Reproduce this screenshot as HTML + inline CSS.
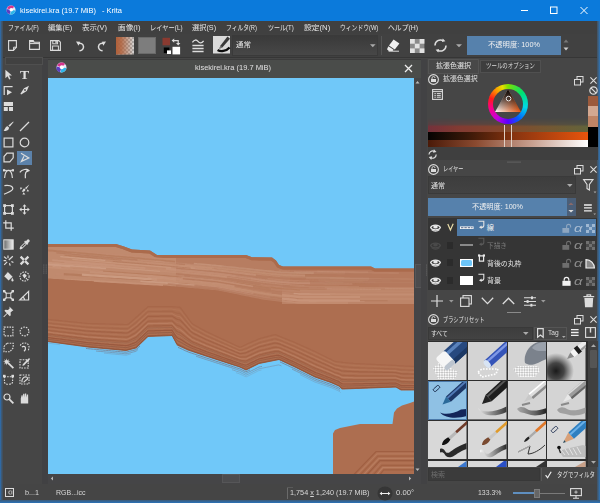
<!DOCTYPE html>
<html><head><meta charset="utf-8"><title>kisekirei.kra - Krita</title>
<style>

html,body{margin:0;padding:0;}
body{width:600px;height:503px;overflow:hidden;background:#464646;position:relative;font-family:"Liberation Sans","Noto Sans CJK JP",sans-serif;color:#ddd;font-size:8px;}
.a{position:absolute;}
.t{position:absolute;white-space:nowrap;line-height:14px;height:14px;display:inline-block;transform-origin:0 50%;}
svg{position:absolute;overflow:visible;}
</style></head><body>
<div class="a" style="left:0.0px;top:0.0px;width:600.0px;height:503.0px;background:linear-gradient(90deg,#2a70b8 0,#3c5a78 1.500px,#464646 3.500px);"></div>
<div class="a" style="left:3.0px;top:21.0px;width:594.0px;height:480.0px;background:#464646;"></div>
<div class="a" style="left:597.0px;top:21.0px;width:3.0px;height:482.0px;background:linear-gradient(90deg,#44505c,#2f74b5);"></div>
<div class="a" style="left:0.0px;top:500.0px;width:600.0px;height:3.0px;background:linear-gradient(180deg,#3d5a78,#2a72b8);"></div>
<div class="a" style="left:0.0px;top:0.0px;width:600.0px;height:21.0px;background:#0b7adb;"></div>
<svg class="a" style="left:6.2px;top:5.0px;" width="10" height="10" viewBox="0 0 11 11"><circle cx="5.5" cy="5.5" r="5" fill="#e9e4f3"/><path d="M1 3.5A5 5 0 0 1 9 2L5.5 5.5z" fill="#d6348c"/><path d="M.6 4.5A5 5 0 0 0 4 10.3L5.5 5.5z" fill="#5a3fc0"/><path d="M4.5 10.4A5 5 0 0 0 10.4 6L5.5 5.5z" fill="#2eb6e8"/><circle cx="5.8" cy="5.2" r="2" fill="#fff"/></svg>
<svg class="a" style="left:518.0px;top:0.0px;" width="82" height="21" viewBox="0 0 82 21"><path d="M3 10.5h7" stroke="#fff" stroke-width="1"/><rect x="32.5" y="7" width="6.5" height="6.5" fill="none" stroke="#fff" stroke-width="1"/><path d="M62.5 7l7 7m0-7l-7 7" stroke="#fff" stroke-width="1"/></svg>
<div class="a" style="left:3.0px;top:21.0px;width:594.0px;height:13.0px;background:#404040;"></div>
<div class="a" style="left:3.0px;top:34.0px;width:594.0px;height:22.5px;background:#414141;"></div>
<div class="a" style="left:3.0px;top:56.5px;width:594.0px;height:1.2px;background:#363636;"></div>
<div class="a" style="left:48.0px;top:58.5px;width:373.0px;height:19.5px;background:#4a4c4a;"></div>
<div class="a" style="left:48.0px;top:58.5px;width:373.0px;height:1.0px;background:#3c3c3c;"></div>
<svg class="a" style="left:404.0px;top:64.0px;" width="9" height="9" viewBox="0 0 9 9"><path d="M1 1l7 7m0-7l-7 7" stroke="#eee" stroke-width="1.3"/></svg>
<svg class="a" style="left:56.0px;top:62.0px;" width="11" height="11" viewBox="0 0 11 11"><circle cx="5.5" cy="5.5" r="5" fill="#e9e4f3"/><path d="M1 3.5A5 5 0 0 1 9 2L5.5 5.5z" fill="#d6348c"/><path d="M.6 4.5A5 5 0 0 0 4 10.3L5.5 5.5z" fill="#5a3fc0"/><path d="M4.5 10.4A5 5 0 0 0 10.4 6L5.5 5.5z" fill="#2eb6e8"/><circle cx="5.8" cy="5.2" r="2" fill="#fff"/></svg>
<svg class="a" style="left:48.0px;top:77.5px;overflow:hidden;" width="366" height="396" viewBox="48 77.5 366 396"><defs><clipPath id="cu"><polygon points="48.0,243.4 116.0,243.4 124.0,246.0 132.0,249.0 150.0,250.0 157.0,254.5 246.0,254.5 252.0,256.8 272.0,257.0 276.0,260.0 279.0,264.5 283.0,266.0 371.0,266.0 375.0,268.0 414.0,268.0 414.0,390.0 401.0,390.0 396.0,387.0 342.0,389.0 339.0,386.0 331.0,382.5 315.0,377.0 295.0,367.0 279.0,359.5 259.0,363.5 252.0,367.0 246.0,370.0 240.0,367.0 206.0,356.0 188.0,350.0 177.0,345.0 172.0,335.6 148.0,336.5 136.0,348.0 126.0,350.5 88.0,347.0 48.0,341.6"/></clipPath></defs><rect x="48" y="77" width="366" height="398" fill="#70c8f9"/><polygon points="48.0,243.4 116.0,243.4 124.0,246.0 132.0,249.0 150.0,250.0 157.0,254.5 246.0,254.5 252.0,256.8 272.0,257.0 276.0,260.0 279.0,264.5 283.0,266.0 371.0,266.0 375.0,268.0 414.0,268.0 414.0,390.0 401.0,390.0 396.0,387.0 342.0,389.0 339.0,386.0 331.0,382.5 315.0,377.0 295.0,367.0 279.0,359.5 259.0,363.5 252.0,367.0 246.0,370.0 240.0,367.0 206.0,356.0 188.0,350.0 177.0,345.0 172.0,335.6 148.0,336.5 136.0,348.0 126.0,350.5 88.0,347.0 48.0,341.6" fill="#ad6e50"/><g clip-path="url(#cu)" fill="none"><polygon points="48.0,246.4 50.0,246.4 52.0,246.4 54.0,246.4 56.0,246.4 58.0,246.4 60.0,246.4 62.0,246.4 64.0,246.4 66.0,246.4 68.0,246.4 70.0,246.4 72.0,246.4 74.0,246.4 76.0,246.4 78.0,246.4 80.0,246.4 82.0,246.4 84.0,246.4 86.0,246.4 88.0,246.4 90.0,246.4 92.0,246.4 94.0,246.4 96.0,246.4 98.0,246.4 100.0,246.4 102.0,246.4 104.0,246.4 106.0,246.4 108.0,246.4 110.0,246.4 112.0,246.4 114.0,246.4 116.0,246.4 118.0,247.1 120.0,247.7 122.0,248.3 124.0,249.0 126.0,249.8 128.0,250.5 130.0,251.2 132.0,252.0 134.0,252.1 136.0,252.2 138.0,252.3 140.0,252.4 142.0,252.6 144.0,252.7 146.0,252.8 148.0,252.9 150.0,253.0 152.0,254.3 154.0,255.6 156.0,256.9 158.0,257.5 160.0,257.5 162.0,257.5 164.0,257.5 166.0,257.5 168.0,257.5 170.0,257.5 172.0,257.5 174.0,257.5 176.0,257.5 176.0,286.0 174.0,285.8 172.0,285.7 170.0,285.5 168.0,285.3 166.0,285.1 164.0,284.9 162.0,284.8 160.0,284.7 158.0,284.6 156.0,284.5 154.0,284.3 152.0,284.2 150.0,284.1 148.0,284.0 146.0,283.9 144.0,283.7 142.0,283.6 140.0,283.5 138.0,283.4 136.0,283.3 134.0,283.1 132.0,283.0 130.0,282.9 128.0,282.8 126.0,282.7 124.0,282.5 122.0,282.4 120.0,282.3 118.0,282.2 116.0,282.1 114.0,281.9 112.0,281.8 110.0,281.7 108.0,281.6 106.0,281.5 104.0,281.4 102.0,281.2 100.0,281.1 98.0,281.0 96.0,280.9 94.0,280.8 92.0,280.6 90.0,280.5 88.0,280.4 86.0,280.3 84.0,280.2 82.0,280.0 80.0,279.9 78.0,279.8 76.0,279.7 74.0,279.6 72.0,279.4 70.0,279.3 68.0,279.2 66.0,279.1 64.0,279.0 62.0,278.8 60.0,278.7 58.0,278.6 56.0,278.5 54.0,278.4 52.0,278.2 50.0,278.1 48.0,278.0" fill="#c18b70" opacity="0.95"/><polygon points="176.0,257.5 178.0,257.5 180.0,257.5 182.0,257.5 184.0,257.5 186.0,257.5 188.0,257.5 190.0,257.5 192.0,257.5 194.0,257.5 196.0,257.5 198.0,257.5 200.0,257.5 202.0,257.5 204.0,257.5 206.0,257.5 208.0,257.5 210.0,257.5 212.0,257.5 214.0,257.5 216.0,257.5 218.0,257.5 220.0,257.5 222.0,257.5 224.0,257.5 226.0,257.5 228.0,257.5 230.0,257.5 232.0,257.5 234.0,257.5 236.0,257.5 238.0,257.5 240.0,257.5 242.0,257.5 244.0,257.5 246.0,257.5 248.0,258.3 250.0,259.0 252.0,259.8 254.0,259.8 256.0,259.8 258.0,259.9 260.0,259.9 262.0,259.9 264.0,259.9 266.0,259.9 268.0,260.0 270.0,260.0 272.0,260.0 274.0,261.5 276.0,263.0 278.0,266.0 280.0,267.9 282.0,268.6 284.0,269.0 286.0,269.0 288.0,269.0 290.0,269.0 290.0,302.4 288.0,302.1 286.0,301.9 284.0,301.7 282.0,301.4 280.0,301.2 278.0,301.0 276.0,300.8 274.0,300.5 272.0,300.3 270.0,300.1 268.0,299.8 266.0,299.6 264.0,299.3 262.0,298.9 260.0,298.5 258.0,298.1 256.0,297.7 254.0,297.3 252.0,296.9 250.0,296.5 248.0,296.1 246.0,295.7 244.0,295.3 242.0,294.9 240.0,294.4 238.0,294.0 236.0,293.6 234.0,293.2 232.0,292.8 230.0,292.4 228.0,292.0 226.0,291.6 224.0,291.2 222.0,290.8 220.0,290.4 218.0,290.0 216.0,289.8 214.0,289.6 212.0,289.4 210.0,289.2 208.0,289.1 206.0,288.9 204.0,288.7 202.0,288.5 200.0,288.3 198.0,288.1 196.0,287.9 194.0,287.7 192.0,287.5 190.0,287.4 188.0,287.2 186.0,287.0 184.0,286.8 182.0,286.6 180.0,286.4 178.0,286.2 176.0,286.0" fill="#be876c" opacity="0.60"/><polygon points="290.0,269.0 292.0,269.0 294.0,269.0 296.0,269.0 298.0,269.0 300.0,269.0 302.0,269.0 304.0,269.0 306.0,269.0 308.0,269.0 310.0,269.0 312.0,269.0 314.0,269.0 316.0,269.0 318.0,269.0 320.0,269.0 322.0,269.0 324.0,269.0 326.0,269.0 328.0,269.0 330.0,269.0 332.0,269.0 334.0,269.0 336.0,269.0 338.0,269.0 340.0,269.0 342.0,269.0 344.0,269.0 346.0,269.0 348.0,269.0 350.0,269.0 352.0,269.0 354.0,269.0 356.0,269.0 358.0,269.0 360.0,269.0 362.0,269.0 364.0,269.0 366.0,269.0 368.0,269.0 370.0,269.0 372.0,269.5 374.0,270.5 376.0,271.0 378.0,271.0 380.0,271.0 382.0,271.0 384.0,271.0 386.0,271.0 388.0,271.0 390.0,271.0 392.0,271.0 394.0,271.0 396.0,271.0 398.0,271.0 400.0,271.0 402.0,271.0 404.0,271.0 406.0,271.0 408.0,271.0 410.0,271.0 412.0,271.0 414.0,271.0 414.0,303.5 412.0,303.5 410.0,303.5 408.0,303.5 406.0,303.5 404.0,303.5 402.0,303.5 400.0,303.5 398.0,303.5 396.0,303.5 394.0,303.5 392.0,303.5 390.0,303.5 388.0,303.5 386.0,303.5 384.0,303.5 382.0,303.5 380.0,303.5 378.0,303.5 376.0,303.5 374.0,303.5 372.0,303.5 370.0,303.5 368.0,303.5 366.0,303.5 364.0,303.5 362.0,303.5 360.0,303.5 358.0,303.5 356.0,303.5 354.0,303.5 352.0,303.5 350.0,303.5 348.0,303.5 346.0,303.5 344.0,303.5 342.0,303.5 340.0,303.5 338.0,303.5 336.0,303.5 334.0,303.5 332.0,303.5 330.0,303.5 328.0,303.5 326.0,303.5 324.0,303.5 322.0,303.5 320.0,303.5 318.0,303.5 316.0,303.5 314.0,303.5 312.0,303.5 310.0,303.5 308.0,303.5 306.0,303.5 304.0,303.5 302.0,303.5 300.0,303.5 298.0,303.3 296.0,303.0 294.0,302.8 292.0,302.6 290.0,302.4" fill="#be876c" opacity="0.45"/><rect x="282" y="287" width="132" height="16.500" fill="#c08a6f" opacity=".7"/><polyline points="48.0,243.4 116.0,243.4 124.0,246.0 132.0,249.0 150.0,250.0 157.0,254.5 246.0,254.5 252.0,256.8 272.0,257.0 276.0,260.0 279.0,264.5 283.0,266.0 371.0,266.0 375.0,268.0 414.0,268.0" stroke="#ab6b4c" stroke-width="6"/><polyline points="197.9,273.5 200.9,273.8 203.9,274.1 206.9,274.4 209.9,274.6 212.9,274.9 215.9,275.2 218.9,275.5 221.9,276.0 224.9,276.4 227.9,276.8 230.9,277.3 233.9,277.7 236.9,278.1 239.9,278.6 242.9,279.0 245.9,279.5 248.9,279.9 251.9,280.3 254.9,280.8 257.9,281.2 260.9,281.6 263.9,282.1 266.9,282.4 269.9,282.7 272.9,283.1 275.9,283.4 278.9,283.7 281.9,284.0 284.9,284.2 287.9,284.4 290.9,284.6 293.9,284.8 296.9,285.0 299.9,285.2 302.9,285.2 305.9,285.2 308.9,285.2 311.9,285.3 314.9,285.3 317.9,285.3 320.9,285.3 323.9,285.4 326.9,285.4 329.9,285.4 332.9,285.4 335.9,285.5 338.9,285.5" stroke="#bd866a" stroke-width="1.3" opacity="0.46"/><polyline points="172.7,280.5 175.7,280.8 178.7,281.1 181.7,281.4 184.7,281.6 187.7,281.9 190.7,282.2 193.7,282.5 196.7,282.8 199.7,283.0 202.7,283.3 205.7,283.6 208.7,283.9 211.7,284.2 214.7,284.5 217.7,284.7 220.7,285.3 223.7,285.8 226.7,286.4 229.7,286.9 232.7,287.4 235.7,288.0 238.7,288.5 241.7,289.1 244.7,289.6 247.7,290.2 250.7,290.7 253.7,291.3 256.7,291.8 259.7,292.4 262.7,292.9 265.7,293.4 268.7,293.7 271.7,294.1 274.7,294.4 277.7,294.7 280.7,295.1" stroke="#ca987e" stroke-width="1.8" opacity="0.37"/><polyline points="191.6,264.6 194.6,264.9 197.6,265.2 200.6,265.5 203.6,265.8 206.6,266.0 209.6,266.3 212.6,266.6 215.6,266.9 218.6,267.2 221.6,267.5 224.6,267.9 227.6,268.2 230.6,268.5 233.6,268.9 236.6,269.2 239.6,269.6 242.6,269.9 245.6,270.2 248.6,270.6 251.6,270.9 254.6,271.3 257.6,271.6 260.6,271.9 263.6,272.3 266.6,272.6 269.6,272.9 272.6,273.2 275.6,273.5 278.6,273.8 281.6,274.1 284.6,274.3 287.6,274.4 290.6,274.5 293.6,274.6 296.6,274.7 299.6,274.8 302.6,274.8 305.6,274.8 308.6,274.9 311.6,274.9 314.6,275.0 317.6,275.0 320.6,275.0 323.6,275.1 326.6,275.1 329.6,275.1" stroke="#b57b5e" stroke-width="2.2" opacity="0.52"/><polyline points="214.7,280.5 217.7,280.7 220.7,281.2 223.7,281.7 226.7,282.2 229.7,282.7 232.7,283.2 235.7,283.7 238.7,284.2 241.7,284.7 244.7,285.2 247.7,285.7 250.7,286.2 253.7,286.7 256.7,287.2 259.7,287.7 262.7,288.2 265.7,288.7 268.7,289.0 271.7,289.3" stroke="#c18a6f" stroke-width="1.0" opacity="0.31"/><polyline points="293.9,271.1 296.9,271.1 299.9,271.2 302.9,271.3 305.9,271.3 308.9,271.3 311.9,271.4 314.9,271.4 317.9,271.5 320.9,271.5 323.9,271.5 326.9,271.6 329.9,271.6 332.9,271.7 335.9,271.7 338.9,271.8 341.9,271.8 344.9,271.8 347.9,271.9 350.9,271.9 353.9,272.0 356.9,272.0 359.9,272.1 362.9,272.1 365.9,272.1 368.9,272.2 371.9,272.2 374.9,272.3 377.9,272.3 380.9,272.3 383.9,272.4 386.9,272.4 389.9,272.5 392.9,272.5 395.9,272.6 398.9,272.6" stroke="#ca987e" stroke-width="1.8" opacity="0.25"/><polyline points="282.7,283.7 285.7,283.9 288.7,284.1 291.7,284.3 294.7,284.4 297.7,284.6 300.7,284.8 303.7,284.8 306.7,284.8 309.7,284.8 312.7,284.9 315.7,284.9 318.7,284.9 321.7,284.9 324.7,285.0 327.7,285.0 330.7,285.0 333.7,285.0 336.7,285.1 339.7,285.1 342.7,285.1 345.7,285.1 348.7,285.2 351.7,285.2 354.7,285.2 357.7,285.2 360.7,285.3 363.7,285.3 366.7,285.3 369.7,285.3 372.7,285.4 375.7,285.4 378.7,285.4" stroke="#b37859" stroke-width="2.2" opacity="0.25"/><polyline points="55.5,248.4 58.5,248.7 61.5,249.0 64.5,249.3 67.5,249.5 70.5,249.8 73.5,250.1 76.5,250.4 79.5,250.6 82.5,250.9 85.5,251.2 88.5,251.5 91.5,251.7 94.5,252.0 97.5,252.3 100.5,252.6 103.5,252.8 106.5,253.1 109.5,253.4 112.5,253.7 115.5,253.9 118.5,254.2 121.5,254.5 124.5,254.8 127.5,255.0 130.5,255.3 133.5,255.6 136.5,255.9 139.5,256.1 142.5,256.4 145.5,256.7 148.5,257.0 151.5,257.3 154.5,257.5 157.5,257.8 160.5,258.1 163.5,258.4 166.5,258.6" stroke="#c18a6f" stroke-width="1.8" opacity="0.82"/><polyline points="98.9,261.4 101.9,261.6 104.9,261.8 107.9,262.1 110.9,262.3 113.9,262.6 116.9,262.8 119.9,263.1 122.9,263.3 125.9,263.6 128.9,263.8 131.9,264.1 134.9,264.3 137.9,264.5 140.9,264.8 143.9,265.0 146.9,265.3 149.9,265.5 152.9,265.8 155.9,266.0 158.9,266.3 161.9,266.5 164.9,266.8 167.9,267.0 170.9,267.3" stroke="#c18a6f" stroke-width="2.2" opacity="0.72"/><polyline points="117.3,257.0 120.3,257.3 123.3,257.5 126.3,257.8 129.3,258.1 132.3,258.3 135.3,258.6 138.3,258.9 141.3,259.1 144.3,259.4 147.3,259.7 150.3,259.9 153.3,260.2 156.3,260.5 159.3,260.7 162.3,261.0 165.3,261.3" stroke="#c79379" stroke-width="1.3" opacity="0.71"/><polyline points="303.1,277.1 306.1,277.1 309.1,277.1 312.1,277.2 315.1,277.2 318.1,277.2 321.1,277.3 324.1,277.3 327.1,277.4 330.1,277.4 333.1,277.4 336.1,277.5 339.1,277.5 342.1,277.5 345.1,277.6 348.1,277.6 351.1,277.6 354.1,277.7 357.1,277.7 360.1,277.7 363.1,277.8 366.1,277.8 369.1,277.8 372.1,277.9 375.1,277.9 378.1,277.9 381.1,278.0 384.1,278.0 387.1,278.0 390.1,278.1 393.1,278.1" stroke="#b57b5e" stroke-width="2.2" opacity="0.25"/><polyline points="218.8,265.4 221.8,265.7 224.8,266.0 227.8,266.3 230.8,266.6 233.8,267.0 236.8,267.3 239.8,267.6 242.8,267.9 245.8,268.2 248.8,268.6 251.8,268.9 254.8,269.2 257.8,269.5 260.8,269.8 263.8,270.2 266.8,270.5 269.8,270.7 272.8,271.0 275.8,271.3 278.8,271.6 281.8,271.9 284.8,272.1 287.8,272.1 290.8,272.2 293.8,272.3 296.8,272.4 299.8,272.5 302.8,272.5 305.8,272.5 308.8,272.6 311.8,272.6 314.8,272.7 317.8,272.7 320.8,272.7 323.8,272.8 326.8,272.8 329.8,272.9 332.8,272.9 335.8,272.9 338.8,273.0 341.8,273.0 344.8,273.1" stroke="#c18a6f" stroke-width="1.8" opacity="0.39"/><polyline points="319.2,281.3 322.2,281.4 325.2,281.4 328.2,281.4 331.2,281.5 334.2,281.5 337.2,281.5 340.2,281.5 343.2,281.6 346.2,281.6 349.2,281.6 352.2,281.7 355.2,281.7 358.2,281.7 361.2,281.7 364.2,281.8 367.2,281.8 370.2,281.8 373.2,281.9 376.2,281.9 379.2,281.9 382.2,282.0 385.2,282.0 388.2,282.0 391.2,282.0 394.2,282.1 397.2,282.1 400.2,282.1 403.2,282.2 406.2,282.2 409.2,282.2 412.2,282.2 415.2,282.3" stroke="#c18a6f" stroke-width="1.3" opacity="0.25"/><polyline points="60.3,256.1 63.3,256.4 66.3,256.6 69.3,256.9 72.3,257.1 75.3,257.4 78.3,257.6 81.3,257.9 84.3,258.1 87.3,258.4 90.3,258.6 93.3,258.9 96.3,259.2 99.3,259.4 102.3,259.7 105.3,259.9" stroke="#cc9c83" stroke-width="1.3" opacity="0.94"/><polyline points="87.2,264.2 90.2,264.5 93.2,264.7 96.2,264.9 99.2,265.2 102.2,265.4 105.2,265.6 108.2,265.9 111.2,266.1 114.2,266.3 117.2,266.6 120.2,266.8 123.2,267.0 126.2,267.3 129.2,267.5 132.2,267.7 135.2,268.0 138.2,268.2 141.2,268.4 144.2,268.7 147.2,268.9 150.2,269.1 153.2,269.4 156.2,269.6 159.2,269.8 162.2,270.1 165.2,270.3 168.2,270.6 171.2,270.9 174.2,271.1 177.2,271.4 180.2,271.7 183.2,272.0 186.2,272.3 189.2,272.6 192.2,272.8 195.2,273.1 198.2,273.4 201.2,273.7 204.2,274.0 207.2,274.2" stroke="#b57b5e" stroke-width="1.0" opacity="0.74"/><polyline points="327.0,283.5 330.0,283.5 333.0,283.5 336.0,283.6 339.0,283.6 342.0,283.6 345.0,283.6 348.0,283.7 351.0,283.7 354.0,283.7 357.0,283.7 360.0,283.8 363.0,283.8 366.0,283.8" stroke="#b37859" stroke-width="1.0" opacity="0.25"/><polyline points="148.3,262.6 151.3,262.8 154.3,263.1 157.3,263.3 160.3,263.6 163.3,263.8 166.3,264.1 169.3,264.4 172.3,264.7 175.3,264.9 178.3,265.2 181.3,265.5 184.3,265.8 187.3,266.1 190.3,266.3 193.3,266.6 196.3,266.9 199.3,267.2 202.3,267.5 205.3,267.8 208.3,268.0 211.3,268.3 214.3,268.6 217.3,268.9 220.3,269.2 223.3,269.6 226.3,269.9 229.3,270.3 232.3,270.7 235.3,271.0 238.3,271.4 241.3,271.8 244.3,272.1 247.3,272.5 250.3,272.8 253.3,273.2 256.3,273.6 259.3,273.9 262.3,274.3 265.3,274.6 268.3,274.9 271.3,275.2 274.3,275.5 277.3,275.8 280.3,276.1" stroke="#c18a6f" stroke-width="1.0" opacity="0.52"/><polyline points="94.0,280.4 97.0,280.6 100.0,280.8 103.0,281.0 106.0,281.2 109.0,281.3 112.0,281.5 115.0,281.7 118.0,281.9 121.0,282.1 124.0,282.2 127.0,282.4 130.0,282.6 133.0,282.8 136.0,283.0 139.0,283.1 142.0,283.3 145.0,283.5 148.0,283.7 151.0,283.9 154.0,284.1 157.0,284.2 160.0,284.4 163.0,284.6" stroke="#c69176" stroke-width="1.8" opacity="0.93"/><polyline points="52.3,259.7 55.3,259.9 58.3,260.2 61.3,260.4 64.3,260.6 67.3,260.9 70.3,261.1 73.3,261.4 76.3,261.6 79.3,261.8 82.3,262.1 85.3,262.3 88.3,262.5 91.3,262.8 94.3,263.0 97.3,263.3 100.3,263.5 103.3,263.7 106.3,264.0 109.3,264.2 112.3,264.5 115.3,264.7" stroke="#c79379" stroke-width="1.8" opacity="0.89"/><polyline points="166.0,268.4 169.0,268.6 172.0,268.9 175.0,269.2 178.0,269.5 181.0,269.8 184.0,270.0 187.0,270.3 190.0,270.6 193.0,270.9 196.0,271.2 199.0,271.5 202.0,271.7 205.0,272.0 208.0,272.3 211.0,272.6 214.0,272.9 217.0,273.1 220.0,273.5 223.0,273.9 226.0,274.3 229.0,274.7 232.0,275.2 235.0,275.6 238.0,276.0 241.0,276.4 244.0,276.8 247.0,277.2 250.0,277.6 253.0,278.0 256.0,278.5 259.0,278.9 262.0,279.3 265.0,279.7 268.0,280.0 271.0,280.3 274.0,280.6 277.0,280.9 280.0,281.2 283.0,281.5 286.0,281.7 289.0,281.9 292.0,282.0 295.0,282.2 298.0,282.4 301.0,282.5 304.0,282.5 307.0,282.5 310.0,282.6" stroke="#cc9c83" stroke-width="2.2" opacity="0.47"/><polyline points="76.2,255.6 79.2,255.8 82.2,256.1 85.2,256.4 88.2,256.6 91.2,256.9 94.2,257.1 97.2,257.4 100.2,257.7 103.2,257.9 106.2,258.2 109.2,258.4 112.2,258.7 115.2,259.0 118.2,259.2 121.2,259.5 124.2,259.7 127.2,260.0 130.2,260.2 133.2,260.5 136.2,260.8 139.2,261.0 142.2,261.3 145.2,261.5 148.2,261.8 151.2,262.1 154.2,262.3 157.2,262.6 160.2,262.8 163.2,263.1 166.2,263.4 169.2,263.6 172.2,263.9 175.2,264.2 178.2,264.5 181.2,264.8 184.2,265.0 187.2,265.3 190.2,265.6 193.2,265.9 196.2,266.2 199.2,266.4 202.2,266.7 205.2,267.0 208.2,267.3 211.2,267.6 214.2,267.9" stroke="#bd866a" stroke-width="1.3" opacity="0.95"/><polyline points="218.7,267.6 221.7,268.0 224.7,268.3 227.7,268.7 230.7,269.0 233.7,269.4 236.7,269.7 239.7,270.1 242.7,270.4 245.7,270.7 248.7,271.1 251.7,271.4 254.7,271.8 257.7,272.1 260.7,272.5 263.7,272.8 266.7,273.1 269.7,273.4 272.7,273.7 275.7,274.0 278.7,274.3 281.7,274.6 284.7,274.8 287.7,274.9 290.7,275.0 293.7,275.1 296.7,275.2 299.7,275.3 302.7,275.4 305.7,275.4 308.7,275.4 311.7,275.5 314.7,275.5 317.7,275.5" stroke="#b57b5e" stroke-width="2.2" opacity="0.54"/><polyline points="156.4,273.8 159.4,274.0 162.4,274.3 165.4,274.5 168.4,274.8 171.4,275.0 174.4,275.3 177.4,275.6 180.4,275.9 183.4,276.2 186.4,276.5 189.4,276.7 192.4,277.0 195.4,277.3 198.4,277.6 201.4,277.9 204.4,278.1 207.4,278.4" stroke="#b37859" stroke-width="1.3" opacity="0.31"/><polyline points="147.5,276.9 150.5,277.1 153.5,277.3 156.5,277.5 159.5,277.7 162.5,277.9 165.5,278.1 168.5,278.4 171.5,278.7 174.5,279.0 177.5,279.2 180.5,279.5 183.5,279.8 186.5,280.1 189.5,280.4 192.5,280.7 195.5,280.9 198.5,281.2 201.5,281.5 204.5,281.8 207.5,282.1 210.5,282.4 213.5,282.6 216.5,282.9 219.5,283.3 222.5,283.8 225.5,284.4 228.5,284.9 231.5,285.4 234.5,285.9" stroke="#ca987e" stroke-width="1.8" opacity="0.62"/><polyline points="308.8,287.5 311.8,287.5 314.8,287.5 317.8,287.6 320.8,287.6 323.8,287.6 326.8,287.6 329.8,287.6 332.8,287.7 335.8,287.7 338.8,287.7 341.8,287.7 344.8,287.7 347.8,287.8 350.8,287.8 353.8,287.8 356.8,287.8 359.8,287.8 362.8,287.9 365.8,287.9 368.8,287.9 371.8,287.9 374.8,288.0 377.8,288.0 380.8,288.0 383.8,288.0 386.8,288.0 389.8,288.1 392.8,288.1 395.8,288.1 398.8,288.1 401.8,288.1 404.8,288.2 407.8,288.2 410.8,288.2 413.8,288.2 416.8,288.2" stroke="#ca987e" stroke-width="1.0" opacity="0.64"/><polyline points="305.2,279.5 308.2,279.5 311.2,279.5 314.2,279.6 317.2,279.6 320.2,279.6 323.2,279.6 326.2,279.7 329.2,279.7 332.2,279.7 335.2,279.8 338.2,279.8 341.2,279.8 344.2,279.9 347.2,279.9 350.2,279.9 353.2,280.0 356.2,280.0 359.2,280.0 362.2,280.1 365.2,280.1 368.2,280.1" stroke="#c79379" stroke-width="1.0" opacity="0.25"/><polyline points="163.7,265.4 166.7,265.7 169.7,266.0 172.7,266.3 175.7,266.5 178.7,266.8 181.7,267.1 184.7,267.4 187.7,267.7 190.7,267.9 193.7,268.2 196.7,268.5 199.7,268.8 202.7,269.1 205.7,269.4 208.7,269.6" stroke="#c69176" stroke-width="1.3" opacity="0.36"/><polyline points="71.5,252.5 74.5,252.8 77.5,253.0 80.5,253.3 83.5,253.6 86.5,253.8 89.5,254.1 92.5,254.4 95.5,254.6 98.5,254.9 101.5,255.2 104.5,255.4 107.5,255.7 110.5,256.0 113.5,256.2 116.5,256.5 119.5,256.8 122.5,257.0 125.5,257.3 128.5,257.6 131.5,257.8 134.5,258.1 137.5,258.4 140.5,258.6 143.5,258.9 146.5,259.2 149.5,259.4 152.5,259.7 155.5,260.0 158.5,260.2 161.5,260.5" stroke="#cc9c83" stroke-width="1.0" opacity="0.80"/><polyline points="172.4,283.7 175.4,283.9 178.4,284.2 181.4,284.5 184.4,284.8 187.4,285.1 190.4,285.4 193.4,285.6 196.4,285.9 199.4,286.2 202.4,286.5 205.4,286.8 208.4,287.1 211.4,287.3 214.4,287.6 217.4,287.9 220.4,288.4 223.4,289.0 226.4,289.6 229.4,290.2 232.4,290.8 235.4,291.3 238.4,291.9 241.4,292.5 244.4,293.1 247.4,293.7 250.4,294.3" stroke="#c79379" stroke-width="1.0" opacity="0.41"/><polyline points="52.5,266.1 55.5,266.3 58.5,266.6 61.5,266.8 64.5,267.0 67.5,267.2 70.5,267.4 73.5,267.6 76.5,267.9 79.5,268.1 82.5,268.3 85.5,268.5 88.5,268.7 91.5,269.0 94.5,269.2 97.5,269.4 100.5,269.6" stroke="#cc9c83" stroke-width="1.0" opacity="0.79"/><polyline points="193.8,263.1 196.8,263.4 199.8,263.6 202.8,263.9 205.8,264.2 208.8,264.5 211.8,264.8 214.8,265.0 217.8,265.3 220.8,265.6 223.8,266.0 226.8,266.3 229.8,266.6 232.8,266.9 235.8,267.2 238.8,267.6 241.8,267.9 244.8,268.2 247.8,268.5 250.8,268.8 253.8,269.2 256.8,269.5 259.8,269.8 262.8,270.1 265.8,270.4 268.8,270.7 271.8,271.0 274.8,271.3 277.8,271.6 280.8,271.9 283.8,272.1 286.8,272.2 289.8,272.3 292.8,272.3 295.8,272.4 298.8,272.5 301.8,272.6 304.8,272.6 307.8,272.6 310.8,272.7 313.8,272.7" stroke="#cc9c83" stroke-width="1.8" opacity="0.62"/><polyline points="235.5,275.1 238.5,275.5 241.5,275.9 244.5,276.3 247.5,276.7 250.5,277.1 253.5,277.5 256.5,277.9 259.5,278.3 262.5,278.7 265.5,279.1 268.5,279.4 271.5,279.7 274.5,280.0 277.5,280.3 280.5,280.6 283.5,280.9 286.5,281.1 289.5,281.2 292.5,281.4 295.5,281.6 298.5,281.7 301.5,281.8 304.5,281.8 307.5,281.9 310.5,281.9 313.5,281.9 316.5,282.0 319.5,282.0 322.5,282.0 325.5,282.0 328.5,282.1 331.5,282.1 334.5,282.1 337.5,282.2 340.5,282.2 343.5,282.2 346.5,282.2 349.5,282.3 352.5,282.3 355.5,282.3 358.5,282.4 361.5,282.4 364.5,282.4 367.5,282.4 370.5,282.5 373.5,282.5" stroke="#b57b5e" stroke-width="1.0" opacity="0.25"/><polyline points="201.8,284.8 204.8,285.1 207.8,285.4 210.8,285.7 213.8,286.0 216.8,286.2 219.8,286.7 222.8,287.3 225.8,287.8 228.8,288.4 231.8,289.0 234.8,289.5 237.8,290.1 240.8,290.7 243.8,291.2 246.8,291.8 249.8,292.3 252.8,292.9 255.8,293.5 258.8,294.0 261.8,294.6 264.8,295.2 267.8,295.5 270.8,295.8 273.8,296.2 276.8,296.5 279.8,296.9 282.8,297.2 285.8,297.5 288.8,297.8 291.8,298.1 294.8,298.4 297.8,298.7 300.8,298.9 303.8,298.9 306.8,298.9 309.8,298.9" stroke="#c79379" stroke-width="1.0" opacity="0.43"/><polyline points="221.8,265.9 224.8,266.2 227.8,266.5 230.8,266.8 233.8,267.2 236.8,267.5 239.8,267.8 242.8,268.1 245.8,268.4 248.8,268.8 251.8,269.1 254.8,269.4 257.8,269.7 260.8,270.1 263.8,270.4 266.8,270.7 269.8,271.0 272.8,271.3 275.8,271.5 278.8,271.8 281.8,272.1 284.8,272.3 287.8,272.4 290.8,272.5 293.8,272.5 296.8,272.6 299.8,272.7 302.8,272.7 305.8,272.8 308.8,272.8 311.8,272.9 314.8,272.9 317.8,272.9 320.8,273.0 323.8,273.0 326.8,273.1 329.8,273.1 332.8,273.1 335.8,273.2 338.8,273.2 341.8,273.3 344.8,273.3 347.8,273.3 350.8,273.4 353.8,273.4 356.8,273.5 359.8,273.5 362.8,273.5 365.8,273.6 368.8,273.6 371.8,273.7" stroke="#b57b5e" stroke-width="1.8" opacity="0.25"/><polyline points="250.5,278.2 253.5,278.6 256.5,279.0 259.5,279.5 262.5,279.9 265.5,280.3 268.5,280.6 271.5,280.9 274.5,281.2 277.5,281.5 280.5,281.8 283.5,282.1 286.5,282.3 289.5,282.4 292.5,282.6 295.5,282.8 298.5,282.9 301.5,283.0 304.5,283.1 307.5,283.1 310.5,283.1 313.5,283.1 316.5,283.2 319.5,283.2 322.5,283.2 325.5,283.3 328.5,283.3 331.5,283.3 334.5,283.3 337.5,283.4 340.5,283.4 343.5,283.4 346.5,283.4 349.5,283.5 352.5,283.5" stroke="#ca987e" stroke-width="2.2" opacity="0.25"/><polyline points="55.1,273.6 58.1,273.7 61.1,273.9 64.1,274.1 67.1,274.3 70.1,274.5 73.1,274.7 76.1,274.9 79.1,275.1 82.1,275.3 85.1,275.5 88.1,275.7 91.1,275.9 94.1,276.1 97.1,276.3 100.1,276.5 103.1,276.7 106.1,276.9 109.1,277.1 112.1,277.3 115.1,277.5 118.1,277.6 121.1,277.8 124.1,278.0 127.1,278.2 130.1,278.4 133.1,278.6 136.1,278.8 139.1,279.0 142.1,279.2 145.1,279.4 148.1,279.6 151.1,279.8 154.1,280.0 157.1,280.2 160.1,280.4 163.1,280.6 166.1,280.8 169.1,281.1 172.1,281.4 175.1,281.7 178.1,281.9" stroke="#c18a6f" stroke-width="2.2" opacity="0.71"/><polyline points="317.2,271.0 320.2,271.1 323.2,271.1 326.2,271.1 329.2,271.2 332.2,271.2 335.2,271.3 338.2,271.3 341.2,271.4 344.2,271.4 347.2,271.4 350.2,271.5 353.2,271.5 356.2,271.6 359.2,271.6 362.2,271.7 365.2,271.7 368.2,271.7" stroke="#ca987e" stroke-width="1.8" opacity="0.25"/><polyline points="140.4,280.7 143.4,280.9 146.4,281.1 149.4,281.3 152.4,281.4 155.4,281.6 158.4,281.8 161.4,282.0 164.4,282.2 167.4,282.5 170.4,282.7 173.4,283.0 176.4,283.3 179.4,283.6 182.4,283.9 185.4,284.2 188.4,284.4 191.4,284.7 194.4,285.0" stroke="#cc9c83" stroke-width="1.8" opacity="0.88"/><polyline points="162.6,275.8 165.6,276.0 168.6,276.3 171.6,276.6 174.6,276.8 177.6,277.1 180.6,277.4 183.6,277.7 186.6,278.0 189.6,278.3 192.6,278.5 195.6,278.8 198.6,279.1 201.6,279.4 204.6,279.7 207.6,280.0 210.6,280.2 213.6,280.5 216.6,280.8 219.6,281.2 222.6,281.7 225.6,282.2 228.6,282.7 231.6,283.2 234.6,283.7 237.6,284.2 240.6,284.7 243.6,285.2 246.6,285.7 249.6,286.2 252.6,286.7 255.6,287.2 258.6,287.7 261.6,288.2 264.6,288.7 267.6,289.1 270.6,289.4 273.6,289.7 276.6,290.0 279.6,290.3 282.6,290.7 285.6,290.9 288.6,291.2 291.6,291.4 294.6,291.7 297.6,291.9 300.6,292.1" stroke="#b37859" stroke-width="1.3" opacity="0.41"/><polyline points="271.1,288.6 274.1,288.9 277.1,289.3 280.1,289.6 283.1,289.9 286.1,290.1 289.1,290.4 292.1,290.6 295.1,290.9 298.1,291.1 301.1,291.3 304.1,291.3 307.1,291.3 310.1,291.3 313.1,291.3 316.1,291.3 319.1,291.4 322.1,291.4 325.1,291.4 328.1,291.4 331.1,291.4 334.1,291.4 337.1,291.4 340.1,291.5 343.1,291.5 346.1,291.5 349.1,291.5 352.1,291.5 355.1,291.5 358.1,291.6 361.1,291.6 364.1,291.6 367.1,291.6 370.1,291.6 373.1,291.6 376.1,291.7 379.1,291.7 382.1,291.7 385.1,291.7 388.1,291.7 391.1,291.7 394.1,291.8" stroke="#bd866a" stroke-width="2.2" opacity="0.66"/><polyline points="306.2,277.4 309.2,277.5 312.2,277.5 315.2,277.5 318.2,277.6 321.2,277.6 324.2,277.6 327.2,277.7 330.2,277.7 333.2,277.7 336.2,277.8 339.2,277.8 342.2,277.9 345.2,277.9 348.2,277.9 351.2,278.0 354.2,278.0 357.2,278.0 360.2,278.1 363.2,278.1 366.2,278.1 369.2,278.2" stroke="#cc9c83" stroke-width="2.2" opacity="0.25"/><polyline points="298.7,281.7 301.7,281.8 304.7,281.8 307.7,281.8 310.7,281.9 313.7,281.9 316.7,281.9 319.7,281.9 322.7,282.0 325.7,282.0 328.7,282.0 331.7,282.1 334.7,282.1 337.7,282.1 340.7,282.1 343.7,282.2" stroke="#c18a6f" stroke-width="1.8" opacity="0.25"/><polyline points="63.8,273.6 66.8,273.8 69.8,274.0 72.8,274.2 75.8,274.4 78.8,274.6 81.8,274.8 84.8,275.0 87.8,275.2 90.8,275.4 93.8,275.6 96.8,275.8 99.8,276.0 102.8,276.2 105.8,276.4 108.8,276.6 111.8,276.8 114.8,277.0 117.8,277.2 120.8,277.4 123.8,277.6 126.8,277.8 129.8,278.0 132.8,278.1 135.8,278.3 138.8,278.5 141.8,278.7 144.8,278.9 147.8,279.1 150.8,279.3 153.8,279.5" stroke="#b57b5e" stroke-width="2.2" opacity="0.98"/><polyline points="178.2,276.3 181.2,276.6 184.2,276.8 187.2,277.1 190.2,277.4 193.2,277.7 196.2,278.0 199.2,278.2 202.2,278.5 205.2,278.8 208.2,279.1 211.2,279.4 214.2,279.7 217.2,279.9 220.2,280.4 223.2,280.9 226.2,281.4 229.2,281.8 232.2,282.3 235.2,282.8 238.2,283.3 241.2,283.8 244.2,284.3 247.2,284.8 250.2,285.3 253.2,285.8" stroke="#ca987e" stroke-width="1.8" opacity="0.59"/><polyline points="46.0,249.9 49.0,250.0 52.0,250.2 55.0,250.5 58.0,250.8 61.0,251.0 64.0,251.3 67.0,251.6 70.0,251.8 73.0,252.1 76.0,252.4 79.0,252.6 82.0,252.9 85.0,253.2 88.0,253.5 91.0,253.7 94.0,254.0 97.0,254.3 100.0,254.5 103.0,254.8 106.0,255.1 109.0,255.3 112.0,255.6 115.0,255.9 118.0,256.1 121.0,256.4 124.0,256.7 127.0,257.0 130.0,257.2 133.0,257.5 136.0,257.8 139.0,258.0 142.0,258.3 145.0,258.6 148.0,258.8 151.0,259.1 154.0,259.4 157.0,259.6 160.0,259.9 163.0,260.2 166.0,260.5 169.0,260.7 172.0,261.0 175.0,261.3" stroke="#b37859" stroke-width="1.8" opacity="0.71"/><polyline points="267.5,278.0 270.5,278.3 273.5,278.6 276.5,278.9 279.5,279.2 282.5,279.5 285.5,279.7 288.5,279.8 291.5,279.9 294.5,280.1 297.5,280.2 300.5,280.4 303.5,280.4 306.5,280.4 309.5,280.5" stroke="#ca987e" stroke-width="1.3" opacity="0.35"/><polyline points="278.9,270.1 281.9,270.4 284.9,270.5 287.9,270.6 290.9,270.6 293.9,270.7 296.9,270.8 299.9,270.8 302.9,270.9 305.9,270.9 308.9,271.0 311.9,271.0 314.9,271.1 317.9,271.1 320.9,271.1 323.9,271.2 326.9,271.2 329.9,271.3 332.9,271.3 335.9,271.4 338.9,271.4 341.9,271.4 344.9,271.5" stroke="#cc9c83" stroke-width="1.0" opacity="0.25"/><polyline points="64.6,278.5 67.6,278.7 70.6,278.9 73.6,279.1 76.6,279.2 79.6,279.4 82.6,279.6 85.6,279.8 88.6,280.0 91.6,280.1 94.6,280.3 97.6,280.5 100.6,280.7 103.6,280.9 106.6,281.0 109.6,281.2 112.6,281.4 115.6,281.6" stroke="#c69176" stroke-width="1.0" opacity="0.86"/><polyline points="89.8,271.3 92.8,271.5 95.8,271.8 98.8,272.0 101.8,272.2 104.8,272.4 107.8,272.6 110.8,272.8 113.8,273.0 116.8,273.2 119.8,273.4 122.8,273.6 125.8,273.9 128.8,274.1 131.8,274.3 134.8,274.5 137.8,274.7 140.8,274.9 143.8,275.1 146.8,275.3 149.8,275.5 152.8,275.7 155.8,276.0 158.8,276.2 161.8,276.4 164.8,276.6 167.8,276.9 170.8,277.1 173.8,277.4 176.8,277.7 179.8,278.0 182.8,278.3" stroke="#c79379" stroke-width="2.2" opacity="0.75"/><polyline points="46.0,263.9 49.0,263.9 52.0,264.2 55.0,264.4 58.0,264.6 61.0,264.8 64.0,265.1 67.0,265.3 70.0,265.5 73.0,265.7 76.0,266.0 79.0,266.2 82.0,266.4 85.0,266.6 88.0,266.9 91.0,267.1 94.0,267.3 97.0,267.5 100.0,267.7 103.0,268.0 106.0,268.2" stroke="#cc9c83" stroke-width="2.2" opacity="0.93"/><polyline points="239.9,290.1 242.9,290.6 245.9,291.2 248.9,291.7 251.9,292.3 254.9,292.9 257.9,293.4 260.9,294.0 263.9,294.5 266.9,294.9 269.9,295.3 272.9,295.6 275.9,295.9 278.9,296.3 281.9,296.6 284.9,296.9 287.9,297.2 290.9,297.5 293.9,297.8 296.9,298.1 299.9,298.4 302.9,298.4" stroke="#b57b5e" stroke-width="1.3" opacity="0.44"/><polyline points="89.1,264.5 92.1,264.7 95.1,264.9 98.1,265.2 101.1,265.4 104.1,265.6 107.1,265.9 110.1,266.1 113.1,266.3 116.1,266.6 119.1,266.8 122.1,267.0 125.1,267.3 128.1,267.5 131.1,267.7 134.1,268.0 137.1,268.2 140.1,268.4 143.1,268.7 146.1,268.9 149.1,269.1 152.1,269.4 155.1,269.6 158.1,269.8 161.1,270.1 164.1,270.3 167.1,270.6 170.1,270.8 173.1,271.1 176.1,271.4 179.1,271.7 182.1,272.0 185.1,272.3 188.1,272.5 191.1,272.8 194.1,273.1 197.1,273.4 200.1,273.7 203.1,273.9 206.1,274.2 209.1,274.5 212.1,274.8 215.1,275.1 218.1,275.4 221.1,275.8 224.1,276.2 227.1,276.7" stroke="#c69176" stroke-width="2.2" opacity="0.70"/><polyline points="324.7,281.2 327.7,281.2 330.7,281.3 333.7,281.3 336.7,281.3 339.7,281.3 342.7,281.4 345.7,281.4 348.7,281.4 351.7,281.5 354.7,281.5 357.7,281.5 360.7,281.5 363.7,281.6 366.7,281.6 369.7,281.6 372.7,281.7 375.7,281.7" stroke="#c18a6f" stroke-width="1.3" opacity="0.25"/><polyline points="147.1,263.3 150.1,263.6 153.1,263.8 156.1,264.1 159.1,264.3 162.1,264.6 165.1,264.8 168.1,265.1 171.1,265.4 174.1,265.7 177.1,266.0 180.1,266.2 183.1,266.5 186.1,266.8 189.1,267.1 192.1,267.4 195.1,267.6" stroke="#c69176" stroke-width="1.8" opacity="0.79"/><polyline points="286.7,299.1 289.7,299.4 292.7,299.7 295.7,300.0 298.7,300.4 301.7,300.5 304.7,300.5 307.7,300.5 310.7,300.5 313.7,300.5 316.7,300.5 319.7,300.5 322.7,300.5 325.7,300.5 328.7,300.5 331.7,300.5 334.7,300.5 337.7,300.5 340.7,300.5 343.7,300.5 346.7,300.5 349.7,300.6 352.7,300.6 355.7,300.6 358.7,300.6 361.7,300.6 364.7,300.6" stroke="#ca987e" stroke-width="1.8" opacity="0.62"/><polyline points="260.5,284.6 263.5,285.1 266.5,285.5 269.5,285.8 272.5,286.1 275.5,286.4 278.5,286.7 281.5,287.1 284.5,287.3 287.5,287.5 290.5,287.8 293.5,288.0 296.5,288.2 299.5,288.4 302.5,288.5 305.5,288.5 308.5,288.5 311.5,288.5 314.5,288.5 317.5,288.6 320.5,288.6 323.5,288.6 326.5,288.6 329.5,288.6 332.5,288.7 335.5,288.7 338.5,288.7 341.5,288.7 344.5,288.7 347.5,288.8 350.5,288.8 353.5,288.8" stroke="#c18a6f" stroke-width="2.2" opacity="0.61"/><polyline points="81.9,274.2 84.9,274.4 87.9,274.6 90.9,274.8 93.9,275.0 96.9,275.2 99.9,275.4 102.9,275.6 105.9,275.8 108.9,276.0 111.9,276.1 114.9,276.3 117.9,276.5 120.9,276.7 123.9,276.9 126.9,277.1 129.9,277.3 132.9,277.5 135.9,277.7 138.9,277.9 141.9,278.1 144.9,278.3 147.9,278.5 150.9,278.7 153.9,278.9 156.9,279.1" stroke="#cc9c83" stroke-width="2.2" opacity="0.94"/><polyline points="185.0,264.2 188.0,264.5 191.0,264.8 194.0,265.0 197.0,265.3 200.0,265.6 203.0,265.9 206.0,266.2 209.0,266.4 212.0,266.7 215.0,267.0 218.0,267.3 221.0,267.6 224.0,268.0 227.0,268.3 230.0,268.7 233.0,269.0 236.0,269.3 239.0,269.7 242.0,270.0 245.0,270.4 248.0,270.7 251.0,271.1 254.0,271.4 257.0,271.7 260.0,272.1 263.0,272.4 266.0,272.8 269.0,273.0 272.0,273.3 275.0,273.6 278.0,273.9 281.0,274.2 284.0,274.5 287.0,274.6 290.0,274.7 293.0,274.8 296.0,274.9 299.0,275.0 302.0,275.0 305.0,275.1" stroke="#ca987e" stroke-width="2.2" opacity="0.59"/><polyline points="236.7,281.7 239.7,282.2 242.7,282.7 245.7,283.2 248.7,283.6 251.7,284.1 254.7,284.6 257.7,285.1 260.7,285.5 263.7,286.0 266.7,286.4 269.7,286.7 272.7,287.0 275.7,287.4 278.7,287.7 281.7,288.0 284.7,288.3 287.7,288.5 290.7,288.7 293.7,288.9 296.7,289.2 299.7,289.4 302.7,289.4 305.7,289.4 308.7,289.5 311.7,289.5 314.7,289.5 317.7,289.5 320.7,289.5 323.7,289.5 326.7,289.6 329.7,289.6 332.7,289.6 335.7,289.6 338.7,289.6 341.7,289.7 344.7,289.7 347.7,289.7 350.7,289.7 353.7,289.7 356.7,289.8 359.7,289.8" stroke="#b37859" stroke-width="1.3" opacity="0.73"/><polyline points="283.1,286.3 286.1,286.6 289.1,286.8 292.1,287.0 295.1,287.2 298.1,287.4 301.1,287.5 304.1,287.6 307.1,287.6 310.1,287.6 313.1,287.6 316.1,287.6 319.1,287.7 322.1,287.7 325.1,287.7 328.1,287.7 331.1,287.7 334.1,287.8 337.1,287.8 340.1,287.8 343.1,287.8 346.1,287.8 349.1,287.9 352.1,287.9 355.1,287.9 358.1,287.9 361.1,287.9 364.1,288.0 367.1,288.0 370.1,288.0 373.1,288.0 376.1,288.1 379.1,288.1 382.1,288.1 385.1,288.1" stroke="#b57b5e" stroke-width="1.3" opacity="0.69"/><polyline points="72.3,258.9 75.3,259.1 78.3,259.4 81.3,259.6 84.3,259.8 87.3,260.1 90.3,260.3 93.3,260.6 96.3,260.8 99.3,261.1 102.3,261.3 105.3,261.6 108.3,261.8 111.3,262.1 114.3,262.3 117.3,262.6 120.3,262.8 123.3,263.1 126.3,263.3 129.3,263.5 132.3,263.8 135.3,264.0 138.3,264.3 141.3,264.5 144.3,264.8 147.3,265.0 150.3,265.3 153.3,265.5 156.3,265.8 159.3,266.0 162.3,266.3 165.3,266.5 168.3,266.8 171.3,267.1" stroke="#ca987e" stroke-width="1.3" opacity="0.78"/><polyline points="64.3,261.4 67.3,261.6 70.3,261.9 73.3,262.1 76.3,262.3 79.3,262.6 82.3,262.8 85.3,263.0 88.3,263.3 91.3,263.5 94.3,263.7 97.3,264.0 100.3,264.2 103.3,264.5" stroke="#c79379" stroke-width="2.2" opacity="0.81"/><polyline points="326.8,288.4 329.8,288.4 332.8,288.5 335.8,288.5 338.8,288.5 341.8,288.5 344.8,288.5 347.8,288.5 350.8,288.6 353.8,288.6 356.8,288.6 359.8,288.6 362.8,288.6 365.8,288.7 368.8,288.7 371.8,288.7 374.8,288.7 377.8,288.7 380.8,288.8" stroke="#cc9c83" stroke-width="1.0" opacity="0.63"/><polyline points="167.7,283.4 170.7,283.7 173.7,284.0 176.7,284.3 179.7,284.5 182.7,284.8 185.7,285.1 188.7,285.4 191.7,285.7 194.7,286.0 197.7,286.2 200.7,286.5 203.7,286.8 206.7,287.1 209.7,287.4 212.7,287.7 215.7,287.9 218.7,288.3 221.7,288.9 224.7,289.5 227.7,290.0 230.7,290.6 233.7,291.2 236.7,291.8 239.7,292.4 242.7,293.0 245.7,293.6 248.7,294.1 251.7,294.7 254.7,295.3 257.7,295.9 260.7,296.5 263.7,297.1 266.7,297.5 269.7,297.8 272.7,298.2 275.7,298.5 278.7,298.9 281.7,299.2 284.7,299.5 287.7,299.9 290.7,300.2 293.7,300.5 296.7,300.8 299.7,301.1 302.7,301.2 305.7,301.2 308.7,301.2" stroke="#b57b5e" stroke-width="1.8" opacity="0.58"/><polyline points="177.9,266.1 180.9,266.4 183.9,266.7 186.9,267.0 189.9,267.3 192.9,267.5 195.9,267.8 198.9,268.1 201.9,268.4 204.9,268.7 207.9,268.9 210.9,269.2 213.9,269.5 216.9,269.8 219.9,270.1 222.9,270.5 225.9,270.9 228.9,271.3 231.9,271.6 234.9,272.0 237.9,272.4 240.9,272.7 243.9,273.1 246.9,273.5 249.9,273.9 252.9,274.2 255.9,274.6" stroke="#ca987e" stroke-width="1.8" opacity="0.62"/><polyline points="155.9,260.5 158.9,260.7 161.9,261.0 164.9,261.2 167.9,261.5 170.9,261.8 173.9,262.1 176.9,262.4 179.9,262.7 182.9,262.9 185.9,263.2 188.9,263.5 191.9,263.8 194.9,264.1 197.9,264.3" stroke="#c79379" stroke-width="1.0" opacity="0.39"/><polyline points="98.2,257.8 101.2,258.1 104.2,258.3 107.2,258.6 110.2,258.8 113.2,259.1 116.2,259.4 119.2,259.6 122.2,259.9 125.2,260.1 128.2,260.4 131.2,260.6 134.2,260.9 137.2,261.2 140.2,261.4 143.2,261.7 146.2,261.9 149.2,262.2 152.2,262.4 155.2,262.7 158.2,263.0 161.2,263.2 164.2,263.5 167.2,263.7 170.2,264.0 173.2,264.3 176.2,264.6 179.2,264.9 182.2,265.1 185.2,265.4 188.2,265.7 191.2,266.0 194.2,266.3 197.2,266.6 200.2,266.8 203.2,267.1 206.2,267.4 209.2,267.7 212.2,268.0" stroke="#c69176" stroke-width="1.3" opacity="0.80"/><polyline points="61.5,267.4 64.5,267.6 67.5,267.8 70.5,268.1 73.5,268.3 76.5,268.5 79.5,268.7 82.5,268.9 85.5,269.1 88.5,269.4 91.5,269.6 94.5,269.8 97.5,270.0 100.5,270.2 103.5,270.4 106.5,270.7 109.5,270.9 112.5,271.1 115.5,271.3 118.5,271.5 121.5,271.7 124.5,272.0 127.5,272.2 130.5,272.4 133.5,272.6 136.5,272.8 139.5,273.0 142.5,273.3 145.5,273.5 148.5,273.7 151.5,273.9 154.5,274.1 157.5,274.3 160.5,274.5 163.5,274.8 166.5,275.0 169.5,275.3 172.5,275.6 175.5,275.9 178.5,276.1 181.5,276.4" stroke="#b37859" stroke-width="1.3" opacity="0.74"/><polyline points="293.6,293.0 296.6,293.2 299.6,293.5 302.6,293.5 305.6,293.5 308.6,293.5 311.6,293.6 314.6,293.6 317.6,293.6 320.6,293.6 323.6,293.6 326.6,293.6 329.6,293.6 332.6,293.6 335.6,293.7" stroke="#cc9c83" stroke-width="1.3" opacity="0.79"/><polyline points="190.2,283.7 193.2,284.0 196.2,284.3 199.2,284.6 202.2,284.9 205.2,285.2 208.2,285.4 211.2,285.7 214.2,286.0 217.2,286.3 220.2,286.8 223.2,287.3 226.2,287.9 229.2,288.5 232.2,289.0 235.2,289.6 238.2,290.2 241.2,290.7 244.2,291.3 247.2,291.9 250.2,292.4 253.2,293.0" stroke="#cc9c83" stroke-width="1.3" opacity="0.38"/><polyline points="218.4,287.8 221.4,288.4 224.4,289.0 227.4,289.5 230.4,290.1 233.4,290.7 236.4,291.3 239.4,291.9 242.4,292.4 245.4,293.0 248.4,293.6 251.4,294.2 254.4,294.8 257.4,295.3 260.4,295.9 263.4,296.5 266.4,297.0 269.4,297.3 272.4,297.6 275.4,298.0 278.4,298.3 281.4,298.7 284.4,299.0 287.4,299.3 290.4,299.6 293.4,299.9 296.4,300.3" stroke="#c69176" stroke-width="1.3" opacity="0.36"/><polyline points="329.5,277.7 332.5,277.7 335.5,277.7 338.5,277.8 341.5,277.8 344.5,277.8 347.5,277.9 350.5,277.9 353.5,277.9 356.5,278.0 359.5,278.0 362.5,278.0 365.5,278.1 368.5,278.1 371.5,278.1 374.5,278.2 377.5,278.2 380.5,278.2 383.5,278.3 386.5,278.3 389.5,278.3 392.5,278.4 395.5,278.4 398.5,278.4 401.5,278.5 404.5,278.5 407.5,278.5 410.5,278.6 413.5,278.6 416.5,278.6" stroke="#cc9c83" stroke-width="1.3" opacity="0.25"/><polyline points="56.4,252.4 59.4,252.6 62.4,252.9 65.4,253.2 68.4,253.4 71.4,253.7 74.4,254.0 77.4,254.2 80.4,254.5 83.4,254.7 86.4,255.0 89.4,255.3 92.4,255.5 95.4,255.8 98.4,256.1 101.4,256.3 104.4,256.6 107.4,256.8 110.4,257.1 113.4,257.4 116.4,257.6 119.4,257.9 122.4,258.2 125.4,258.4 128.4,258.7 131.4,259.0 134.4,259.2 137.4,259.5" stroke="#b57b5e" stroke-width="1.3" opacity="0.83"/><polyline points="218.4,268.7 221.4,269.1 224.4,269.4 227.4,269.8 230.4,270.2 233.4,270.5 236.4,270.9 239.4,271.2 242.4,271.6 245.4,272.0 248.4,272.3 251.4,272.7 254.4,273.0 257.4,273.4 260.4,273.8 263.4,274.1 266.4,274.4 269.4,274.7 272.4,275.0 275.4,275.3 278.4,275.6 281.4,275.9 284.4,276.1 287.4,276.2 290.4,276.4 293.4,276.5 296.4,276.6 299.4,276.7 302.4,276.8 305.4,276.8 308.4,276.8 311.4,276.9 314.4,276.9 317.4,276.9 320.4,277.0 323.4,277.0 326.4,277.0 329.4,277.1 332.4,277.1 335.4,277.1 338.4,277.2 341.4,277.2 344.4,277.3" stroke="#c69176" stroke-width="1.8" opacity="0.33"/><polyline points="181.7,263.0 184.7,263.3 187.7,263.6 190.7,263.8 193.7,264.1 196.7,264.4 199.7,264.7 202.7,265.0 205.7,265.3 208.7,265.5 211.7,265.8 214.7,266.1 217.7,266.4 220.7,266.7 223.7,267.0 226.7,267.4 229.7,267.7 232.7,268.0 235.7,268.4 238.7,268.7 241.7,269.0 244.7,269.4 247.7,269.7 250.7,270.0 253.7,270.4 256.7,270.7 259.7,271.0 262.7,271.4 265.7,271.7 268.7,272.0 271.7,272.3 274.7,272.6 277.7,272.8 280.7,273.1 283.7,273.4 286.7,273.5 289.7,273.6 292.7,273.7 295.7,273.8 298.7,273.8 301.7,273.9 304.7,273.9" stroke="#bd866a" stroke-width="1.0" opacity="0.48"/><polyline points="46.0,262.3 49.0,262.3 52.0,262.6 55.0,262.8 58.0,263.0 61.0,263.2 64.0,263.5 67.0,263.7 70.0,263.9 73.0,264.2 76.0,264.4 79.0,264.6 82.0,264.9 85.0,265.1 88.0,265.3 91.0,265.5 94.0,265.8 97.0,266.0 100.0,266.2 103.0,266.5 106.0,266.7 109.0,266.9 112.0,267.2 115.0,267.4 118.0,267.6 121.0,267.8 124.0,268.1 127.0,268.3 130.0,268.5 133.0,268.8 136.0,269.0 139.0,269.2 142.0,269.4 145.0,269.7 148.0,269.9 151.0,270.1 154.0,270.4 157.0,270.6 160.0,270.8" stroke="#ca987e" stroke-width="1.3" opacity="0.88"/><polyline points="64.5,254.8 67.5,255.0 70.5,255.3 73.5,255.6 76.5,255.8 79.5,256.1 82.5,256.3 85.5,256.6 88.5,256.8 91.5,257.1 94.5,257.4 97.5,257.6 100.5,257.9 103.5,258.1 106.5,258.4 109.5,258.6 112.5,258.9 115.5,259.2 118.5,259.4 121.5,259.7" stroke="#b37859" stroke-width="1.0" opacity="0.75"/><polyline points="70.3,266.9 73.3,267.1 76.3,267.3 79.3,267.5 82.3,267.7 85.3,268.0 88.3,268.2 91.3,268.4 94.3,268.6 97.3,268.8 100.3,269.1 103.3,269.3 106.3,269.5 109.3,269.7 112.3,269.9 115.3,270.2 118.3,270.4 121.3,270.6 124.3,270.8 127.3,271.0 130.3,271.3 133.3,271.5 136.3,271.7 139.3,271.9 142.3,272.1 145.3,272.4 148.3,272.6 151.3,272.8 154.3,273.0 157.3,273.2 160.3,273.5 163.3,273.7 166.3,273.9 169.3,274.2 172.3,274.5 175.3,274.8 178.3,275.1 181.3,275.3 184.3,275.6" stroke="#c18a6f" stroke-width="1.8" opacity="0.72"/><polyline points="157.9,268.2 160.9,268.5 163.9,268.7 166.9,269.0 169.9,269.2 172.9,269.5 175.9,269.8 178.9,270.1 181.9,270.4 184.9,270.6 187.9,270.9 190.9,271.2 193.9,271.5 196.9,271.8 199.9,272.1 202.9,272.3 205.9,272.6 208.9,272.9 211.9,273.2 214.9,273.5 217.9,273.7 220.9,274.2 223.9,274.6 226.9,275.0 229.9,275.4 232.9,275.8 235.9,276.3" stroke="#c69176" stroke-width="1.0" opacity="0.37"/><polyline points="46.0,266.9 49.0,266.9 52.0,267.2 55.0,267.4 58.0,267.6 61.0,267.8 64.0,268.0 67.0,268.2 70.0,268.4 73.0,268.7 76.0,268.9 79.0,269.1 82.0,269.3 85.0,269.5 88.0,269.7 91.0,270.0 94.0,270.2 97.0,270.4 100.0,270.6 103.0,270.8" stroke="#c69176" stroke-width="1.8" opacity="0.82"/><polyline points="88.5,263.1 91.5,263.4 94.5,263.6 97.5,263.8 100.5,264.1 103.5,264.3 106.5,264.5 109.5,264.8 112.5,265.0 115.5,265.3 118.5,265.5 121.5,265.7 124.5,266.0 127.5,266.2 130.5,266.4 133.5,266.7 136.5,266.9 139.5,267.2 142.5,267.4 145.5,267.6" stroke="#c79379" stroke-width="1.8" opacity="0.85"/><polyline points="270.5,296.8 273.5,297.1 276.5,297.4 279.5,297.8 282.5,298.1 285.5,298.4 288.5,298.7 291.5,299.0 294.5,299.4 297.5,299.7 300.5,299.9 303.5,299.9 306.5,299.9 309.5,299.9 312.5,299.9 315.5,299.9 318.5,300.0 321.5,300.0 324.5,300.0 327.5,300.0 330.5,300.0 333.5,300.0 336.5,300.0 339.5,300.0 342.5,300.0 345.5,300.0 348.5,300.0 351.5,300.0 354.5,300.0 357.5,300.0 360.5,300.0 363.5,300.0 366.5,300.0 369.5,300.0 372.5,300.0 375.5,300.0 378.5,300.0 381.5,300.1 384.5,300.1 387.5,300.1" stroke="#b57b5e" stroke-width="1.3" opacity="0.86"/><polyline points="324.8,287.1 327.8,287.1 330.8,287.1 333.8,287.1 336.8,287.2 339.8,287.2 342.8,287.2 345.8,287.2 348.8,287.3 351.8,287.3 354.8,287.3 357.8,287.3 360.8,287.3 363.8,287.4 366.8,287.4 369.8,287.4 372.8,287.4 375.8,287.4 378.8,287.5 381.8,287.5 384.8,287.5 387.8,287.5 390.8,287.6 393.8,287.6 396.8,287.6 399.8,287.6 402.8,287.6 405.8,287.7 408.8,287.7 411.8,287.7 414.8,287.7" stroke="#c18a6f" stroke-width="1.3" opacity="0.68"/><polyline points="151.7,279.2 154.7,279.4 157.7,279.6 160.7,279.8 163.7,280.0 166.7,280.2 169.7,280.5 172.7,280.8 175.7,281.1 178.7,281.4 181.7,281.6 184.7,281.9 187.7,282.2 190.7,282.5 193.7,282.8 196.7,283.0 199.7,283.3 202.7,283.6 205.7,283.9 208.7,284.2 211.7,284.5 214.7,284.7 217.7,285.0 220.7,285.5 223.7,286.1 226.7,286.6 229.7,287.2 232.7,287.7 235.7,288.3 238.7,288.8 241.7,289.4 244.7,289.9 247.7,290.5 250.7,291.0 253.7,291.6 256.7,292.1 259.7,292.7 262.7,293.2 265.7,293.7 268.7,294.1 271.7,294.4 274.7,294.7 277.7,295.1 280.7,295.4 283.7,295.7 286.7,296.0 289.7,296.3" stroke="#c69176" stroke-width="2.2" opacity="0.61"/><polyline points="151.7,277.9 154.7,278.1 157.7,278.3 160.7,278.5 163.7,278.7 166.7,278.9 169.7,279.2 172.7,279.5 175.7,279.8 178.7,280.0 181.7,280.3 184.7,280.6 187.7,280.9 190.7,281.2 193.7,281.5 196.7,281.7 199.7,282.0 202.7,282.3 205.7,282.6 208.7,282.9 211.7,283.1 214.7,283.4 217.7,283.7 220.7,284.2 223.7,284.8 226.7,285.3 229.7,285.8 232.7,286.4 235.7,286.9 238.7,287.4 241.7,288.0 244.7,288.5 247.7,289.0 250.7,289.6 253.7,290.1 256.7,290.6 259.7,291.2 262.7,291.7 265.7,292.2 268.7,292.5 271.7,292.8" stroke="#c69176" stroke-width="1.8" opacity="0.32"/><polyline points="46.0,261.9 49.0,261.9 52.0,262.2 55.0,262.4 58.0,262.6 61.0,262.9 64.0,263.1 67.0,263.3 70.0,263.5 73.0,263.8 76.0,264.0 79.0,264.2 82.0,264.5 85.0,264.7 88.0,264.9 91.0,265.2 94.0,265.4 97.0,265.6 100.0,265.9 103.0,266.1 106.0,266.3 109.0,266.5 112.0,266.8" stroke="#c79379" stroke-width="1.3" opacity="0.89"/><polyline points="318.4,279.4 321.4,279.4 324.4,279.4 327.4,279.4 330.4,279.5 333.4,279.5 336.4,279.5 339.4,279.6 342.4,279.6 345.4,279.6 348.4,279.7 351.4,279.7 354.4,279.7 357.4,279.8 360.4,279.8 363.4,279.8 366.4,279.9 369.4,279.9 372.4,279.9 375.4,280.0 378.4,280.0 381.4,280.0 384.4,280.1 387.4,280.1 390.4,280.1" stroke="#bd866a" stroke-width="2.2" opacity="0.25"/><polyline points="189.9,275.9 192.9,276.2 195.9,276.4 198.9,276.7 201.9,277.0 204.9,277.3 207.9,277.6 210.9,277.9 213.9,278.1 216.9,278.4 219.9,278.8 222.9,279.3 225.9,279.8 228.9,280.2 231.9,280.7 234.9,281.2 237.9,281.7 240.9,282.1 243.9,282.6 246.9,283.1 249.9,283.6 252.9,284.0 255.9,284.5 258.9,285.0 261.9,285.4 264.9,285.9 267.9,286.2 270.9,286.6" stroke="#bd866a" stroke-width="1.0" opacity="0.65"/><polyline points="324.0,295.6 327.0,295.6 330.0,295.6 333.0,295.6 336.0,295.6 339.0,295.7 342.0,295.7 345.0,295.7 348.0,295.7 351.0,295.7 354.0,295.7 357.0,295.7 360.0,295.7 363.0,295.7 366.0,295.8" stroke="#bd866a" stroke-width="1.8" opacity="0.78"/><polyline points="181.4,271.7 184.4,272.0 187.4,272.3 190.4,272.6 193.4,272.9 196.4,273.1 199.4,273.4 202.4,273.7 205.4,274.0 208.4,274.3 211.4,274.5 214.4,274.8 217.4,275.1 220.4,275.5 223.4,275.9 226.4,276.4 229.4,276.8 232.4,277.2 235.4,277.7 238.4,278.1 241.4,278.6 244.4,279.0 247.4,279.4 250.4,279.9 253.4,280.3 256.4,280.7 259.4,281.2 262.4,281.6 265.4,282.0 268.4,282.3 271.4,282.6 274.4,282.9 277.4,283.2 280.4,283.6 283.4,283.8 286.4,284.0 289.4,284.2 292.4,284.4 295.4,284.6 298.4,284.8 301.4,284.9 304.4,284.9" stroke="#c79379" stroke-width="1.0" opacity="0.53"/><polyline points="112.7,260.9 115.7,261.1 118.7,261.4 121.7,261.6 124.7,261.9 127.7,262.1 130.7,262.4 133.7,262.6 136.7,262.9 139.7,263.1 142.7,263.4 145.7,263.6 148.7,263.9 151.7,264.1 154.7,264.4 157.7,264.6 160.7,264.9 163.7,265.1 166.7,265.4 169.7,265.7 172.7,266.0 175.7,266.3 178.7,266.5 181.7,266.8 184.7,267.1 187.7,267.4 190.7,267.7" stroke="#b57b5e" stroke-width="1.0" opacity="0.86"/><polyline points="282.0,294.7 285.0,295.0 288.0,295.3 291.0,295.6 294.0,295.9 297.0,296.2 300.0,296.5 303.0,296.5 306.0,296.5 309.0,296.5 312.0,296.5 315.0,296.5 318.0,296.5 321.0,296.5 324.0,296.5 327.0,296.5 330.0,296.5 333.0,296.6 336.0,296.6 339.0,296.6 342.0,296.6 345.0,296.6 348.0,296.6 351.0,296.6 354.0,296.6 357.0,296.6 360.0,296.6" stroke="#c69176" stroke-width="2.4" opacity="1.00"/><polyline points="282.0,298.1 285.0,298.4 288.0,298.7 291.0,299.0 294.0,299.3 297.0,299.7 300.0,300.0 303.0,300.0 306.0,300.0 309.0,300.0 312.0,300.0 315.0,300.0 318.0,300.0 321.0,300.0 324.0,300.0 327.0,300.0 330.0,300.0 333.0,300.0 336.0,300.0 339.0,300.0 342.0,300.0 345.0,300.0 348.0,300.0 351.0,300.1 354.0,300.1 357.0,300.1 360.0,300.1" stroke="#c8947a" stroke-width="2.4" opacity="1.00"/><polyline points="282.0,300.4 285.0,300.8 288.0,301.1 291.0,301.4 294.0,301.8 297.0,302.1 300.0,302.4 303.0,302.4 306.0,302.4 309.0,302.4 312.0,302.4 315.0,302.4 318.0,302.5 321.0,302.5 324.0,302.5 327.0,302.5 330.0,302.5 333.0,302.5 336.0,302.5 339.0,302.5 342.0,302.5 345.0,302.5 348.0,302.5" stroke="#c38d72" stroke-width="1.6" opacity="1.00"/><polyline points="300.0,290.1 303.0,290.1 306.0,290.1 309.0,290.2 312.0,290.2 315.0,290.2 318.0,290.2 321.0,290.2 324.0,290.2 327.0,290.3 330.0,290.3 333.0,290.3 336.0,290.3 339.0,290.3 342.0,290.4 345.0,290.4 348.0,290.4 351.0,290.4 354.0,290.4 357.0,290.4 360.0,290.5 363.0,290.5 366.0,290.5 369.0,290.5 372.0,290.5 375.0,290.5 378.0,290.6 381.0,290.6 384.0,290.6 387.0,290.6 390.0,290.6 393.0,290.6 396.0,290.7 399.0,290.7 402.0,290.7 405.0,290.7 408.0,290.7 411.0,290.8 414.0,290.8" stroke="#bf886c" stroke-width="1.6" opacity="1.00"/><polyline points="330.0,293.8 333.0,293.8 336.0,293.8 339.0,293.8 342.0,293.8 345.0,293.8 348.0,293.8 351.0,293.9 354.0,293.9 357.0,293.9 360.0,293.9 363.0,293.9 366.0,293.9 369.0,293.9 372.0,293.9 375.0,294.0 378.0,294.0 381.0,294.0 384.0,294.0 387.0,294.0 390.0,294.0 393.0,294.0 396.0,294.0 399.0,294.1 402.0,294.1 405.0,294.1 408.0,294.1 411.0,294.1 414.0,294.1" stroke="#c38d72" stroke-width="2.0" opacity="1.00"/><polyline points="360.0,298.4 363.0,298.4 366.0,298.4 369.0,298.4 372.0,298.4 375.0,298.4 378.0,298.4 381.0,298.4 384.0,298.4 387.0,298.4 390.0,298.4 393.0,298.4 396.0,298.4 399.0,298.4 402.0,298.4 405.0,298.5 408.0,298.5 411.0,298.5 414.0,298.5" stroke="#c0896d" stroke-width="2.2" opacity="1.00"/><polyline points="290.0,285.2 293.0,285.4 296.0,285.6 299.0,285.8 302.0,285.9 305.0,285.9 308.0,285.9 311.0,286.0 314.0,286.0 317.0,286.0 320.0,286.0 323.0,286.1 326.0,286.1 329.0,286.1 332.0,286.1 335.0,286.1 338.0,286.2 341.0,286.2 344.0,286.2 347.0,286.2 350.0,286.3 353.0,286.3 356.0,286.3 359.0,286.3" stroke="#bc8468" stroke-width="1.2" opacity="1.00"/><polyline points="46.0,318.9 47.5,318.9 49.0,319.0 50.5,319.2 52.0,319.3 53.5,319.5 55.0,319.6 56.5,319.8 58.0,319.9 59.5,320.1 61.0,320.2 62.5,320.4 64.0,320.5 65.5,320.7 67.0,320.8 68.5,321.0 70.0,321.1 71.5,321.3 73.0,321.4 74.5,321.6 76.0,321.7 77.5,321.9 79.0,322.0 80.5,322.2 82.0,322.4 83.5,322.5 85.0,322.7 86.5,322.8 88.0,323.0 89.5,323.0 91.0,323.0 92.5,323.1 94.0,323.1 95.5,323.2 97.0,323.2 98.5,323.3 100.0,323.3 101.5,323.3 103.0,323.4 104.5,323.4 106.0,323.5 107.5,323.5 109.0,323.5 110.5,323.6 112.0,323.6 113.5,323.7 115.0,323.7 116.5,323.7 118.0,323.8 119.5,323.8 121.0,323.9 122.5,323.9 124.0,324.0 125.5,324.0 127.0,324.0 128.5,323.6 130.0,322.3 131.5,321.0 133.0,319.7 134.5,318.4 136.0,317.0 137.5,315.7 139.0,314.3 140.5,313.0 142.0,311.6 143.5,310.3 145.0,308.9 146.5,307.6 148.0,306.2 149.5,306.2 151.0,306.2 152.5,306.2 154.0,306.2 155.5,306.2 157.0,306.2 158.5,306.2 160.0,306.2 161.5,306.2 163.0,306.2 164.5,306.2 166.0,306.2 167.5,306.2 169.0,306.2 170.5,306.2 172.0,306.2 173.5,306.3 175.0,306.4 176.5,306.5 178.0,306.6 179.5,306.6 181.0,308.0 182.5,310.0 184.0,312.1 185.5,314.2 187.0,316.2 188.5,318.3 190.0,320.4 191.5,322.4 193.0,323.7 194.5,324.5 196.0,325.4 197.5,326.2 199.0,327.1 200.5,327.9 202.0,328.8 203.5,329.6 205.0,330.4 206.5,331.2 208.0,331.9 209.5,332.6 211.0,333.3 212.5,334.0 214.0,334.7 215.5,335.4 217.0,336.1 218.5,336.8 220.0,337.5 221.5,338.2 223.0,338.9 224.5,339.6 226.0,340.3 227.5,341.0 229.0,341.7 230.5,342.4 232.0,343.1 233.5,343.8 235.0,344.5 236.5,345.2 238.0,345.9 239.5,346.6 241.0,346.3 242.5,345.7 244.0,345.0 245.5,344.3 247.0,343.5 248.5,342.8 250.0,342.2 251.5,341.6 253.0,340.9 254.5,340.3 256.0,339.7 257.5,339.0 259.0,338.4 260.5,337.9 262.0,337.5 263.5,337.1 265.0,336.7 266.5,336.3 268.0,335.9 269.5,335.5 271.0,335.1 272.5,334.7 274.0,334.3 275.5,334.2 277.0,334.8 278.5,335.4 280.0,336.0 281.5,336.6 283.0,337.2 284.5,337.8 286.0,338.4 287.5,339.0 289.0,339.6 290.5,340.2 292.0,340.8 293.5,341.4 295.0,342.0 296.5,342.7 298.0,343.4 299.5,344.0 301.0,344.7 302.5,345.4 304.0,346.1 305.5,346.7 307.0,347.4 308.5,348.1 310.0,348.8 311.5,349.5 313.0,350.1 314.5,350.8 316.0,351.5 317.5,352.3 319.0,353.0 320.5,353.8 322.0,354.5 323.5,355.2 325.0,356.0 326.5,356.7 328.0,357.5 329.5,358.2 331.0,358.9 332.5,359.7 334.0,360.4 335.5,361.0 337.0,361.2 338.5,361.3 340.0,361.5 341.5,361.7 343.0,361.9 344.5,362.0 346.0,362.2 347.5,362.3 349.0,362.5 350.5,362.6 352.0,362.7 353.5,362.9 355.0,363.0 356.5,363.1 358.0,363.2 359.5,363.2 361.0,363.3 362.5,363.4 364.0,363.4 365.5,363.5 367.0,363.6 368.5,363.7 370.0,363.7 371.5,363.8 373.0,363.9 374.5,363.9 376.0,364.0 377.5,364.1 379.0,364.2 380.5,364.2 382.0,364.3 383.5,364.4 385.0,364.4 386.5,364.5 388.0,364.6 389.5,364.7 391.0,364.7 392.5,364.8 394.0,364.9 395.5,364.9 397.0,365.0 398.5,365.1 400.0,365.3 401.5,365.4 403.0,365.4 404.5,365.5 406.0,365.6 407.5,365.6 409.0,365.7 410.5,365.8 412.0,365.9 413.5,365.9 415.0,366.0 416.5,366.0" stroke="#9d5d40" stroke-width="1.2" opacity="0.38"/><polyline points="46.0,320.7 47.5,320.7 49.0,320.8 50.5,321.0 52.0,321.1 53.5,321.3 55.0,321.5 56.5,321.6 58.0,321.8 59.5,321.9 61.0,322.1 62.5,322.2 64.0,322.4 65.5,322.5 67.0,322.7 68.5,322.9 70.0,323.0 71.5,323.2 73.0,323.3 74.5,323.5 76.0,323.6 77.5,323.8 79.0,323.9 80.5,324.1 82.0,324.3 83.5,324.4 85.0,324.6 86.5,324.7 88.0,324.9 89.5,324.9 91.0,325.0 92.5,325.0 94.0,325.1 95.5,325.1 97.0,325.2 98.5,325.2 100.0,325.3 101.5,325.3 103.0,325.4 104.5,325.4 106.0,325.5 107.5,325.5 109.0,325.6 110.5,325.6 112.0,325.7 113.5,325.7 115.0,325.8 116.5,325.8 118.0,325.9 119.5,325.9 121.0,326.0 122.5,326.0 124.0,326.1 125.5,326.1 127.0,326.1 128.5,325.7 130.0,324.5 131.5,323.2 133.0,322.0 134.5,320.8 136.0,319.5 137.5,318.2 139.0,316.8 140.5,315.4 142.0,314.1 143.5,312.7 145.0,311.4 146.5,310.0 148.0,308.6 149.5,308.6 151.0,308.6 152.5,308.6 154.0,308.6 155.5,308.6 157.0,308.6 158.5,308.6 160.0,308.6 161.5,308.6 163.0,308.6 164.5,308.6 166.0,308.6 167.5,308.6 169.0,308.5 170.5,308.5 172.0,308.5 173.5,308.9 175.0,309.2 176.5,309.5 178.0,309.7 179.5,309.7 181.0,311.1 182.5,313.0 184.0,315.0 185.5,317.0 187.0,318.9 188.5,320.9 190.0,322.8 191.5,324.7 193.0,325.9 194.5,326.7 196.0,327.6 197.5,328.4 199.0,329.2 200.5,330.0 202.0,330.8 203.5,331.6 205.0,332.5 206.5,333.2 208.0,333.9 209.5,334.6 211.0,335.3 212.5,335.9 214.0,336.6 215.5,337.3 217.0,338.0 218.5,338.7 220.0,339.4 221.5,340.0 223.0,340.7 224.5,341.4 226.0,342.1 227.5,342.8 229.0,343.4 230.5,344.1 232.0,344.8 233.5,345.5 235.0,346.2 236.5,346.8 238.0,347.5 239.5,348.2 241.0,348.0 242.5,347.5 244.0,346.9 245.5,346.3 247.0,345.6 248.5,344.9 250.0,344.3 251.5,343.6 253.0,343.0 254.5,342.3 256.0,341.7 257.5,341.1 259.0,340.4 260.5,339.9 262.0,339.5 263.5,339.1 265.0,338.7 266.5,338.4 268.0,338.0 269.5,337.6 271.0,337.2 272.5,336.8 274.0,336.4 275.5,336.3 277.0,336.8 278.5,337.3 280.0,337.9 281.5,338.5 283.0,339.1 284.5,339.7 286.0,340.3 287.5,340.9 289.0,341.6 290.5,342.2 292.0,342.8 293.5,343.4 295.0,344.0 296.5,344.7 298.0,345.4 299.5,346.1 301.0,346.7 302.5,347.4 304.0,348.1 305.5,348.8 307.0,349.5 308.5,350.2 310.0,350.8 311.5,351.5 313.0,352.2 314.5,352.9 316.0,353.6 317.5,354.3 319.0,355.0 320.5,355.8 322.0,356.5 323.5,357.2 325.0,357.9 326.5,358.7 328.0,359.4 329.5,360.1 331.0,360.8 332.5,361.6 334.0,362.3 335.5,362.9 337.0,363.1 338.5,363.3 340.0,363.6 341.5,363.9 343.0,364.0 344.5,364.2 346.0,364.3 347.5,364.4 349.0,364.6 350.5,364.7 352.0,364.8 353.5,364.9 355.0,365.1 356.5,365.1 358.0,365.2 359.5,365.2 361.0,365.3 362.5,365.4 364.0,365.4 365.5,365.5 367.0,365.5 368.5,365.6 370.0,365.7 371.5,365.7 373.0,365.8 374.5,365.9 376.0,365.9 377.5,366.0 379.0,366.0 380.5,366.1 382.0,366.2 383.5,366.2 385.0,366.3 386.5,366.3 388.0,366.4 389.5,366.5 391.0,366.5 392.5,366.6 394.0,366.6 395.5,366.7 397.0,366.8 398.5,367.0 400.0,367.2 401.5,367.3 403.0,367.4 404.5,367.5 406.0,367.5 407.5,367.6 409.0,367.7 410.5,367.7 412.0,367.8 413.5,367.9 415.0,367.9 416.5,367.9" stroke="#b87c5e" stroke-width="1.2" opacity="0.42"/><polyline points="46.0,322.5 47.5,322.5 49.0,322.6 50.5,322.8 52.0,323.0 53.5,323.1 55.0,323.3 56.5,323.4 58.0,323.6 59.5,323.8 61.0,323.9 62.5,324.1 64.0,324.2 65.5,324.4 67.0,324.6 68.5,324.7 70.0,324.9 71.5,325.0 73.0,325.2 74.5,325.4 76.0,325.5 77.5,325.7 79.0,325.8 80.5,326.0 82.0,326.2 83.5,326.3 85.0,326.5 86.5,326.6 88.0,326.8 89.5,326.9 91.0,326.9 92.5,327.0 94.0,327.0 95.5,327.1 97.0,327.1 98.5,327.2 100.0,327.3 101.5,327.3 103.0,327.4 104.5,327.4 106.0,327.5 107.5,327.5 109.0,327.6 110.5,327.7 112.0,327.7 113.5,327.8 115.0,327.8 116.5,327.9 118.0,327.9 119.5,328.0 121.0,328.1 122.5,328.1 124.0,328.2 125.5,328.2 127.0,328.2 128.5,327.8 130.0,326.6 131.5,325.5 133.0,324.3 134.5,323.2 136.0,322.0 137.5,320.6 139.0,319.3 140.5,317.9 142.0,316.5 143.5,315.2 145.0,313.8 146.5,312.4 148.0,311.1 149.5,311.0 151.0,311.0 152.5,311.0 154.0,311.0 155.5,311.0 157.0,311.0 158.5,311.0 160.0,311.0 161.5,311.0 163.0,310.9 164.5,310.9 166.0,310.9 167.5,310.9 169.0,310.9 170.5,310.9 172.0,310.9 173.5,311.4 175.0,312.0 176.5,312.5 178.0,312.8 179.5,312.9 181.0,314.2 182.5,316.0 184.0,317.9 185.5,319.7 187.0,321.6 188.5,323.4 190.0,325.2 191.5,327.0 193.0,328.2 194.5,329.0 196.0,329.7 197.5,330.5 199.0,331.3 200.5,332.1 202.0,332.9 203.5,333.7 205.0,334.5 206.5,335.2 208.0,335.9 209.5,336.5 211.0,337.2 212.5,337.9 214.0,338.5 215.5,339.2 217.0,339.9 218.5,340.5 220.0,341.2 221.5,341.9 223.0,342.5 224.5,343.2 226.0,343.8 227.5,344.5 229.0,345.2 230.5,345.8 232.0,346.5 233.5,347.2 235.0,347.8 236.5,348.5 238.0,349.2 239.5,349.8 241.0,349.7 242.5,349.3 244.0,348.8 245.5,348.3 247.0,347.7 248.5,347.0 250.0,346.3 251.5,345.7 253.0,345.0 254.5,344.4 256.0,343.7 257.5,343.1 259.0,342.4 260.5,341.9 262.0,341.5 263.5,341.2 265.0,340.8 266.5,340.4 268.0,340.0 269.5,339.6 271.0,339.3 272.5,338.9 274.0,338.5 275.5,338.4 277.0,338.8 278.5,339.2 280.0,339.8 281.5,340.4 283.0,341.0 284.5,341.7 286.0,342.3 287.5,342.9 289.0,343.5 290.5,344.1 292.0,344.8 293.5,345.4 295.0,346.0 296.5,346.7 298.0,347.4 299.5,348.1 301.0,348.8 302.5,349.4 304.0,350.1 305.5,350.8 307.0,351.5 308.5,352.2 310.0,352.9 311.5,353.6 313.0,354.3 314.5,355.0 316.0,355.7 317.5,356.4 319.0,357.1 320.5,357.8 322.0,358.5 323.5,359.2 325.0,359.9 326.5,360.6 328.0,361.3 329.5,362.0 331.0,362.7 332.5,363.4 334.0,364.2 335.5,364.7 337.0,365.0 338.5,365.2 340.0,365.6 341.5,366.0 343.0,366.2 344.5,366.3 346.0,366.4 347.5,366.5 349.0,366.7 350.5,366.8 352.0,366.9 353.5,367.0 355.0,367.1 356.5,367.2 358.0,367.2 359.5,367.3 361.0,367.3 362.5,367.4 364.0,367.4 365.5,367.5 367.0,367.5 368.5,367.6 370.0,367.6 371.5,367.7 373.0,367.7 374.5,367.8 376.0,367.8 377.5,367.9 379.0,367.9 380.5,368.0 382.0,368.0 383.5,368.1 385.0,368.1 386.5,368.2 388.0,368.2 389.5,368.3 391.0,368.3 392.5,368.4 394.0,368.4 395.5,368.5 397.0,368.6 398.5,368.9 400.0,369.1 401.5,369.3 403.0,369.4 404.5,369.4 406.0,369.5 407.5,369.5 409.0,369.6 410.5,369.7 412.0,369.7 413.5,369.8 415.0,369.8 416.5,369.8" stroke="#a26243" stroke-width="1.2" opacity="0.47"/><polyline points="46.0,324.4 47.5,324.4 49.0,324.5 50.5,324.6 52.0,324.8 53.5,325.0 55.0,325.1 56.5,325.3 58.0,325.4 59.5,325.6 61.0,325.8 62.5,325.9 64.0,326.1 65.5,326.3 67.0,326.4 68.5,326.6 70.0,326.8 71.5,326.9 73.0,327.1 74.5,327.3 76.0,327.4 77.5,327.6 79.0,327.7 80.5,327.9 82.0,328.1 83.5,328.2 85.0,328.4 86.5,328.6 88.0,328.7 89.5,328.8 91.0,328.9 92.5,328.9 94.0,329.0 95.5,329.1 97.0,329.1 98.5,329.2 100.0,329.2 101.5,329.3 103.0,329.4 104.5,329.4 106.0,329.5 107.5,329.6 109.0,329.6 110.5,329.7 112.0,329.8 113.5,329.8 115.0,329.9 116.5,330.0 118.0,330.0 119.5,330.1 121.0,330.2 122.5,330.2 124.0,330.3 125.5,330.3 127.0,330.3 128.5,329.9 130.0,328.8 131.5,327.7 133.0,326.6 134.5,325.6 136.0,324.5 137.5,323.1 139.0,321.7 140.5,320.3 142.0,319.0 143.5,317.6 145.0,316.2 146.5,314.9 148.0,313.5 149.5,313.5 151.0,313.5 152.5,313.4 154.0,313.4 155.5,313.4 157.0,313.4 158.5,313.4 160.0,313.4 161.5,313.3 163.0,313.3 164.5,313.3 166.0,313.3 167.5,313.3 169.0,313.3 170.5,313.3 172.0,313.2 173.5,314.0 175.0,314.8 176.5,315.5 178.0,315.9 179.5,316.1 181.0,317.3 182.5,319.0 184.0,320.8 185.5,322.5 187.0,324.2 188.5,326.0 190.0,327.6 191.5,329.3 193.0,330.4 194.5,331.2 196.0,331.9 197.5,332.7 199.0,333.4 200.5,334.2 202.0,335.0 203.5,335.7 205.0,336.5 206.5,337.2 208.0,337.9 209.5,338.5 211.0,339.2 212.5,339.8 214.0,340.4 215.5,341.1 217.0,341.7 218.5,342.4 220.0,343.0 221.5,343.7 223.0,344.3 224.5,345.0 226.0,345.6 227.5,346.3 229.0,346.9 230.5,347.6 232.0,348.2 233.5,348.9 235.0,349.5 236.5,350.1 238.0,350.8 239.5,351.4 241.0,351.4 242.5,351.1 244.0,350.7 245.5,350.4 247.0,349.8 248.5,349.0 250.0,348.4 251.5,347.7 253.0,347.1 254.5,346.4 256.0,345.8 257.5,345.1 259.0,344.4 260.5,344.0 262.0,343.6 263.5,343.2 265.0,342.8 266.5,342.5 268.0,342.1 269.5,341.7 271.0,341.3 272.5,341.0 274.0,340.6 275.5,340.5 277.0,340.8 278.5,341.2 280.0,341.7 281.5,342.4 283.0,343.0 284.5,343.6 286.0,344.2 287.5,344.9 289.0,345.5 290.5,346.1 292.0,346.7 293.5,347.4 295.0,348.0 296.5,348.7 298.0,349.4 299.5,350.1 301.0,350.8 302.5,351.5 304.0,352.2 305.5,352.9 307.0,353.6 308.5,354.3 310.0,355.0 311.5,355.6 313.0,356.3 314.5,357.0 316.0,357.7 317.5,358.4 319.0,359.1 320.5,359.8 322.0,360.5 323.5,361.2 325.0,361.8 326.5,362.5 328.0,363.2 329.5,363.9 331.0,364.6 332.5,365.3 334.0,366.0 335.5,366.6 337.0,366.9 338.5,367.2 340.0,367.6 341.5,368.1 343.0,368.4 344.5,368.5 346.0,368.6 347.5,368.7 349.0,368.8 350.5,368.9 352.0,369.0 353.5,369.0 355.0,369.1 356.5,369.2 358.0,369.2 359.5,369.3 361.0,369.3 362.5,369.3 364.0,369.4 365.5,369.4 367.0,369.5 368.5,369.5 370.0,369.5 371.5,369.6 373.0,369.6 374.5,369.7 376.0,369.7 377.5,369.8 379.0,369.8 380.5,369.8 382.0,369.9 383.5,369.9 385.0,370.0 386.5,370.0 388.0,370.0 389.5,370.1 391.0,370.1 392.5,370.2 394.0,370.2 395.5,370.2 397.0,370.5 398.5,370.8 400.0,371.0 401.5,371.3 403.0,371.3 404.5,371.4 406.0,371.4 407.5,371.5 409.0,371.5 410.5,371.6 412.0,371.7 413.5,371.7 415.0,371.7 416.5,371.7" stroke="#bb8062" stroke-width="1.2" opacity="0.52"/><polyline points="46.0,326.2 47.5,326.2 49.0,326.3 50.5,326.4 52.0,326.6 53.5,326.8 55.0,327.0 56.5,327.1 58.0,327.3 59.5,327.5 61.0,327.6 62.5,327.8 64.0,328.0 65.5,328.1 67.0,328.3 68.5,328.5 70.0,328.6 71.5,328.8 73.0,329.0 74.5,329.1 76.0,329.3 77.5,329.5 79.0,329.6 80.5,329.8 82.0,330.0 83.5,330.1 85.0,330.3 86.5,330.5 88.0,330.7 89.5,330.7 91.0,330.8 92.5,330.9 94.0,330.9 95.5,331.0 97.0,331.1 98.5,331.2 100.0,331.2 101.5,331.3 103.0,331.4 104.5,331.4 106.0,331.5 107.5,331.6 109.0,331.7 110.5,331.7 112.0,331.8 113.5,331.9 115.0,332.0 116.5,332.0 118.0,332.1 119.5,332.2 121.0,332.2 122.5,332.3 124.0,332.4 125.5,332.5 127.0,332.4 128.5,332.0 130.0,331.0 131.5,330.0 133.0,329.0 134.5,328.0 136.0,326.9 137.5,325.6 139.0,324.2 140.5,322.8 142.0,321.4 143.5,320.0 145.0,318.7 146.5,317.3 148.0,315.9 149.5,315.9 151.0,315.9 152.5,315.8 154.0,315.8 155.5,315.8 157.0,315.8 158.5,315.8 160.0,315.7 161.5,315.7 163.0,315.7 164.5,315.7 166.0,315.7 167.5,315.7 169.0,315.6 170.5,315.6 172.0,315.6 173.5,316.6 175.0,317.5 176.5,318.5 178.0,319.0 179.5,319.2 181.0,320.4 182.5,322.0 184.0,323.7 185.5,325.3 187.0,326.9 188.5,328.5 190.0,330.1 191.5,331.6 193.0,332.6 194.5,333.4 196.0,334.1 197.5,334.8 199.0,335.6 200.5,336.3 202.0,337.0 203.5,337.8 205.0,338.5 206.5,339.2 208.0,339.8 209.5,340.5 211.0,341.1 212.5,341.7 214.0,342.4 215.5,343.0 217.0,343.6 218.5,344.2 220.0,344.9 221.5,345.5 223.0,346.1 224.5,346.8 226.0,347.4 227.5,348.0 229.0,348.7 230.5,349.3 232.0,349.9 233.5,350.5 235.0,351.2 236.5,351.8 238.0,352.4 239.5,353.1 241.0,353.1 242.5,352.9 244.0,352.7 245.5,352.4 247.0,351.8 248.5,351.1 250.0,350.5 251.5,349.8 253.0,349.1 254.5,348.5 256.0,347.8 257.5,347.1 259.0,346.4 260.5,346.0 262.0,345.6 263.5,345.3 265.0,344.9 266.5,344.5 268.0,344.2 269.5,343.8 271.0,343.4 272.5,343.1 274.0,342.7 275.5,342.5 277.0,342.8 278.5,343.1 280.0,343.6 281.5,344.3 283.0,344.9 284.5,345.6 286.0,346.2 287.5,346.8 289.0,347.5 290.5,348.1 292.0,348.7 293.5,349.4 295.0,350.0 296.5,350.7 298.0,351.4 299.5,352.1 301.0,352.8 302.5,353.5 304.0,354.2 305.5,354.9 307.0,355.6 308.5,356.3 310.0,357.0 311.5,357.7 313.0,358.4 314.5,359.1 316.0,359.8 317.5,360.5 319.0,361.1 320.5,361.8 322.0,362.5 323.5,363.1 325.0,363.8 326.5,364.5 328.0,365.1 329.5,365.8 331.0,366.5 332.5,367.2 334.0,367.9 335.5,368.5 337.0,368.8 338.5,369.2 340.0,369.7 341.5,370.3 343.0,370.5 344.5,370.6 346.0,370.7 347.5,370.8 349.0,370.9 350.5,370.9 352.0,371.0 353.5,371.1 355.0,371.2 356.5,371.2 358.0,371.2 359.5,371.3 361.0,371.3 362.5,371.3 364.0,371.4 365.5,371.4 367.0,371.4 368.5,371.5 370.0,371.5 371.5,371.5 373.0,371.5 374.5,371.6 376.0,371.6 377.5,371.6 379.0,371.7 380.5,371.7 382.0,371.7 383.5,371.8 385.0,371.8 386.5,371.8 388.0,371.9 389.5,371.9 391.0,371.9 392.5,371.9 394.0,372.0 395.5,372.0 397.0,372.3 398.5,372.6 400.0,373.0 401.5,373.2 403.0,373.3 404.5,373.3 406.0,373.4 407.5,373.4 409.0,373.5 410.5,373.5 412.0,373.6 413.5,373.6 415.0,373.7 416.5,373.7" stroke="#9a5a3e" stroke-width="1.2" opacity="0.57"/><polyline points="46.0,328.0 47.5,328.0 49.0,328.1 50.5,328.3 52.0,328.4 53.5,328.6 55.0,328.8 56.5,329.0 58.0,329.1 59.5,329.3 61.0,329.5 62.5,329.6 64.0,329.8 65.5,330.0 67.0,330.2 68.5,330.3 70.0,330.5 71.5,330.7 73.0,330.9 74.5,331.0 76.0,331.2 77.5,331.4 79.0,331.5 80.5,331.7 82.0,331.9 83.5,332.1 85.0,332.2 86.5,332.4 88.0,332.6 89.5,332.7 91.0,332.7 92.5,332.8 94.0,332.9 95.5,333.0 97.0,333.1 98.5,333.1 100.0,333.2 101.5,333.3 103.0,333.4 104.5,333.5 106.0,333.5 107.5,333.6 109.0,333.7 110.5,333.8 112.0,333.9 113.5,333.9 115.0,334.0 116.5,334.1 118.0,334.2 119.5,334.3 121.0,334.3 122.5,334.4 124.0,334.5 125.5,334.6 127.0,334.5 128.5,334.1 130.0,333.2 131.5,332.2 133.0,331.3 134.5,330.4 136.0,329.4 137.5,328.0 139.0,326.6 140.5,325.3 142.0,323.9 143.5,322.5 145.0,321.1 146.5,319.7 148.0,318.3 149.5,318.3 151.0,318.3 152.5,318.3 154.0,318.2 155.5,318.2 157.0,318.2 158.5,318.2 160.0,318.1 161.5,318.1 163.0,318.1 164.5,318.1 166.0,318.0 167.5,318.0 169.0,318.0 170.5,318.0 172.0,317.9 173.5,319.1 175.0,320.3 176.5,321.5 178.0,322.1 179.5,322.4 181.0,323.5 182.5,325.0 184.0,326.5 185.5,328.1 187.0,329.6 188.5,331.1 190.0,332.5 191.5,333.9 193.0,334.9 194.5,335.6 196.0,336.3 197.5,337.0 199.0,337.7 200.5,338.4 202.0,339.1 203.5,339.8 205.0,340.5 206.5,341.2 208.0,341.8 209.5,342.4 211.0,343.0 212.5,343.7 214.0,344.3 215.5,344.9 217.0,345.5 218.5,346.1 220.0,346.7 221.5,347.3 223.0,347.9 224.5,348.6 226.0,349.2 227.5,349.8 229.0,350.4 230.5,351.0 232.0,351.6 233.5,352.2 235.0,352.8 236.5,353.5 238.0,354.1 239.5,354.7 241.0,354.8 242.5,354.7 244.0,354.6 245.5,354.5 247.0,353.9 248.5,353.2 250.0,352.5 251.5,351.8 253.0,351.2 254.5,350.5 256.0,349.8 257.5,349.1 259.0,348.5 260.5,348.0 262.0,347.6 263.5,347.3 265.0,346.9 266.5,346.6 268.0,346.2 269.5,345.9 271.0,345.5 272.5,345.1 274.0,344.8 275.5,344.6 277.0,344.8 278.5,345.1 280.0,345.6 281.5,346.2 283.0,346.9 284.5,347.5 286.0,348.1 287.5,348.8 289.0,349.4 290.5,350.1 292.0,350.7 293.5,351.4 295.0,352.0 296.5,352.7 298.0,353.4 299.5,354.1 301.0,354.8 302.5,355.5 304.0,356.2 305.5,356.9 307.0,357.7 308.5,358.4 310.0,359.1 311.5,359.8 313.0,360.5 314.5,361.2 316.0,361.9 317.5,362.5 319.0,363.2 320.5,363.8 322.0,364.5 323.5,365.1 325.0,365.8 326.5,366.4 328.0,367.1 329.5,367.7 331.0,368.4 332.5,369.1 334.0,369.8 335.5,370.4 337.0,370.7 338.5,371.1 340.0,371.7 341.5,372.4 343.0,372.7 344.5,372.8 346.0,372.8 347.5,372.9 349.0,373.0 350.5,373.0 352.0,373.1 353.5,373.2 355.0,373.2 356.5,373.2 358.0,373.3 359.5,373.3 361.0,373.3 362.5,373.3 364.0,373.3 365.5,373.4 367.0,373.4 368.5,373.4 370.0,373.4 371.5,373.4 373.0,373.5 374.5,373.5 376.0,373.5 377.5,373.5 379.0,373.5 380.5,373.6 382.0,373.6 383.5,373.6 385.0,373.6 386.5,373.6 388.0,373.7 389.5,373.7 391.0,373.7 392.5,373.7 394.0,373.8 395.5,373.8 397.0,374.1 398.5,374.5 400.0,374.9 401.5,375.2 403.0,375.3 404.5,375.3 406.0,375.3 407.5,375.4 409.0,375.4 410.5,375.5 412.0,375.5 413.5,375.6 415.0,375.6 416.5,375.6" stroke="#b4775a" stroke-width="1.2" opacity="0.62"/><polyline points="46.0,329.8 47.5,329.8 49.0,329.9 50.5,330.1 52.0,330.3 53.5,330.4 55.0,330.6 56.5,330.8 58.0,331.0 59.5,331.2 61.0,331.3 62.5,331.5 64.0,331.7 65.5,331.9 67.0,332.0 68.5,332.2 70.0,332.4 71.5,332.6 73.0,332.7 74.5,332.9 76.0,333.1 77.5,333.3 79.0,333.4 80.5,333.6 82.0,333.8 83.5,334.0 85.0,334.1 86.5,334.3 88.0,334.5 89.5,334.6 91.0,334.7 92.5,334.8 94.0,334.9 95.5,334.9 97.0,335.0 98.5,335.1 100.0,335.2 101.5,335.3 103.0,335.4 104.5,335.5 106.0,335.6 107.5,335.6 109.0,335.7 110.5,335.8 112.0,335.9 113.5,336.0 115.0,336.1 116.5,336.2 118.0,336.3 119.5,336.3 121.0,336.4 122.5,336.5 124.0,336.6 125.5,336.7 127.0,336.6 128.5,336.2 130.0,335.4 131.5,334.5 133.0,333.6 134.5,332.8 136.0,331.9 137.5,330.5 139.0,329.1 140.5,327.7 142.0,326.3 143.5,324.9 145.0,323.5 146.5,322.1 148.0,320.8 149.5,320.7 151.0,320.7 152.5,320.7 154.0,320.6 155.5,320.6 157.0,320.6 158.5,320.6 160.0,320.5 161.5,320.5 163.0,320.5 164.5,320.4 166.0,320.4 167.5,320.4 169.0,320.4 170.5,320.3 172.0,320.3 173.5,321.7 175.0,323.1 176.5,324.5 178.0,325.2 179.5,325.6 181.0,326.6 182.5,328.0 184.0,329.4 185.5,330.8 187.0,332.2 188.5,333.6 190.0,334.9 191.5,336.2 193.0,337.1 194.5,337.8 196.0,338.5 197.5,339.2 199.0,339.8 200.5,340.5 202.0,341.2 203.5,341.9 205.0,342.5 206.5,343.2 208.0,343.8 209.5,344.4 211.0,345.0 212.5,345.6 214.0,346.2 215.5,346.8 217.0,347.4 218.5,348.0 220.0,348.6 221.5,349.2 223.0,349.8 224.5,350.3 226.0,350.9 227.5,351.5 229.0,352.1 230.5,352.7 232.0,353.3 233.5,353.9 235.0,354.5 236.5,355.1 238.0,355.7 239.5,356.3 241.0,356.5 242.5,356.5 244.0,356.5 245.5,356.5 247.0,356.0 248.5,355.3 250.0,354.6 251.5,353.9 253.0,353.2 254.5,352.5 256.0,351.8 257.5,351.1 259.0,350.5 260.5,350.0 262.0,349.7 263.5,349.3 265.0,349.0 266.5,348.6 268.0,348.3 269.5,347.9 271.0,347.6 272.5,347.2 274.0,346.9 275.5,346.7 277.0,346.9 278.5,347.0 280.0,347.5 281.5,348.1 283.0,348.8 284.5,349.4 286.0,350.1 287.5,350.7 289.0,351.4 290.5,352.0 292.0,352.7 293.5,353.3 295.0,354.0 296.5,354.7 298.0,355.4 299.5,356.1 301.0,356.9 302.5,357.6 304.0,358.3 305.5,359.0 307.0,359.7 308.5,360.4 310.0,361.1 311.5,361.8 313.0,362.6 314.5,363.3 316.0,363.9 317.5,364.6 319.0,365.2 320.5,365.8 322.0,366.5 323.5,367.1 325.0,367.7 326.5,368.4 328.0,369.0 329.5,369.6 331.0,370.2 332.5,371.0 334.0,371.7 335.5,372.3 337.0,372.7 338.5,373.1 340.0,373.8 341.5,374.6 343.0,374.9 344.5,374.9 346.0,375.0 347.5,375.0 349.0,375.1 350.5,375.1 352.0,375.2 353.5,375.2 355.0,375.3 356.5,375.3 358.0,375.3 359.5,375.3 361.0,375.3 362.5,375.3 364.0,375.3 365.5,375.3 367.0,375.3 368.5,375.4 370.0,375.4 371.5,375.4 373.0,375.4 374.5,375.4 376.0,375.4 377.5,375.4 379.0,375.4 380.5,375.4 382.0,375.4 383.5,375.5 385.0,375.5 386.5,375.5 388.0,375.5 389.5,375.5 391.0,375.5 392.5,375.5 394.0,375.5 395.5,375.5 397.0,375.9 398.5,376.4 400.0,376.8 401.5,377.2 403.0,377.2 404.5,377.3 406.0,377.3 407.5,377.3 409.0,377.4 410.5,377.4 412.0,377.4 413.5,377.5 415.0,377.5 416.5,377.5" stroke="#a06042" stroke-width="1.2" opacity="0.68"/><polyline points="46.0,331.6 47.5,331.6 49.0,331.7 50.5,331.9 52.0,332.1 53.5,332.3 55.0,332.5 56.5,332.6 58.0,332.8 59.5,333.0 61.0,333.2 62.5,333.4 64.0,333.5 65.5,333.7 67.0,333.9 68.5,334.1 70.0,334.3 71.5,334.4 73.0,334.6 74.5,334.8 76.0,335.0 77.5,335.2 79.0,335.3 80.5,335.5 82.0,335.7 83.5,335.9 85.0,336.1 86.5,336.2 88.0,336.4 89.5,336.5 91.0,336.6 92.5,336.7 94.0,336.8 95.5,336.9 97.0,337.0 98.5,337.1 100.0,337.2 101.5,337.3 103.0,337.4 104.5,337.5 106.0,337.6 107.5,337.7 109.0,337.8 110.5,337.9 112.0,338.0 113.5,338.0 115.0,338.1 116.5,338.2 118.0,338.3 119.5,338.4 121.0,338.5 122.5,338.6 124.0,338.7 125.5,338.8 127.0,338.7 128.5,338.3 130.0,337.5 131.5,336.7 133.0,336.0 134.5,335.2 136.0,334.4 137.5,333.0 139.0,331.6 140.5,330.2 142.0,328.8 143.5,327.4 145.0,326.0 146.5,324.6 148.0,323.2 149.5,323.1 151.0,323.1 152.5,323.1 154.0,323.0 155.5,323.0 157.0,323.0 158.5,322.9 160.0,322.9 161.5,322.9 163.0,322.8 164.5,322.8 166.0,322.8 167.5,322.8 169.0,322.7 170.5,322.7 172.0,322.7 173.5,324.3 175.0,325.9 176.5,327.5 178.0,328.3 179.5,328.7 181.0,329.7 182.5,331.0 184.0,332.3 185.5,333.6 187.0,334.9 188.5,336.2 190.0,337.3 191.5,338.5 193.0,339.4 194.5,340.0 196.0,340.7 197.5,341.3 199.0,342.0 200.5,342.6 202.0,343.3 203.5,343.9 205.0,344.6 206.5,345.2 208.0,345.8 209.5,346.4 211.0,346.9 212.5,347.5 214.0,348.1 215.5,348.7 217.0,349.2 218.5,349.8 220.0,350.4 221.5,351.0 223.0,351.6 224.5,352.1 226.0,352.7 227.5,353.3 229.0,353.9 230.5,354.5 232.0,355.0 233.5,355.6 235.0,356.2 236.5,356.8 238.0,357.3 239.5,357.9 241.0,358.2 242.5,358.3 244.0,358.4 245.5,358.5 247.0,358.1 248.5,357.3 250.0,356.6 251.5,356.0 253.0,355.3 254.5,354.6 256.0,353.9 257.5,353.2 259.0,352.5 260.5,352.1 262.0,351.7 263.5,351.4 265.0,351.0 266.5,350.7 268.0,350.3 269.5,350.0 271.0,349.7 272.5,349.3 274.0,349.0 275.5,348.8 277.0,348.9 278.5,348.9 280.0,349.4 281.5,350.1 283.0,350.7 284.5,351.4 286.0,352.0 287.5,352.7 289.0,353.4 290.5,354.0 292.0,354.7 293.5,355.3 295.0,356.0 296.5,356.7 298.0,357.4 299.5,358.2 301.0,358.9 302.5,359.6 304.0,360.3 305.5,361.0 307.0,361.7 308.5,362.5 310.0,363.2 311.5,363.9 313.0,364.6 314.5,365.3 316.0,366.0 317.5,366.6 319.0,367.2 320.5,367.8 322.0,368.4 323.5,369.1 325.0,369.7 326.5,370.3 328.0,370.9 329.5,371.5 331.0,372.1 332.5,372.8 334.0,373.5 335.5,374.1 337.0,374.6 338.5,375.0 340.0,375.8 341.5,376.7 343.0,377.0 344.5,377.1 346.0,377.1 347.5,377.1 349.0,377.2 350.5,377.2 352.0,377.2 353.5,377.3 355.0,377.3 356.5,377.3 358.0,377.3 359.5,377.3 361.0,377.3 362.5,377.3 364.0,377.3 365.5,377.3 367.0,377.3 368.5,377.3 370.0,377.3 371.5,377.3 373.0,377.3 374.5,377.3 376.0,377.3 377.5,377.3 379.0,377.3 380.5,377.3 382.0,377.3 383.5,377.3 385.0,377.3 386.5,377.3 388.0,377.3 389.5,377.3 391.0,377.3 392.5,377.3 394.0,377.3 395.5,377.3 397.0,377.7 398.5,378.2 400.0,378.8 401.5,379.2 403.0,379.2 404.5,379.2 406.0,379.3 407.5,379.3 409.0,379.3 410.5,379.3 412.0,379.4 413.5,379.4 415.0,379.4 416.5,379.4" stroke="#bc8265" stroke-width="1.2" opacity="0.72"/><polyline points="46.0,333.4 47.5,333.4 49.0,333.6 50.5,333.7 52.0,333.9 53.5,334.1 55.0,334.3 56.5,334.5 58.0,334.7 59.5,334.8 61.0,335.0 62.5,335.2 64.0,335.4 65.5,335.6 67.0,335.8 68.5,335.9 70.0,336.1 71.5,336.3 73.0,336.5 74.5,336.7 76.0,336.9 77.5,337.1 79.0,337.2 80.5,337.4 82.0,337.6 83.5,337.8 85.0,338.0 86.5,338.2 88.0,338.3 89.5,338.4 91.0,338.6 92.5,338.7 94.0,338.8 95.5,338.9 97.0,339.0 98.5,339.1 100.0,339.2 101.5,339.3 103.0,339.4 104.5,339.5 106.0,339.6 107.5,339.7 109.0,339.8 110.5,339.9 112.0,340.0 113.5,340.1 115.0,340.2 116.5,340.3 118.0,340.4 119.5,340.5 121.0,340.6 122.5,340.7 124.0,340.8 125.5,340.9 127.0,340.8 128.5,340.4 130.0,339.7 131.5,339.0 133.0,338.3 134.5,337.6 136.0,336.9 137.5,335.4 139.0,334.0 140.5,332.6 142.0,331.2 143.5,329.8 145.0,328.4 146.5,327.0 148.0,325.6 149.5,325.6 151.0,325.5 152.5,325.5 154.0,325.4 155.5,325.4 157.0,325.4 158.5,325.3 160.0,325.3 161.5,325.3 163.0,325.2 164.5,325.2 166.0,325.2 167.5,325.1 169.0,325.1 170.5,325.0 172.0,325.0 173.5,326.9 175.0,328.7 176.5,330.5 178.0,331.5 179.5,331.9 181.0,332.8 182.5,334.0 184.0,335.2 185.5,336.4 187.0,337.6 188.5,338.7 190.0,339.8 191.5,340.8 193.0,341.6 194.5,342.2 196.0,342.8 197.5,343.5 199.0,344.1 200.5,344.7 202.0,345.3 203.5,346.0 205.0,346.6 206.5,347.2 208.0,347.7 209.5,348.3 211.0,348.9 212.5,349.4 214.0,350.0 215.5,350.6 217.0,351.1 218.5,351.7 220.0,352.2 221.5,352.8 223.0,353.4 224.5,353.9 226.0,354.5 227.5,355.1 229.0,355.6 230.5,356.2 232.0,356.7 233.5,357.3 235.0,357.9 236.5,358.4 238.0,359.0 239.5,359.5 241.0,359.9 242.5,360.1 244.0,360.3 245.5,360.6 247.0,360.2 248.5,359.4 250.0,358.7 251.5,358.0 253.0,357.3 254.5,356.6 256.0,355.9 257.5,355.2 259.0,354.5 260.5,354.1 262.0,353.8 263.5,353.4 265.0,353.1 266.5,352.7 268.0,352.4 269.5,352.1 271.0,351.7 272.5,351.4 274.0,351.1 275.5,350.9 277.0,350.9 278.5,350.9 280.0,351.3 281.5,352.0 283.0,352.7 284.5,353.3 286.0,354.0 287.5,354.7 289.0,355.3 290.5,356.0 292.0,356.7 293.5,357.3 295.0,358.0 296.5,358.7 298.0,359.4 299.5,360.2 301.0,360.9 302.5,361.6 304.0,362.3 305.5,363.1 307.0,363.8 308.5,364.5 310.0,365.2 311.5,366.0 313.0,366.7 314.5,367.4 316.0,368.1 317.5,368.6 319.0,369.2 320.5,369.8 322.0,370.4 323.5,371.0 325.0,371.6 326.5,372.2 328.0,372.8 329.5,373.4 331.0,374.0 332.5,374.7 334.0,375.4 335.5,376.0 337.0,376.5 338.5,377.0 340.0,377.8 341.5,378.9 343.0,379.2 344.5,379.2 346.0,379.2 347.5,379.3 349.0,379.3 350.5,379.3 352.0,379.3 353.5,379.3 355.0,379.3 356.5,379.3 358.0,379.3 359.5,379.3 361.0,379.3 362.5,379.3 364.0,379.3 365.5,379.3 367.0,379.3 368.5,379.2 370.0,379.2 371.5,379.2 373.0,379.2 374.5,379.2 376.0,379.2 377.5,379.2 379.0,379.2 380.5,379.2 382.0,379.2 383.5,379.2 385.0,379.1 386.5,379.1 388.0,379.1 389.5,379.1 391.0,379.1 392.5,379.1 394.0,379.1 395.5,379.1 397.0,379.5 398.5,380.1 400.0,380.7 401.5,381.1 403.0,381.2 404.5,381.2 406.0,381.2 407.5,381.2 409.0,381.3 410.5,381.3 412.0,381.3 413.5,381.3 415.0,381.3 416.5,381.3" stroke="#9e5e41" stroke-width="1.2" opacity="0.78"/><polyline points="46.0,335.2 47.5,335.2 49.0,335.4 50.5,335.6 52.0,335.7 53.5,335.9 55.0,336.1 56.5,336.3 58.0,336.5 59.5,336.7 61.0,336.9 62.5,337.1 64.0,337.3 65.5,337.4 67.0,337.6 68.5,337.8 70.0,338.0 71.5,338.2 73.0,338.4 74.5,338.6 76.0,338.8 77.5,339.0 79.0,339.1 80.5,339.3 82.0,339.5 83.5,339.7 85.0,339.9 86.5,340.1 88.0,340.3 89.5,340.4 91.0,340.5 92.5,340.6 94.0,340.7 95.5,340.8 97.0,340.9 98.5,341.0 100.0,341.2 101.5,341.3 103.0,341.4 104.5,341.5 106.0,341.6 107.5,341.7 109.0,341.8 110.5,341.9 112.0,342.0 113.5,342.2 115.0,342.3 116.5,342.4 118.0,342.5 119.5,342.6 121.0,342.7 122.5,342.8 124.0,342.9 125.5,343.0 127.0,342.9 128.5,342.5 130.0,341.9 131.5,341.2 133.0,340.6 134.5,340.0 136.0,339.3 137.5,337.9 139.0,336.5 140.5,335.1 142.0,333.7 143.5,332.3 145.0,330.8 146.5,329.4 148.0,328.0 149.5,328.0 151.0,327.9 152.5,327.9 154.0,327.9 155.5,327.8 157.0,327.8 158.5,327.7 160.0,327.7 161.5,327.6 163.0,327.6 164.5,327.6 166.0,327.5 167.5,327.5 169.0,327.4 170.5,327.4 172.0,327.4 173.5,329.4 175.0,331.5 176.5,333.5 178.0,334.6 179.5,335.1 181.0,335.9 182.5,337.0 184.0,338.1 185.5,339.2 187.0,340.2 188.5,341.2 190.0,342.2 191.5,343.1 193.0,343.8 194.5,344.4 196.0,345.0 197.5,345.6 199.0,346.2 200.5,346.8 202.0,347.4 203.5,348.0 205.0,348.6 206.5,349.2 208.0,349.7 209.5,350.3 211.0,350.8 212.5,351.4 214.0,351.9 215.5,352.4 217.0,353.0 218.5,353.5 220.0,354.1 221.5,354.6 223.0,355.2 224.5,355.7 226.0,356.3 227.5,356.8 229.0,357.4 230.5,357.9 232.0,358.4 233.5,359.0 235.0,359.5 236.5,360.1 238.0,360.6 239.5,361.2 241.0,361.6 242.5,361.9 244.0,362.3 245.5,362.6 247.0,362.2 248.5,361.5 250.0,360.8 251.5,360.1 253.0,359.3 254.5,358.6 256.0,357.9 257.5,357.2 259.0,356.5 260.5,356.1 262.0,355.8 263.5,355.5 265.0,355.1 266.5,354.8 268.0,354.5 269.5,354.1 271.0,353.8 272.5,353.5 274.0,353.2 275.5,352.9 277.0,352.9 278.5,352.8 280.0,353.2 281.5,353.9 283.0,354.6 284.5,355.3 286.0,355.9 287.5,356.6 289.0,357.3 290.5,358.0 292.0,358.6 293.5,359.3 295.0,360.0 296.5,360.7 298.0,361.5 299.5,362.2 301.0,362.9 302.5,363.6 304.0,364.4 305.5,365.1 307.0,365.8 308.5,366.6 310.0,367.3 311.5,368.0 313.0,368.8 314.5,369.5 316.0,370.1 317.5,370.7 319.0,371.3 320.5,371.9 322.0,372.4 323.5,373.0 325.0,373.6 326.5,374.2 328.0,374.7 329.5,375.3 331.0,375.9 332.5,376.6 334.0,377.3 335.5,377.9 337.0,378.4 338.5,378.9 340.0,379.9 341.5,381.0 343.0,381.4 344.5,381.4 346.0,381.4 347.5,381.4 349.0,381.4 350.5,381.4 352.0,381.4 353.5,381.4 355.0,381.4 356.5,381.4 358.0,381.3 359.5,381.3 361.0,381.3 362.5,381.3 364.0,381.3 365.5,381.2 367.0,381.2 368.5,381.2 370.0,381.2 371.5,381.2 373.0,381.1 374.5,381.1 376.0,381.1 377.5,381.1 379.0,381.1 380.5,381.0 382.0,381.0 383.5,381.0 385.0,381.0 386.5,381.0 388.0,380.9 389.5,380.9 391.0,380.9 392.5,380.9 394.0,380.9 395.5,380.8 397.0,381.3 398.5,382.0 400.0,382.6 401.5,383.1 403.0,383.1 404.5,383.1 406.0,383.2 407.5,383.2 409.0,383.2 410.5,383.2 412.0,383.2 413.5,383.3 415.0,383.3 416.5,383.3" stroke="#b67a5c" stroke-width="1.2" opacity="0.82"/><polyline points="46.0,337.1 47.5,337.1 49.0,337.2 50.5,337.4 52.0,337.6 53.5,337.8 55.0,338.0 56.5,338.2 58.0,338.3 59.5,338.5 61.0,338.7 62.5,338.9 64.0,339.1 65.5,339.3 67.0,339.5 68.5,339.7 70.0,339.9 71.5,340.1 73.0,340.3 74.5,340.5 76.0,340.7 77.5,340.8 79.0,341.0 80.5,341.2 82.0,341.4 83.5,341.6 85.0,341.8 86.5,342.0 88.0,342.2 89.5,342.3 91.0,342.4 92.5,342.5 94.0,342.7 95.5,342.8 97.0,342.9 98.5,343.0 100.0,343.1 101.5,343.3 103.0,343.4 104.5,343.5 106.0,343.6 107.5,343.7 109.0,343.9 110.5,344.0 112.0,344.1 113.5,344.2 115.0,344.3 116.5,344.4 118.0,344.6 119.5,344.7 121.0,344.8 122.5,344.9 124.0,345.0 125.5,345.2 127.0,345.0 128.5,344.6 130.0,344.1 131.5,343.5 133.0,342.9 134.5,342.4 136.0,341.8 137.5,340.4 139.0,339.0 140.5,337.5 142.0,336.1 143.5,334.7 145.0,333.3 146.5,331.9 148.0,330.4 149.5,330.4 151.0,330.4 152.5,330.3 154.0,330.3 155.5,330.2 157.0,330.2 158.5,330.1 160.0,330.1 161.5,330.0 163.0,330.0 164.5,329.9 166.0,329.9 167.5,329.9 169.0,329.8 170.5,329.8 172.0,329.7 173.5,332.0 175.0,334.3 176.5,336.5 178.0,337.7 179.5,338.2 181.0,339.0 182.5,340.0 184.0,341.0 185.5,341.9 187.0,342.9 188.5,343.8 190.0,344.6 191.5,345.4 193.0,346.1 194.5,346.6 196.0,347.2 197.5,347.8 199.0,348.3 200.5,348.9 202.0,349.5 203.5,350.1 205.0,350.6 206.5,351.2 208.0,351.7 209.5,352.2 211.0,352.8 212.5,353.3 214.0,353.8 215.5,354.3 217.0,354.9 218.5,355.4 220.0,355.9 221.5,356.5 223.0,357.0 224.5,357.5 226.0,358.0 227.5,358.6 229.0,359.1 230.5,359.6 232.0,360.1 233.5,360.7 235.0,361.2 236.5,361.7 238.0,362.3 239.5,362.8 241.0,363.3 242.5,363.7 244.0,364.2 245.5,364.7 247.0,364.3 248.5,363.6 250.0,362.8 251.5,362.1 253.0,361.4 254.5,360.7 256.0,359.9 257.5,359.2 259.0,358.5 260.5,358.1 262.0,357.8 263.5,357.5 265.0,357.2 266.5,356.9 268.0,356.5 269.5,356.2 271.0,355.9 272.5,355.6 274.0,355.3 275.5,355.0 277.0,354.9 278.5,354.8 280.0,355.2 281.5,355.9 283.0,356.5 284.5,357.2 286.0,357.9 287.5,358.6 289.0,359.3 290.5,360.0 292.0,360.6 293.5,361.3 295.0,362.0 296.5,362.7 298.0,363.5 299.5,364.2 301.0,364.9 302.5,365.7 304.0,366.4 305.5,367.1 307.0,367.9 308.5,368.6 310.0,369.4 311.5,370.1 313.0,370.8 314.5,371.6 316.0,372.2 317.5,372.7 319.0,373.3 320.5,373.9 322.0,374.4 323.5,375.0 325.0,375.5 326.5,376.1 328.0,376.7 329.5,377.2 331.0,377.8 332.5,378.5 334.0,379.1 335.5,379.8 337.0,380.3 338.5,380.9 340.0,381.9 341.5,383.1 343.0,383.5 344.5,383.5 346.0,383.5 347.5,383.5 349.0,383.5 350.5,383.5 352.0,383.5 353.5,383.4 355.0,383.4 356.5,383.4 358.0,383.4 359.5,383.3 361.0,383.3 362.5,383.3 364.0,383.2 365.5,383.2 367.0,383.2 368.5,383.1 370.0,383.1 371.5,383.1 373.0,383.1 374.5,383.0 376.0,383.0 377.5,383.0 379.0,382.9 380.5,382.9 382.0,382.9 383.5,382.8 385.0,382.8 386.5,382.8 388.0,382.8 389.5,382.7 391.0,382.7 392.5,382.7 394.0,382.6 395.5,382.6 397.0,383.1 398.5,383.8 400.0,384.6 401.5,385.1 403.0,385.1 404.5,385.1 406.0,385.1 407.5,385.1 409.0,385.1 410.5,385.2 412.0,385.2 413.5,385.2 415.0,385.2 416.5,385.2" stroke="#97573c" stroke-width="1.2" opacity="0.88"/><polyline points="46.0,338.9 47.5,338.9 49.0,339.0 50.5,339.2 52.0,339.4 53.5,339.6 55.0,339.8 56.5,340.0 58.0,340.2 59.5,340.4 61.0,340.6 62.5,340.8 64.0,341.0 65.5,341.2 67.0,341.4 68.5,341.6 70.0,341.8 71.5,342.0 73.0,342.2 74.5,342.3 76.0,342.5 77.5,342.7 79.0,342.9 80.5,343.1 82.0,343.3 83.5,343.5 85.0,343.7 86.5,343.9 88.0,344.1 89.5,344.2 91.0,344.4 92.5,344.5 94.0,344.6 95.5,344.7 97.0,344.9 98.5,345.0 100.0,345.1 101.5,345.3 103.0,345.4 104.5,345.5 106.0,345.6 107.5,345.8 109.0,345.9 110.5,346.0 112.0,346.1 113.5,346.3 115.0,346.4 116.5,346.5 118.0,346.6 119.5,346.8 121.0,346.9 122.5,347.0 124.0,347.2 125.5,347.3 127.0,347.1 128.5,346.7 130.0,346.2 131.5,345.7 133.0,345.3 134.5,344.8 136.0,344.3 137.5,342.9 139.0,341.4 140.5,340.0 142.0,338.6 143.5,337.1 145.0,335.7 146.5,334.3 148.0,332.9 149.5,332.8 151.0,332.8 152.5,332.7 154.0,332.7 155.5,332.6 157.0,332.6 158.5,332.5 160.0,332.5 161.5,332.4 163.0,332.4 164.5,332.3 166.0,332.3 167.5,332.2 169.0,332.2 170.5,332.1 172.0,332.1 173.5,334.6 175.0,337.1 176.5,339.6 178.0,340.8 179.5,341.4 181.0,342.2 182.5,343.0 184.0,343.9 185.5,344.7 187.0,345.5 188.5,346.3 190.0,347.0 191.5,347.7 193.0,348.3 194.5,348.9 196.0,349.4 197.5,349.9 199.0,350.5 200.5,351.0 202.0,351.6 203.5,352.1 205.0,352.6 206.5,353.2 208.0,353.7 209.5,354.2 211.0,354.7 212.5,355.2 214.0,355.7 215.5,356.2 217.0,356.7 218.5,357.3 220.0,357.8 221.5,358.3 223.0,358.8 224.5,359.3 226.0,359.8 227.5,360.3 229.0,360.8 230.5,361.3 232.0,361.9 233.5,362.4 235.0,362.9 236.5,363.4 238.0,363.9 239.5,364.4 241.0,365.0 242.5,365.5 244.0,366.1 245.5,366.7 247.0,366.4 248.5,365.6 250.0,364.9 251.5,364.2 253.0,363.4 254.5,362.7 256.0,362.0 257.5,361.2 259.0,360.5 260.5,360.2 262.0,359.8 263.5,359.5 265.0,359.2 266.5,358.9 268.0,358.6 269.5,358.3 271.0,358.0 272.5,357.7 274.0,357.4 275.5,357.1 277.0,356.9 278.5,356.7 280.0,357.1 281.5,357.8 283.0,358.5 284.5,359.2 286.0,359.9 287.5,360.5 289.0,361.2 290.5,361.9 292.0,362.6 293.5,363.3 295.0,364.0 296.5,364.7 298.0,365.5 299.5,366.2 301.0,367.0 302.5,367.7 304.0,368.4 305.5,369.2 307.0,369.9 308.5,370.7 310.0,371.4 311.5,372.2 313.0,372.9 314.5,373.6 316.0,374.2 317.5,374.8 319.0,375.3 320.5,375.9 322.0,376.4 323.5,377.0 325.0,377.5 326.5,378.0 328.0,378.6 329.5,379.1 331.0,379.7 332.5,380.3 334.0,381.0 335.5,381.7 337.0,382.2 338.5,382.8 340.0,383.9 341.5,385.3 343.0,385.7 344.5,385.7 346.0,385.6 347.5,385.6 349.0,385.6 350.5,385.6 352.0,385.5 353.5,385.5 355.0,385.5 356.5,385.4 358.0,385.4 359.5,385.3 361.0,385.3 362.5,385.3 364.0,385.2 365.5,385.2 367.0,385.1 368.5,385.1 370.0,385.1 371.5,385.0 373.0,385.0 374.5,384.9 376.0,384.9 377.5,384.9 379.0,384.8 380.5,384.8 382.0,384.7 383.5,384.7 385.0,384.7 386.5,384.6 388.0,384.6 389.5,384.5 391.0,384.5 392.5,384.5 394.0,384.4 395.5,384.4 397.0,384.9 398.5,385.7 400.0,386.5 401.5,387.0 403.0,387.1 404.5,387.1 406.0,387.1 407.5,387.1 409.0,387.1 410.5,387.1 412.0,387.1 413.5,387.1 415.0,387.1 416.5,387.1" stroke="#ad6e50" stroke-width="1.2" opacity="0.92"/><polyline points="46.0,340.7 47.5,340.7 49.0,340.8 50.5,341.0 52.0,341.2 53.5,341.4 55.0,341.6 56.5,341.8 58.0,342.0 59.5,342.2 61.0,342.4 62.5,342.6 64.0,342.8 65.5,343.0 67.0,343.2 68.5,343.4 70.0,343.6 71.5,343.8 73.0,344.0 74.5,344.2 76.0,344.4 77.5,344.6 79.0,344.8 80.5,345.0 82.0,345.2 83.5,345.4 85.0,345.6 86.5,345.8 88.0,346.0 89.5,346.2 91.0,346.3 92.5,346.4 94.0,346.6 95.5,346.7 97.0,346.8 98.5,347.0 100.0,347.1 101.5,347.2 103.0,347.4 104.5,347.5 106.0,347.6 107.5,347.8 109.0,347.9 110.5,348.1 112.0,348.2 113.5,348.3 115.0,348.5 116.5,348.6 118.0,348.7 119.5,348.9 121.0,349.0 122.5,349.1 124.0,349.3 125.5,349.4 127.0,349.2 128.5,348.8 130.0,348.4 131.5,348.0 133.0,347.6 134.5,347.2 136.0,346.8 137.5,345.3 139.0,343.9 140.5,342.5 142.0,341.0 143.5,339.6 145.0,338.2 146.5,336.7 148.0,335.3 149.5,335.2 151.0,335.2 152.5,335.1 154.0,335.1 155.5,335.0 157.0,335.0 158.5,334.9 160.0,334.9 161.5,334.8 163.0,334.7 164.5,334.7 166.0,334.6 167.5,334.6 169.0,334.5 170.5,334.5 172.0,334.4 173.5,337.1 175.0,339.8 176.5,342.6 178.0,343.9 179.5,344.6 181.0,345.3 182.5,346.0 184.0,346.7 185.5,347.5 187.0,348.2 188.5,348.9 190.0,349.5 191.5,350.0 193.0,350.5 194.5,351.1 196.0,351.6 197.5,352.1 199.0,352.6 200.5,353.1 202.0,353.6 203.5,354.1 205.0,354.7 206.5,355.2 208.0,355.7 209.5,356.2 211.0,356.6 212.5,357.1 214.0,357.6 215.5,358.1 217.0,358.6 218.5,359.1 220.0,359.6 221.5,360.1 223.0,360.6 224.5,361.1 226.0,361.6 227.5,362.1 229.0,362.6 230.5,363.1 232.0,363.6 233.5,364.1 235.0,364.5 236.5,365.0 238.0,365.5 239.5,366.0 241.0,366.7 242.5,367.3 244.0,368.0 245.5,368.7 247.0,368.5 248.5,367.7 250.0,367.0 251.5,366.2 253.0,365.5 254.5,364.7 256.0,364.0 257.5,363.2 259.0,362.5 260.5,362.2 262.0,361.9 263.5,361.6 265.0,361.3 266.5,361.0 268.0,360.7 269.5,360.4 271.0,360.1 272.5,359.8 274.0,359.5 275.5,359.2 277.0,358.9 278.5,358.6 280.0,359.0 281.5,359.7 283.0,360.4 284.5,361.1 286.0,361.8 287.5,362.5 289.0,363.2 290.5,363.9 292.0,364.6 293.5,365.3 295.0,366.0 296.5,366.7 298.0,367.5 299.5,368.2 301.0,369.0 302.5,369.7 304.0,370.5 305.5,371.2 307.0,372.0 308.5,372.7 310.0,373.5 311.5,374.2 313.0,375.0 314.5,375.7 316.0,376.3 317.5,376.8 319.0,377.4 320.5,377.9 322.0,378.4 323.5,378.9 325.0,379.5 326.5,380.0 328.0,380.5 329.5,381.0 331.0,381.6 332.5,382.2 334.0,382.9 335.5,383.5 337.0,384.2 338.5,384.8 340.0,386.0 341.5,387.4 343.0,387.9 344.5,387.8 346.0,387.8 347.5,387.7 349.0,387.7 350.5,387.6 352.0,387.6 353.5,387.5 355.0,387.5 356.5,387.4 358.0,387.4 359.5,387.3 361.0,387.3 362.5,387.2 364.0,387.2 365.5,387.1 367.0,387.1 368.5,387.0 370.0,387.0 371.5,386.9 373.0,386.9 374.5,386.8 376.0,386.8 377.5,386.7 379.0,386.7 380.5,386.6 382.0,386.6 383.5,386.5 385.0,386.5 386.5,386.4 388.0,386.4 389.5,386.3 391.0,386.3 392.5,386.2 394.0,386.2 395.5,386.1 397.0,386.7 398.5,387.6 400.0,388.4 401.5,389.0 403.0,389.0 404.5,389.0 406.0,389.0 407.5,389.0 409.0,389.0 410.5,389.0 412.0,389.0 413.5,389.0 415.0,389.0 416.5,389.0" stroke="#9b5b3f" stroke-width="1.2" opacity="0.97"/><polyline points="46.0,335.0 47.5,335.0 49.0,335.1 50.5,335.3 52.0,335.5 53.5,335.7 55.0,335.9 56.5,336.1 58.0,336.2 59.5,336.4 61.0,336.6 62.5,336.8 64.0,337.0 65.5,337.2 67.0,337.4 68.5,337.6 70.0,337.7 71.5,337.9 73.0,338.1 74.5,338.3 76.0,338.5 77.5,338.7 79.0,338.9 80.5,339.1 82.0,339.2 83.5,339.4 85.0,339.6 86.5,339.8 88.0,340.0 89.5,340.1 91.0,340.2 92.5,340.3 94.0,340.4 95.5,340.5 97.0,340.7 98.5,340.8 100.0,340.9 101.5,341.0 103.0,341.1 104.5,341.2 106.0,341.3 107.5,341.4 109.0,341.5 110.5,341.6 112.0,341.8 113.5,341.9 115.0,342.0 116.5,342.1 118.0,342.2 119.5,342.3 121.0,342.4 122.5,342.5 124.0,342.6 125.5,342.7 127.0,342.6 128.5,342.2 130.0,341.6 131.5,340.9 133.0,340.3 134.5,339.6 136.0,339.0 137.5,337.6 139.0,336.2 140.5,334.7 142.0,333.3 143.5,331.9 145.0,330.5 146.5,329.1 148.0,327.7 149.5,327.6 151.0,327.6 152.5,327.6 154.0,327.5 155.5,327.5 157.0,327.4 158.5,327.4 160.0,327.4 161.5,327.3 163.0,327.3 164.5,327.2 166.0,327.2 167.5,327.2 169.0,327.1 170.5,327.1 172.0,327.0 173.5,329.1 175.0,331.1 176.5,333.1 178.0,334.1 179.5,334.6 181.0,335.5 182.5,336.6 184.0,337.7 185.5,338.8 187.0,339.8 188.5,340.9 190.0,341.8 191.5,342.8 193.0,343.5 194.5,344.1 196.0,344.7 197.5,345.3 199.0,345.9 200.5,346.5 202.0,347.1 203.5,347.7 205.0,348.3 206.5,348.9 208.0,349.4 209.5,350.0 211.0,350.5 212.5,351.1 214.0,351.6 215.5,352.2 217.0,352.7 218.5,353.3 220.0,353.8 221.5,354.4 223.0,354.9 224.5,355.5 226.0,356.0 227.5,356.6 229.0,357.1 230.5,357.7 232.0,358.2 233.5,358.7 235.0,359.3 236.5,359.8 238.0,360.4 239.5,360.9 241.0,361.3 242.5,361.7 244.0,362.0 245.5,362.3 247.0,361.9 248.5,361.2 250.0,360.5 251.5,359.8 253.0,359.1 254.5,358.3 256.0,357.6 257.5,356.9 259.0,356.2 260.5,355.8 262.0,355.5 263.5,355.2 265.0,354.8 266.5,354.5 268.0,354.2 269.5,353.9 271.0,353.5 272.5,353.2 274.0,352.9 275.5,352.6 277.0,352.6 278.5,352.5 280.0,353.0 281.5,353.7 283.0,354.3 284.5,355.0 286.0,355.7 287.5,356.3 289.0,357.0 290.5,357.7 292.0,358.4 293.5,359.0 295.0,359.7 296.5,360.4 298.0,361.2 299.5,361.9 301.0,362.6 302.5,363.4 304.0,364.1 305.5,364.8 307.0,365.6 308.5,366.3 310.0,367.0 311.5,367.7 313.0,368.5 314.5,369.2 316.0,369.8 317.5,370.4 319.0,371.0 320.5,371.6 322.0,372.2 323.5,372.7 325.0,373.3 326.5,373.9 328.0,374.5 329.5,375.1 331.0,375.6 332.5,376.3 334.0,377.0 335.5,377.6 337.0,378.1 338.5,378.7 340.0,379.6 341.5,380.7 343.0,381.1 344.5,381.1 346.0,381.1 347.5,381.1 349.0,381.1 350.5,381.1 352.0,381.1 353.5,381.1 355.0,381.1 356.5,381.1 358.0,381.1 359.5,381.0 361.0,381.0 362.5,381.0 364.0,381.0 365.5,381.0 367.0,380.9 368.5,380.9 370.0,380.9 371.5,380.9 373.0,380.9 374.5,380.9 376.0,380.8 377.5,380.8 379.0,380.8 380.5,380.8 382.0,380.8 383.5,380.7 385.0,380.7 386.5,380.7 388.0,380.7 389.5,380.7 391.0,380.6 392.5,380.6 394.0,380.6 395.5,380.6 397.0,381.0 398.5,381.7 400.0,382.4 401.5,382.8 403.0,382.8 404.5,382.9 406.0,382.9 407.5,382.9 409.0,382.9 410.5,383.0 412.0,383.0 413.5,383.0 415.0,383.0 416.5,383.0" stroke="#7d4f3c" stroke-width=".8" opacity="0.45"/><polyline points="46.0,338.8 47.5,338.8 49.0,338.9 50.5,339.1 52.0,339.3 53.5,339.5 55.0,339.7 56.5,339.9 58.0,340.1 59.5,340.3 61.0,340.5 62.5,340.7 64.0,340.9 65.5,341.1 67.0,341.3 68.5,341.4 70.0,341.6 71.5,341.8 73.0,342.0 74.5,342.2 76.0,342.4 77.5,342.6 79.0,342.8 80.5,343.0 82.0,343.2 83.5,343.4 85.0,343.6 86.5,343.8 88.0,344.0 89.5,344.1 91.0,344.3 92.5,344.4 94.0,344.5 95.5,344.6 97.0,344.8 98.5,344.9 100.0,345.0 101.5,345.1 103.0,345.3 104.5,345.4 106.0,345.5 107.5,345.6 109.0,345.8 110.5,345.9 112.0,346.0 113.5,346.1 115.0,346.3 116.5,346.4 118.0,346.5 119.5,346.6 121.0,346.8 122.5,346.9 124.0,347.0 125.5,347.2 127.0,347.0 128.5,346.6 130.0,346.1 131.5,345.6 133.0,345.1 134.5,344.6 136.0,344.1 137.5,342.7 139.0,341.3 140.5,339.9 142.0,338.4 143.5,337.0 145.0,335.6 146.5,334.1 148.0,332.7 149.5,332.7 151.0,332.6 152.5,332.6 154.0,332.5 155.5,332.5 157.0,332.4 158.5,332.4 160.0,332.3 161.5,332.3 163.0,332.2 164.5,332.2 166.0,332.1 167.5,332.1 169.0,332.0 170.5,332.0 172.0,331.9 173.5,334.4 175.0,336.9 176.5,339.4 178.0,340.6 179.5,341.2 181.0,342.0 182.5,342.8 184.0,343.7 185.5,344.5 187.0,345.4 188.5,346.2 190.0,346.9 191.5,347.6 193.0,348.2 194.5,348.7 196.0,349.3 197.5,349.8 199.0,350.3 200.5,350.9 202.0,351.4 203.5,352.0 205.0,352.5 206.5,353.1 208.0,353.6 209.5,354.1 211.0,354.6 212.5,355.1 214.0,355.6 215.5,356.1 217.0,356.6 218.5,357.1 220.0,357.7 221.5,358.2 223.0,358.7 224.5,359.2 226.0,359.7 227.5,360.2 229.0,360.7 230.5,361.2 232.0,361.8 233.5,362.3 235.0,362.8 236.5,363.3 238.0,363.8 239.5,364.3 241.0,364.9 242.5,365.4 244.0,366.0 245.5,366.6 247.0,366.3 248.5,365.5 250.0,364.8 251.5,364.0 253.0,363.3 254.5,362.6 256.0,361.8 257.5,361.1 259.0,360.4 260.5,360.0 262.0,359.7 263.5,359.4 265.0,359.1 266.5,358.8 268.0,358.5 269.5,358.2 271.0,357.9 272.5,357.5 274.0,357.2 275.5,357.0 277.0,356.8 278.5,356.6 280.0,357.0 281.5,357.7 283.0,358.4 284.5,359.0 286.0,359.7 287.5,360.4 289.0,361.1 290.5,361.8 292.0,362.5 293.5,363.2 295.0,363.9 296.5,364.6 298.0,365.4 299.5,366.1 301.0,366.8 302.5,367.6 304.0,368.3 305.5,369.1 307.0,369.8 308.5,370.5 310.0,371.3 311.5,372.0 313.0,372.8 314.5,373.5 316.0,374.1 317.5,374.7 319.0,375.2 320.5,375.8 322.0,376.3 323.5,376.8 325.0,377.4 326.5,377.9 328.0,378.5 329.5,379.0 331.0,379.6 332.5,380.2 334.0,380.9 335.5,381.5 337.0,382.1 338.5,382.7 340.0,383.8 341.5,385.2 343.0,385.6 344.5,385.6 346.0,385.5 347.5,385.5 349.0,385.5 350.5,385.4 352.0,385.4 353.5,385.4 355.0,385.3 356.5,385.3 358.0,385.3 359.5,385.2 361.0,385.2 362.5,385.1 364.0,385.1 365.5,385.1 367.0,385.0 368.5,385.0 370.0,384.9 371.5,384.9 373.0,384.9 374.5,384.8 376.0,384.8 377.5,384.7 379.0,384.7 380.5,384.7 382.0,384.6 383.5,384.6 385.0,384.5 386.5,384.5 388.0,384.5 389.5,384.4 391.0,384.4 392.5,384.3 394.0,384.3 395.5,384.3 397.0,384.8 398.5,385.6 400.0,386.4 401.5,386.9 403.0,386.9 404.5,386.9 406.0,387.0 407.5,387.0 409.0,387.0 410.5,387.0 412.0,387.0 413.5,387.0 415.0,387.0 416.5,387.0" stroke="#7d4f3c" stroke-width=".8" opacity="0.55"/><polyline points="46.0,341.2 47.5,341.2 49.0,341.4 50.5,341.6 52.0,341.8 53.5,342.0 55.0,342.2 56.5,342.4 58.0,342.6 59.5,342.8 61.0,343.0 62.5,343.2 64.0,343.4 65.5,343.6 67.0,343.8 68.5,344.0 70.0,344.2 71.5,344.4 73.0,344.6 74.5,344.8 76.0,345.0 77.5,345.2 79.0,345.4 80.5,345.6 82.0,345.8 83.5,346.0 85.0,346.2 86.5,346.4 88.0,346.6 89.5,346.8 91.0,346.9 92.5,347.0 94.0,347.2 95.5,347.3 97.0,347.4 98.5,347.6 100.0,347.7 101.5,347.9 103.0,348.0 104.5,348.1 106.0,348.3 107.5,348.4 109.0,348.5 110.5,348.7 112.0,348.8 113.5,348.9 115.0,349.1 116.5,349.2 118.0,349.4 119.5,349.5 121.0,349.6 122.5,349.8 124.0,349.9 125.5,350.0 127.0,349.8 128.5,349.5 130.0,349.1 131.5,348.7 133.0,348.3 134.5,347.9 136.0,347.5 137.5,346.1 139.0,344.6 140.5,343.2 142.0,341.8 143.5,340.3 145.0,338.9 146.5,337.5 148.0,336.0 149.5,336.0 151.0,335.9 152.5,335.9 154.0,335.8 155.5,335.8 157.0,335.7 158.5,335.6 160.0,335.6 161.5,335.5 163.0,335.5 164.5,335.4 166.0,335.4 167.5,335.3 169.0,335.3 170.5,335.2 172.0,335.1 173.5,337.9 175.0,340.7 176.5,343.5 178.0,344.8 179.5,345.5 181.0,346.2 182.5,346.9 184.0,347.6 185.5,348.3 187.0,349.0 188.5,349.7 190.0,350.2 191.5,350.7 193.0,351.2 194.5,351.7 196.0,352.2 197.5,352.7 199.0,353.3 200.5,353.8 202.0,354.3 203.5,354.8 205.0,355.3 206.5,355.8 208.0,356.3 209.5,356.8 211.0,357.2 212.5,357.7 214.0,358.2 215.5,358.7 217.0,359.2 218.5,359.7 220.0,360.2 221.5,360.7 223.0,361.1 224.5,361.6 226.0,362.1 227.5,362.6 229.0,363.1 230.5,363.6 232.0,364.1 233.5,364.6 235.0,365.1 236.5,365.5 238.0,366.0 239.5,366.5 241.0,367.2 242.5,367.9 244.0,368.6 245.5,369.4 247.0,369.1 248.5,368.3 250.0,367.6 251.5,366.8 253.0,366.1 254.5,365.4 256.0,364.6 257.5,363.9 259.0,363.1 260.5,362.8 262.0,362.5 263.5,362.2 265.0,361.9 266.5,361.6 268.0,361.3 269.5,361.0 271.0,360.7 272.5,360.4 274.0,360.1 275.5,359.8 277.0,359.5 278.5,359.2 280.0,359.6 281.5,360.3 283.0,361.0 284.5,361.7 286.0,362.4 287.5,363.1 289.0,363.8 290.5,364.5 292.0,365.2 293.5,365.9 295.0,366.6 296.5,367.4 298.0,368.1 299.5,368.9 301.0,369.6 302.5,370.4 304.0,371.1 305.5,371.9 307.0,372.6 308.5,373.3 310.0,374.1 311.5,374.8 313.0,375.6 314.5,376.3 316.0,376.9 317.5,377.5 319.0,378.0 320.5,378.5 322.0,379.0 323.5,379.5 325.0,380.1 326.5,380.6 328.0,381.1 329.5,381.6 331.0,382.1 332.5,382.8 334.0,383.4 335.5,384.1 337.0,384.8 338.5,385.4 340.0,386.6 341.5,388.1 343.0,388.5 344.5,388.5 346.0,388.4 347.5,388.4 349.0,388.3 350.5,388.3 352.0,388.2 353.5,388.2 355.0,388.1 356.5,388.1 358.0,388.0 359.5,388.0 361.0,387.9 362.5,387.9 364.0,387.8 365.5,387.7 367.0,387.7 368.5,387.6 370.0,387.6 371.5,387.5 373.0,387.5 374.5,387.4 376.0,387.4 377.5,387.3 379.0,387.3 380.5,387.2 382.0,387.2 383.5,387.1 385.0,387.0 386.5,387.0 388.0,386.9 389.5,386.9 391.0,386.8 392.5,386.8 394.0,386.7 395.5,386.7 397.0,387.2 398.5,388.1 400.0,389.0 401.5,389.6 403.0,389.6 404.5,389.6 406.0,389.6 407.5,389.6 409.0,389.6 410.5,389.6 412.0,389.6 413.5,389.6 415.0,389.6 416.5,389.6" stroke="#7d4f3c" stroke-width=".8" opacity="0.60"/></g><polyline points="86.0,347.9 87.5,348.1 89.0,348.3 90.5,348.4 92.0,348.6 93.5,348.7 95.0,348.8 96.5,349.0 98.0,349.1 99.5,349.3 101.0,349.4 102.5,349.5 104.0,349.7 105.5,349.8 107.0,349.9 108.5,350.1 110.0,350.2 111.5,350.4 113.0,350.5 114.5,350.6 116.0,350.8 117.5,350.9 119.0,351.1 120.5,351.2 122.0,351.3 123.5,351.5 125.0,351.6 126.5,351.6 128.0,351.2 129.5,350.8 131.0,350.4 132.5,350.1 134.0,349.7 135.5,349.3 137.0,348.2 138.5,346.8 140.0,345.4" fill="none" stroke="#76859a" stroke-width="0.9" opacity="1.00"/><polyline points="96.0,350.5 97.5,350.7 99.0,350.8 100.5,351.0 102.0,351.1 103.5,351.2 105.0,351.4 106.5,351.5 108.0,351.6 109.5,351.8 111.0,351.9 112.5,352.1 114.0,352.2 115.5,352.3 117.0,352.5 118.5,352.6 120.0,352.7 121.5,352.9 123.0,353.0 124.5,353.2 126.0,353.3 127.5,352.9 129.0,352.6 130.5,352.2 132.0,351.8 133.5,351.4 135.0,351.1 136.5,350.3 138.0,348.9" fill="none" stroke="#76859a" stroke-width="0.8" opacity="0.85"/><polyline points="104.0,352.7 105.5,352.8 107.0,352.9 108.5,353.1 110.0,353.2 111.5,353.4 113.0,353.5 114.5,353.6 116.0,353.8 117.5,353.9 119.0,354.1 120.5,354.2 122.0,354.3 123.5,354.5 125.0,354.6 126.5,354.6 128.0,354.2 129.5,353.8 131.0,353.4" fill="none" stroke="#76859a" stroke-width="0.6" opacity="0.60"/><polyline points="178.0,346.9 179.5,347.5 181.0,348.2 182.5,348.9 184.0,349.6 185.5,350.3 187.0,350.9 188.5,351.6 190.0,352.1 191.5,352.6 193.0,353.1 194.5,353.6 196.0,354.1 197.5,354.6 199.0,355.1 200.5,355.6 202.0,356.1 203.5,356.6 205.0,357.1 206.5,357.6 208.0,358.0 209.5,358.5 211.0,359.0 212.5,359.5 214.0,360.0 215.5,360.5 217.0,361.0 218.5,361.4 220.0,361.9 221.5,362.4 223.0,362.9 224.5,363.4 226.0,363.9 227.5,364.4 229.0,364.8 230.5,365.3 232.0,365.8 233.5,366.3 235.0,366.8 236.5,367.3 238.0,367.8 239.5,368.2 241.0,368.9 242.5,369.6 244.0,370.4 245.5,371.1 247.0,370.9 248.5,370.1 250.0,369.4" fill="none" stroke="#76859a" stroke-width="0.9" opacity="1.00"/><polyline points="196.0,355.7 197.5,356.2 199.0,356.7 200.5,357.2 202.0,357.7 203.5,358.2 205.0,358.7 206.5,359.2 208.0,359.6 209.5,360.1 211.0,360.6 212.5,361.1 214.0,361.6 215.5,362.1 217.0,362.6 218.5,363.0 220.0,363.5 221.5,364.0 223.0,364.5 224.5,365.0 226.0,365.5 227.5,366.0 229.0,366.4 230.5,366.9 232.0,367.4 233.5,367.9 235.0,368.4 236.5,368.9 238.0,369.4 239.5,369.8 241.0,370.5 242.5,371.2 244.0,372.0 245.5,372.8 247.0,372.5 248.5,371.8 250.0,371.0 251.5,370.2 253.0,369.5 254.5,368.8 256.0,368.0 257.5,367.2 259.0,366.5 260.5,366.2 262.0,365.9" fill="none" stroke="#76859a" stroke-width="0.8" opacity="0.85"/><polyline points="232.0,369.2 233.5,369.7 235.0,370.2 236.5,370.7 238.0,371.2 239.5,371.6 241.0,372.3 242.5,373.1 244.0,373.8 245.5,374.6 247.0,374.3 248.5,373.6 250.0,372.8 251.5,372.1 253.0,371.3 254.5,370.6 256.0,369.8 257.5,369.1 259.0,368.3 260.5,368.0 262.0,367.7 263.5,367.4 265.0,367.1 266.5,366.8 268.0,366.5 269.5,366.2 271.0,365.9 272.5,365.6 274.0,365.3 275.5,365.0 277.0,364.7 278.5,364.4 280.0,364.8 281.5,365.5" fill="none" stroke="#76859a" stroke-width="0.7" opacity="0.70"/><polyline points="236.0,372.2 237.5,372.7 239.0,373.2 240.5,373.8 242.0,374.5 243.5,375.2 245.0,376.0 246.5,376.2 248.0,375.5 249.5,374.8 251.0,374.0 252.5,373.2 254.0,372.5 255.5,371.8 257.0,371.0 258.5,370.2 260.0,369.8 261.5,369.5" fill="none" stroke="#76859a" stroke-width="0.6" opacity="0.50"/><polyline points="280.0,361.4 281.5,362.1 283.0,362.8 284.5,363.5 286.0,364.2 287.5,364.9 289.0,365.6 290.5,366.3 292.0,367.0 293.5,367.7 295.0,368.4 296.5,369.1 298.0,369.9 299.5,370.6 301.0,371.4 302.5,372.1 304.0,372.9 305.5,373.6 307.0,374.4 308.5,375.1 310.0,375.9 311.5,376.6 313.0,377.4 314.5,378.1 316.0,378.7 317.5,379.3 319.0,379.8 320.5,380.3 322.0,380.8 323.5,381.3 325.0,381.8 326.5,382.4 328.0,382.9 329.5,383.4 331.0,383.9 332.5,384.6 334.0,385.2 335.5,385.9 337.0,386.5 338.5,387.2 340.0,388.4" fill="none" stroke="#76859a" stroke-width="0.9" opacity="1.00"/><polyline points="292.0,368.6 293.5,369.3 295.0,370.0 296.5,370.8 298.0,371.5 299.5,372.2 301.0,373.0 302.5,373.8 304.0,374.5 305.5,375.2 307.0,376.0 308.5,376.8 310.0,377.5 311.5,378.2 313.0,379.0 314.5,379.8 316.0,380.3 317.5,380.9 319.0,381.4 320.5,381.9 322.0,382.4 323.5,382.9 325.0,383.4 326.5,384.0 328.0,384.5 329.5,385.0 331.0,385.5 332.5,386.2 334.0,386.8 335.5,387.5 337.0,388.1 338.5,388.8 340.0,390.0" fill="none" stroke="#76859a" stroke-width="0.8" opacity="0.85"/><polyline points="300.0,374.1 301.5,374.9 303.0,375.6 304.5,376.4 306.0,377.1 307.5,377.9 309.0,378.6 310.5,379.4 312.0,380.1 313.5,380.9 315.0,381.6 316.5,382.1 318.0,382.6 319.5,383.1 321.0,383.7 322.5,384.2 324.0,384.7 325.5,385.2 327.0,385.7 328.5,386.2 330.0,386.8 331.5,387.3 333.0,388.0 334.5,388.6 336.0,389.3 337.5,389.9 339.0,390.6 340.5,392.1" fill="none" stroke="#76859a" stroke-width="0.6" opacity="0.60"/><polyline points="48.0,342.6 49.5,342.8 51.0,343.0 52.5,343.2 54.0,343.4 55.5,343.6 57.0,343.8 58.5,344.0 60.0,344.2" fill="none" stroke="#76859a" stroke-width="0.6" opacity="0.50"/><polygon points="333.0,474.0 333.0,433.0 335.0,429.5 340.0,427.5 360.0,423.5 392.5,423.5 394.0,412.0 397.0,408.0 402.0,405.0 410.0,402.5 414.0,401.0 414.0,474.0" fill="#ad6e50"/><defs><clipPath id="cl"><polygon points="333.0,474.0 333.0,433.0 335.0,429.5 340.0,427.5 360.0,423.5 392.5,423.5 394.0,412.0 397.0,408.0 402.0,405.0 410.0,402.5 414.0,401.0 414.0,474.0"/></clipPath></defs><g clip-path="url(#cl)" fill="none"><polyline points="354.0,474.0 376.0,451.0 414.0,451.0" stroke="#9d5d40" stroke-width="1.2" opacity=".85"/><polyline points="357.3,474.0 377.0,453.3 414.0,453.3" stroke="#b87c5e" stroke-width="1.2" opacity=".85"/><polyline points="360.5,474.0 377.9,455.6 414.0,455.6" stroke="#a26243" stroke-width="1.2" opacity=".85"/><polyline points="363.8,474.0 378.9,457.9 414.0,457.9" stroke="#bb8062" stroke-width="1.2" opacity=".85"/><polyline points="367.1,474.0 379.9,460.2 414.0,460.2" stroke="#9a5a3e" stroke-width="1.2" opacity=".85"/><polyline points="370.3,474.0 380.8,462.5 414.0,462.5" stroke="#b4775a" stroke-width="1.2" opacity=".85"/><polyline points="373.6,474.0 381.8,464.8 414.0,464.8" stroke="#a06042" stroke-width="1.2" opacity=".85"/><polyline points="376.9,474.0 382.8,467.1 414.0,467.1" stroke="#bc8265" stroke-width="1.2" opacity=".85"/><polyline points="380.1,474.0 383.7,469.4 414.0,469.4" stroke="#9e5e41" stroke-width="1.2" opacity=".85"/></g></svg>
<div class="a" style="left:414.0px;top:77.5px;width:7.5px;height:396.0px;background:#454547;"></div>
<div class="a" style="left:414.5px;top:264.0px;width:7.0px;height:24.0px;background:#4b4b4d;box-shadow:inset 0 0 0 1px #565658;"></div>
<div class="a" style="left:48.0px;top:473.5px;width:373.5px;height:10.0px;background:#454547;"></div>
<div class="a" style="left:222.0px;top:474.0px;width:18.0px;height:9.0px;background:#4c4c4e;box-shadow:inset 0 0 0 1px #565658;"></div>
<svg class="a" style="left:414.0px;top:78.0px;" width="7" height="8" viewBox="0 0 7 8"><path d="M1.5 5.5L3.5 3l2 2.5z" fill="#bbb"/></svg>
<svg class="a" style="left:414.0px;top:466.0px;" width="7" height="8" viewBox="0 0 7 8"><path d="M1.5 2.5L3.5 5l2-2.5z" fill="#bbb"/></svg>
<svg class="a" style="left:48.0px;top:474.0px;" width="8" height="9" viewBox="0 0 8 9"><path d="M5 2.5L2.8 4.5 5 6.5z" fill="#bbb"/></svg>
<svg class="a" style="left:406.0px;top:474.0px;" width="8" height="9" viewBox="0 0 8 9"><path d="M3 2.5L5.2 4.5 3 6.5z" fill="#bbb"/></svg>
<div class="a" style="left:42.0px;top:58.5px;width:6.0px;height:425.0px;background:#414143;"></div>
<div class="a" style="left:421.0px;top:58.5px;width:6.0px;height:425.0px;background:#424244;"></div>
<svg class="a" style="left:8.0px;top:40.0px;" width="9" height="11" viewBox="0 0 9 11"><path d="M.6 .6h7.8v6.6l-3 3.2H.6z" fill="none" stroke="#dcdcdc" stroke-width="1.1"/><path d="M8.4 7.2H5.6v3.2" fill="none" stroke="#dcdcdc" stroke-width="1"/></svg>
<svg class="a" style="left:29.0px;top:40.0px;" width="11" height="10" viewBox="0 0 11 10"><path d="M.6 9.4V.6h3.6l1 1.6h5.2v7.2z" fill="none" stroke="#dcdcdc" stroke-width="1.1"/><path d="M.6 3.6h9.8" stroke="#dcdcdc" stroke-width="1"/><path d="M.6 .6h3.6l1 1.6H.6z" fill="#dcdcdc"/></svg>
<svg class="a" style="left:50.0px;top:40.0px;" width="11" height="11" viewBox="0 0 11 11"><path d="M.6 .6h8.2l1.6 1.6v8.2H.6z" fill="none" stroke="#dcdcdc" stroke-width="1.1"/><rect x="2.8" y=".6" width="4.8" height="3.2" fill="none" stroke="#dcdcdc" stroke-width="1"/><rect x="5.4" y="1" width="1.4" height="2.2" fill="#dcdcdc"/><rect x="2.6" y="6" width="5.8" height="4.4" fill="none" stroke="#dcdcdc" stroke-width="1"/></svg>
<svg class="a" style="left:74.5px;top:39.5px;" width="11" height="12" viewBox="0 0 11 12"><path d="M3.2 3.6A3.7 3.7 0 1 1 4.4 10.6" fill="none" stroke="#dcdcdc" stroke-width="1.5"/><path d="M1 1.6l4.2 .2-1.6 4z" fill="#dcdcdc"/></svg>
<svg class="a" style="left:95.5px;top:39.5px;" width="11" height="12" viewBox="0 0 11 12"><path d="M7.8 3.6A3.7 3.7 0 1 0 6.6 10.6" fill="none" stroke="#dcdcdc" stroke-width="1.5"/><path d="M10 1.6l-4.2 .2 1.6 4z" fill="#dcdcdc"/></svg>
<svg class="a" style="left:116.4px;top:36.7px;" width="18" height="17.5" viewBox="0 0 18 17.5"><defs><pattern id="ck" width="4" height="4" patternUnits="userSpaceOnUse"><rect width="4" height="4" fill="#d4d4d4"/><rect width="2" height="2" fill="#a8a8a8"/><rect x="2" y="2" width="2" height="2" fill="#a8a8a8"/></pattern><linearGradient id="gs"><stop offset="0" stop-color="#b0603a"/><stop offset=".3" stop-color="#b0603a" stop-opacity=".85"/><stop offset="1" stop-color="#b0603a" stop-opacity="0"/></linearGradient></defs><rect width="18" height="17.5" fill="url(#ck)"/><rect width="18" height="17.5" fill="url(#gs)"/></svg>
<div class="a" style="left:138.0px;top:36.7px;width:17.5px;height:17.5px;background:#7d7d7d;box-shadow:inset 0 0 0 1px #6a6a6a;"></div>
<svg class="a" style="left:162.0px;top:36.5px;" width="19" height="18" viewBox="0 0 19 18"><rect x=".5" y=".8" width="7.5" height="7.5" fill="#8a3a30"/><path d="M11 3.6h5.2v3.4" fill="none" stroke="#dcdcdc" stroke-width="1.2"/><path d="M9.6 3.6l2.6-2.2v4.4zM16.2 8.6l-2.2-2.6h4.4z" fill="#dcdcdc"/><rect x="1.8" y="10.5" width="5.6" height="5.6" fill="#000"/><rect x="5" y="13.4" width="4" height="3.6" fill="#fff"/><rect x="10.5" y="9.8" width="7.6" height="7.6" fill="#fff"/></svg>
<svg class="a" style="left:191.5px;top:38.5px;" width="12" height="14" viewBox="0 0 12 14"><path d="M.4 3.4c2-3 4-3 5.6-1s3.6 2 5.6-.6" fill="none" stroke="#dcdcdc" stroke-width="1.3"/><path d="M.4 6.6h11.2M.4 9.6h11.2M.4 12.6h11.2" stroke="#dcdcdc" stroke-width="1.5"/></svg>
<svg class="a" style="left:212.5px;top:36.2px;" width="17" height="17.5" viewBox="0 0 17 17.5"><rect width="17" height="17.5" fill="#dadada"/><path d="M14.500 .4l2.500 2.400-7.500 8.400-3.200 1.600 1.200-3.400z" fill="#3a3a3a"/><path d="M7.500 9.400l2 2-3.200 1.400z" fill="#777"/><path d="M4.600 14c3 2 8.400 1.400 12-2.600" fill="none" stroke="#0c0c0c" stroke-width="2.300"/></svg>
<div class="a" style="left:232.0px;top:34.5px;width:146.0px;height:21.0px;background:linear-gradient(180deg,#393939,#484848);box-shadow:inset 0 0 0 1px #3a3a3a;"></div>
<svg class="a" style="left:369.5px;top:43.5px;" width="6" height="4" viewBox="0 0 6 4"><path d="M0 .3h5.6L2.8 3.3z" fill="#aaa"/></svg>
<div class="a" style="left:380.5px;top:36.0px;width:1.0px;height:19.0px;background:#555;"></div>
<svg class="a" style="left:385.5px;top:39.0px;" width="15" height="13" viewBox="0 0 15 13"><path d="M7.6 .6l5.8 4-4.6 6-5.8-4z" fill="#f0f0f0"/><path d="M2.4 7.2l5.2 3.6-1 1.2H2.8L1 10.2z" fill="#ececec"/><path d="M2.6 12.2h10.4" stroke="#dcdcdc" stroke-width="1"/></svg>
<svg class="a" style="left:410.0px;top:38.5px;" width="14.4" height="14" viewBox="0 0 14.4 14"><rect width="14.4" height="14" fill="#8a8a8a"/><rect width="4.8" height="4.7" fill="#e2e2e2"/><rect x="9.6" width="4.8" height="4.7" fill="#e2e2e2"/><rect x="4.8" y="4.7" width="4.8" height="4.7" fill="#e2e2e2"/><rect y="9.4" width="4.8" height="4.6" fill="#e2e2e2"/><rect x="9.6" y="9.4" width="4.8" height="4.6" fill="#e2e2e2"/></svg>
<svg class="a" style="left:432.7px;top:37.5px;" width="15" height="15" viewBox="0 0 15 15"><g transform="translate(7.5 7.5)"><path d="M-5.5 0A5.5 5.5 0 0 1 2.75 -4.785" fill="none" stroke="#dcdcdc" stroke-width="1.5"/><path d="M5.5 0A5.5 5.5 0 0 1 -2.75 4.785" fill="none" stroke="#dcdcdc" stroke-width="1.5"/><path d="M2.25 -6.985l2.6 2.8 l-3.4 0.8z" fill="#dcdcdc"/><path d="M-2.25 6.985l-2.6 -2.8 l3.4 -0.8z" fill="#dcdcdc"/></g></svg>
<svg class="a" style="left:456.0px;top:43.5px;" width="6" height="4" viewBox="0 0 6 4"><path d="M0 .3h6L3 3.3z" fill="#aaa"/></svg>
<div class="a" style="left:466.8px;top:36.0px;width:94.0px;height:18.7px;background:#5681ac;"></div>
<svg class="a" style="left:562.5px;top:38.0px;" width="6" height="15" viewBox="0 0 6 15"><path d="M.5 4.6h5L3 1.6z" fill="#777"/><path d="M.5 9.6h5L3 12.6z" fill="#ccc"/></svg>
<div class="a" style="left:5.0px;top:57.0px;width:37.5px;height:7.5px;background:#414141;box-shadow:inset 0 0 0 1px #4f4f4f;"></div>
<svg class="a" style="left:3.0px;top:69.2px;" width="11" height="11" viewBox="0 0 11 11"><path d="M2.4 .8v8.4l2.2-2 1.6 3.4 1.4-.6-1.6-3.4 3-.2z" fill="#dcdcdc"/></svg>
<svg class="a" style="left:3.0px;top:85.2px;" width="11" height="11" viewBox="0 0 11 11"><path d="M1.2 10V1.6h8.4" fill="none" stroke="#dcdcdc" stroke-width="1.2"/><path d="M4 4.4v5.8l5-3z" fill="#dcdcdc"/></svg>
<svg class="a" style="left:19.0px;top:85.2px;" width="11" height="11" viewBox="0 0 11 11"><path d="M10 .8L5 3.2 1.4 8.8l.8.8 5.6-3.6L10 .8zM1 10.2l2.4-2.6" fill="#dcdcdc"/><circle cx="6" cy="5" r=".9" fill="#444"/></svg>
<svg class="a" style="left:3.0px;top:100.9px;" width="11" height="11" viewBox="0 0 11 11"><rect x=".8" y="1" width="9.2" height="4" fill="#dcdcdc"/><rect x=".8" y="6" width="4" height="4" fill="#dcdcdc"/><rect x="6" y="6" width="4" height="4" fill="#dcdcdc"/></svg>
<svg class="a" style="left:3.0px;top:120.9px;" width="11" height="11" viewBox="0 0 11 11"><path d="M10.2 .6L5.4 4.4l1.4 1.4L10.6 1z" fill="#dcdcdc"/><path d="M4.6 5.2C2.6 5 2.4 8 .6 9.4c2.400 1.400 5.600 0 5.400-2.800z" fill="#dcdcdc"/></svg>
<svg class="a" style="left:19.0px;top:120.9px;" width="11" height="11" viewBox="0 0 11 11"><path d="M1 10L10 1" fill="none" stroke="#dcdcdc" stroke-width="1.2"/></svg>
<svg class="a" style="left:3.0px;top:136.5px;" width="11" height="11" viewBox="0 0 11 11"><rect x="1.100" y="1.100" width="8.800" height="8.800" fill="none" stroke="#dcdcdc" stroke-width="1.2"/></svg>
<svg class="a" style="left:19.0px;top:136.5px;" width="11" height="11" viewBox="0 0 11 11"><circle cx="5.5" cy="5.5" r="4.3" fill="none" stroke="#dcdcdc" stroke-width="1.2"/></svg>
<svg class="a" style="left:3.0px;top:152.3px;" width="11" height="11" viewBox="0 0 11 11"><path d="M4 1.200h6.200v4.600l-3.400 4H1V4.600z" fill="none" stroke="#dcdcdc" stroke-width="1.2"/></svg>
<div class="a" style="left:17.0px;top:150.5px;width:15.0px;height:14.5px;background:#5c82aa;"></div>
<svg class="a" style="left:19.0px;top:152.3px;" width="11" height="11" viewBox="0 0 11 11"><path d="M2 1.200l7.800 4.800-7.400 3.400 2.600-5.200" fill="none" stroke="#dcdcdc" stroke-width="1.2"/></svg>
<svg class="a" style="left:3.0px;top:168.2px;" width="11" height="11" viewBox="0 0 11 11"><path d="M1.600 10C2 5 3.400 2.400 5.500 2.400S9 5 9.400 10" fill="none" stroke="#dcdcdc" stroke-width="1.2"/><path d="M.4 2.400h10.200" stroke="#dcdcdc" stroke-width="1"/><rect x="0" y="1.200" width="2.200" height="2.200" fill="#dcdcdc"/><rect x="8.800" y="1.200" width="2.200" height="2.200" fill="#dcdcdc"/></svg>
<svg class="a" style="left:19.0px;top:168.2px;" width="11" height="11" viewBox="0 0 11 11"><path d="M.8 4.400C3 1 8 .6 9.800 2.600 6.600 2.800 6 5 6.400 10.200" fill="none" stroke="#dcdcdc" stroke-width="1.2"/><path d="M7.600 .6l3 2-3 2z" fill="#dcdcdc"/></svg>
<svg class="a" style="left:3.0px;top:184.2px;" width="11" height="11" viewBox="0 0 11 11"><path d="M1.400 1.600c4-.8 8.400.2 8.400 3S5 8.400 1 10.200" fill="none" stroke="#dcdcdc" stroke-width="1.2"/></svg>
<svg class="a" style="left:19.0px;top:184.2px;" width="11" height="11" viewBox="0 0 11 11"><path d="M10.400 .6L6 4l1.200 1.200z" fill="#dcdcdc"/><path d="M5.400 4.600C4 4.600 4 6.400 2.800 7.400c1.800.8 3.800-.2 3.600-1.800zM8.600 5.200l1.600 2-2.600.2zM4.600 8.200l1.800 2.200-3 .2zM1 3.400l2.400.4L1.600 5.800z" fill="#dcdcdc"/></svg>
<svg class="a" style="left:3.0px;top:203.5px;" width="11" height="11" viewBox="0 0 11 11"><rect x="1.600" y="1.600" width="7.800" height="7.800" fill="none" stroke="#dcdcdc" stroke-width="1.2"/><rect x=".2" y=".2" width="2.800" height="2.800" fill="#dcdcdc"/><rect x="8" y=".2" width="2.800" height="2.800" fill="#dcdcdc"/><rect x=".2" y="8" width="2.800" height="2.800" fill="#dcdcdc"/><rect x="8" y="8" width="2.800" height="2.800" fill="#dcdcdc"/></svg>
<svg class="a" style="left:19.0px;top:203.5px;" width="11" height="11" viewBox="0 0 11 11"><path d="M5.500 .2l2 2.400h-1.400v2.300h2.300V3.500l2.400 2-2.400 2V6.100H6.100v2.300h1.400l-2 2.400-2-2.400h1.400V6.100H2.600v1.400L.2 5.500l2.400-2v1.400h2.300V2.600H3.500z" fill="#dcdcdc"/></svg>
<svg class="a" style="left:3.0px;top:219.5px;" width="11" height="11" viewBox="0 0 11 11"><path d="M2.800 .2v8h8M.2 2.800h8v8" fill="none" stroke="#dcdcdc" stroke-width="1.2"/></svg>
<svg class="a" style="left:3.0px;top:238.9px;" width="11" height="11" viewBox="0 0 11 11"><defs><linearGradient id="tg"><stop offset="0" stop-color="#6a6a6a"/><stop offset="1" stop-color="#f0f0f0"/></linearGradient></defs><rect x=".8" y=".8" width="9.400" height="9.400" fill="url(#tg)" stroke="#dcdcdc" stroke-width="1"/></svg>
<svg class="a" style="left:19.0px;top:238.9px;" width="11" height="11" viewBox="0 0 11 11"><path d="M8.600 .4c1-.6 2.600 1 2 2L8.800 4.200l.6.600-1 1-.6-.6-4.600 4.600-2 .6-.6-.6.600-2 4.600-4.600-.6-.6 1-1 .6.600z" fill="#dcdcdc"/><path d="M2.400 7.800l3.600-3.600 .8.800-3.600 3.600z" fill="#444"/></svg>
<svg class="a" style="left:3.0px;top:254.5px;" width="11" height="11" viewBox="0 0 11 11"><path d="M9.800 1.200L5.800 5M1 1.600l2.600 2.200M5 .6v2.600M1.200 9.800l3-3M8.400 6.400l2 1.200M6.400 8.200l.8 2.400M.6 5.600h2.600" fill="none" stroke="#dcdcdc" stroke-width="1.2"/></svg>
<svg class="a" style="left:19.0px;top:254.5px;" width="11" height="11" viewBox="0 0 11 11"><path d="M1.600 1.600l7.800 7.800M9.400 1.600L1.600 9.400" stroke="#dcdcdc" stroke-width="2.200" fill="none"/><circle cx="5.500" cy="5.500" r=".9" fill="#444"/></svg>
<svg class="a" style="left:3.0px;top:270.5px;" width="11" height="11" viewBox="0 0 11 11"><path d="M4.600 .8l5 5-4 3.600L1 5z" fill="#dcdcdc"/><path d="M9.200 6.600c.6 1.400 1.600 2 1.400 3.200-.2 1-2 1-2.200 0-.2-1.200.4-1.800.8-3.200z" fill="#dcdcdc"/><path d="M1 5l3.600-4.200" stroke="#444" stroke-width=".8"/></svg>
<svg class="a" style="left:19.0px;top:270.5px;" width="11" height="11" viewBox="0 0 11 11"><circle cx="5.500" cy="5.500" r="4.600" fill="none" stroke="#dcdcdc" stroke-width="1.1" stroke-dasharray="1.6 1.1"/><path d="M3.400 4.200l2.200-1.600 2.200 2.200-2.400 2.600z M7.400 6.600c.4.600.8 1 .6 1.600h-1.200c-.2-.6.200-1 .6-1.600z" fill="#dcdcdc"/></svg>
<svg class="a" style="left:3.0px;top:290.2px;" width="11" height="11" viewBox="0 0 11 11"><path d="M1 1l9 9M10 1l-9 9" fill="none" stroke="#dcdcdc" stroke-width="1.2"/><rect x="3.200" y="3.200" width="4.600" height="4.600" fill="#444" stroke="#dcdcdc" stroke-width="1"/><rect x="0" y="0" width="2.400" height="2.400" fill="#dcdcdc"/><rect x="8.600" y="0" width="2.400" height="2.400" fill="#dcdcdc"/><rect x="0" y="8.600" width="2.400" height="2.400" fill="#dcdcdc"/><rect x="8.600" y="8.600" width="2.400" height="2.400" fill="#dcdcdc"/></svg>
<svg class="a" style="left:19.0px;top:290.2px;" width="11" height="11" viewBox="0 0 11 11"><path d="M.8 10L9.600 1.400V10z" fill="none" stroke="#dcdcdc" stroke-width="1.2"/><path d="M4 7.200c1.200.6 1.600 1.600 1.600 2.800" fill="none" stroke="#dcdcdc" stroke-width="1.2"/></svg>
<svg class="a" style="left:3.0px;top:305.5px;" width="11" height="11" viewBox="0 0 11 11"><path d="M6.400 .6l4 4-1.200.4-1.600 1.600.2 2.600-1 1-2.400-2.400L1 11.200l-.6-.6 3.400-3.400L1.400 4.800l1-1 2.600.2 1.600-1.600z" fill="#dcdcdc"/></svg>
<svg class="a" style="left:3.0px;top:325.9px;" width="11" height="11" viewBox="0 0 11 11"><rect x="1.100" y="1.100" width="8.800" height="8.800" fill="none" stroke="#dcdcdc" stroke-width="1.1" stroke-dasharray="1.6 1.1"/></svg>
<svg class="a" style="left:19.0px;top:325.9px;" width="11" height="11" viewBox="0 0 11 11"><circle cx="5.500" cy="5.500" r="4.400" fill="none" stroke="#dcdcdc" stroke-width="1.1" stroke-dasharray="1.6 1.1"/></svg>
<svg class="a" style="left:3.0px;top:341.8px;" width="11" height="11" viewBox="0 0 11 11"><path d="M4 1.200h6.200v4.600l-3.400 4H1V4.600z" fill="none" stroke="#dcdcdc" stroke-width="1.1" stroke-dasharray="1.6 1.1"/></svg>
<svg class="a" style="left:19.0px;top:341.8px;" width="11" height="11" viewBox="0 0 11 11"><path d="M1.400 3.600C2 .6 7 .2 8.800 2.200s1.600 5-.2 6.800" fill="none" stroke="#dcdcdc" stroke-width="1.1" stroke-dasharray="1.6 1.1"/><path d="M3 5.200c1-1.200 3-1 3.400.4s-.4 2.800-1.400 3.600" fill="none" stroke="#dcdcdc" stroke-width="1.2"/></svg>
<svg class="a" style="left:3.0px;top:357.5px;" width="11" height="11" viewBox="0 0 11 11"><path d="M5 4.800l5.400 5.400" stroke="#dcdcdc" stroke-width="1.800"/><path d="M3.600 .2l.6 2.200 2-1.200-1 2 2.200.4-2.200.8 1 2-2-1.200-.6 2.400-.6-2.400-2 1.200 1.200-2L0 3.600l2.200-.4-1.200-2 2 1.200z" fill="#dcdcdc"/></svg>
<svg class="a" style="left:19.0px;top:357.5px;" width="11" height="11" viewBox="0 0 11 11"><rect x="1" y="1.800" width="8.200" height="8.200" fill="none" stroke="#dcdcdc" stroke-width="1.1" stroke-dasharray="1.6 1.1"/><path d="M9.600 .4c.8-.4 1.600.4 1.200 1.200L9.400 3l.4.400-.8.800-.4-.4L5 7.400l-1.600.4.400-1.600L7.400 2.600 7 2.200l.8-.8.400.4z" fill="#dcdcdc"/></svg>
<svg class="a" style="left:3.0px;top:373.5px;" width="11" height="11" viewBox="0 0 11 11"><path d="M1.400 2.800h8.200v5c0 1.600-1.600 2.400-4.100 2.400S1.400 9.400 1.400 7.800z" fill="none" stroke="#dcdcdc" stroke-width="1.1" stroke-dasharray="1.6 1.1"/><rect x="0" y=".8" width="2.600" height="2.600" fill="#dcdcdc"/><rect x="8.400" y=".8" width="2.600" height="2.600" fill="#dcdcdc"/></svg>
<svg class="a" style="left:19.0px;top:373.5px;" width="11" height="11" viewBox="0 0 11 11"><rect x="1" y="1" width="9" height="9" fill="none" stroke="#dcdcdc" stroke-width="1.1" stroke-dasharray="1.6 1.1"/><path d="M3 8.400C2.400 5 4.400 2.600 7.400 3c1.600.4 1.400 2.400 0 2.800L4.600 8.400" fill="none" stroke="#dcdcdc" stroke-width="1.2"/></svg>
<svg class="a" style="left:3.0px;top:393.2px;" width="11" height="11" viewBox="0 0 11 11"><circle cx="4" cy="4" r="3" fill="none" stroke="#dcdcdc" stroke-width="1.2"/><path d="M6.200 6.200l4.200 4.200" stroke="#dcdcdc" stroke-width="1.800"/></svg>
<svg class="a" style="left:19.0px;top:393.2px;" width="11" height="11" viewBox="0 0 11 11"><path d="M1.800 10.600V5.400L2.600 2.200h1L3.800 4.600 4.200 .8h1.200l.2 3.800L6 .6h1.200L7.400 4.600 8 1.400h1.100l.1 4V10.600z" fill="#dcdcdc"/></svg>
<svg class="a" style="left:42.0px;top:264.0px;" width="6" height="11" viewBox="0 0 6 11"><g fill="#666"><circle cx="1.500" cy="1" r=".5"/><circle cx="3" cy="1" r=".5"/><circle cx="4.500" cy="1" r=".5"/><circle cx="1.500" cy="3" r=".5"/><circle cx="3" cy="3" r=".5"/><circle cx="4.500" cy="3" r=".5"/><circle cx="1.500" cy="5" r=".5"/><circle cx="3" cy="5" r=".5"/><circle cx="4.500" cy="5" r=".5"/><circle cx="1.500" cy="7" r=".5"/><circle cx="3" cy="7" r=".5"/><circle cx="4.500" cy="7" r=".5"/><circle cx="1.500" cy="9" r=".5"/><circle cx="3" cy="9" r=".5"/><circle cx="4.500" cy="9" r=".5"/></g></svg>
<svg class="a" style="left:424.5px;top:264.0px;" width="3" height="13" viewBox="0 0 3 13"><g fill="#6a6a6a"><circle cx="1.5" cy="1" r=".55"/><circle cx="1.5" cy="3" r=".55"/><circle cx="1.5" cy="5" r=".55"/><circle cx="1.5" cy="7" r=".55"/><circle cx="1.5" cy="9" r=".55"/><circle cx="1.5" cy="11" r=".55"/></g></svg>
<div class="a" style="left:3.0px;top:483.5px;width:594.0px;height:16.5px;background:#454545;"></div>
<svg class="a" style="left:5.0px;top:488.0px;" width="9" height="9" viewBox="0 0 9 9"><rect x=".5" y=".5" width="8" height="8" fill="none" stroke="#dcdcdc" stroke-width="1"/><path d="M5.600 2.800c-2.400-.4-2.400 3.800 0 3.400" fill="none" stroke="#dcdcdc" stroke-width=".9"/><path d="M6.800 2.600v3.800" stroke="#dcdcdc" stroke-width=".8"/></svg>
<div class="a" style="left:286.5px;top:486.5px;width:1.0px;height:12.0px;background:#6a6a6a;"></div>
<div class="a" style="left:286.5px;top:486.5px;width:6.0px;height:1.0px;background:#5a5a5a;"></div>
<svg class="a" style="left:377.0px;top:485.5px;" width="16" height="15" viewBox="0 0 16 15"><ellipse cx="8" cy="7.500" rx="7.500" ry="7" fill="#363636"/><path d="M3.600 7.500h8.800" stroke="#eee" stroke-width="1"/><path d="M2.600 7.500l2.400-1.800v3.600zM13.400 7.500l-2.400-1.800v3.600z" fill="#eee"/></svg>
<div class="a" style="left:513.3px;top:492.3px;width:22.0px;height:1.4px;background:#5f8fc0;"></div>
<div class="a" style="left:540.0px;top:492.5px;width:25.0px;height:1.0px;background:#7a7a7a;"></div>
<div class="a" style="left:533.5px;top:488.5px;width:6.5px;height:9.0px;background:#666;box-shadow:inset 0 0 0 1px #7c7c7c;"></div>
<svg class="a" style="left:570.0px;top:487.5px;" width="12" height="11" viewBox="0 0 12 11"><rect x=".6" y=".6" width="10.800" height="7" fill="none" stroke="#dcdcdc" stroke-width="1.100"/><path d="M6 7.600v2.200M3 10.200h6" stroke="#dcdcdc" stroke-width="1.100"/><path d="M6 2.400v3.400M4.300 4.100h3.400" stroke="#dcdcdc" stroke-width=".8"/></svg>
<div class="a" style="left:428.0px;top:58.5px;width:50.5px;height:15.0px;background:#484848;box-shadow:inset 0 0 0 1px #545454;border-radius:1px 1px 0 0;"></div>
<div class="a" style="left:479.5px;top:59.5px;width:61.5px;height:13.5px;background:#3e3e3e;box-shadow:inset 0 0 0 1px #505050;"></div>
<svg class="a" style="left:427.8px;top:73.7px;" width="11" height="11" viewBox="0 0 11 11"><circle cx="5.500" cy="5.500" r="4.900" fill="none" stroke="#dcdcdc" stroke-width="1.100"/><rect x="3" y="5" width="5" height="3" fill="#dcdcdc"/><path d="M4 5V4a1.500 1.500 0 0 1 3 0" fill="none" stroke="#dcdcdc" stroke-width=".9"/></svg>
<svg class="a" style="left:573.5px;top:75.5px;" width="10" height="9.5" viewBox="0 0 10 9.5"><rect x="3" y=".5" width="6" height="5.500" fill="none" stroke="#dcdcdc" stroke-width="1"/><rect x=".5" y="3.500" width="6" height="5.500" fill="#464646" stroke="#dcdcdc" stroke-width="1"/></svg>
<svg class="a" style="left:589.5px;top:76.5px;" width="7" height="7" viewBox="0 0 7 7"><path d="M.4 .4l6.200 6.200m0-6.200L.4 6.600" stroke="#dcdcdc" stroke-width="1.100"/></svg>
<svg class="a" style="left:432.0px;top:89.0px;" width="11" height="11" viewBox="0 0 11 11"><rect x=".6" y=".6" width="9.800" height="9.800" fill="none" stroke="#dcdcdc" stroke-width="1.100"/><path d="M.6 2.600h9.800" stroke="#dcdcdc" stroke-width="1"/><path d="M2.400 4.600h1.400M2.400 6.400h1.400M2.400 8.200h1.400M4.800 4.600h4M4.800 6.400h4M4.800 8.200h4" stroke="#dcdcdc" stroke-width="1"/></svg>
<svg class="a" style="left:589.2px;top:86.0px;" width="9" height="9" viewBox="0 0 9 9"><circle cx="4.500" cy="4.500" r="3.700" fill="none" stroke="#dcdcdc" stroke-width="1.200"/><path d="M1.900 1.900l5.200 5.200" stroke="#dcdcdc" stroke-width="1.200"/></svg>
<div class="a" style="left:427.5px;top:117.5px;width:160.5px;height:14.8px;background:linear-gradient(90deg,#7a2f3a 0,#8a3a30 20%,#8a4a2a 50%,#7a5a30 75%,#66683a 100%);opacity:.9;-webkit-mask-image:linear-gradient(180deg,transparent 0,rgba(0,0,0,.35) 45%,#000 62%);mask-image:linear-gradient(180deg,transparent 0,rgba(0,0,0,.35) 45%,#000 62%);"></div>
<div class="a" style="left:427.5px;top:132.3px;width:160.5px;height:7.3px;background:linear-gradient(90deg,#050302 0,#3a1808 25%,#8a3510 55%,#e8540c 100%);"></div>
<div class="a" style="left:427.5px;top:139.6px;width:160.5px;height:7.4px;background:linear-gradient(90deg,#4a1a08 0,#8a4a30 30%,#c8a090 65%,#ffffff 100%);"></div>
<div class="a" style="left:487.6px;top:84.3px;width:40px;height:40px;border-radius:50%;background:conic-gradient(from 0deg,#7ee000,#00e070 14%,#00d8e8 28%,#0060ff 40%,#5a00ff 50%,#c000e0 60%,#ff0080 72%,#ff1a1a 80%,#ff9000 88%,#e8e000 95%,#7ee000);"></div>
<div class="a" style="left:492.600px;top:89.300px;width:30px;height:30px;border-radius:50%;background:#464646;"></div>
<svg class="a" style="left:493.0px;top:88.0px;" width="30" height="26" viewBox="0 0 30 26"><defs><linearGradient id="tr1" x1="0" y1="1" x2="1" y2="1"><stop offset="0" stop-color="#fff"/><stop offset="1" stop-color="#e8540c"/></linearGradient><linearGradient id="tr2" x1=".5" y1="0" x2=".5" y2="1"><stop offset="0" stop-color="#000"/><stop offset=".25" stop-color="#000" stop-opacity=".8"/><stop offset="1" stop-color="#000" stop-opacity="0"/></linearGradient></defs><path d="M15 1.200L2 24h26z" fill="url(#tr1)"/><path d="M15 1.200L2 24h26z" fill="url(#tr2)"/><circle cx="15.600" cy="10.600" r="2.300" fill="none" stroke="#eee" stroke-width="1"/><circle cx="15.600" cy="10.600" r="1.300" fill="none" stroke="#222" stroke-width=".6"/></svg>
<div class="a" style="left:504.0px;top:125.0px;width:1.0px;height:22.0px;background:#e0cfc4;"></div>
<div class="a" style="left:511.2px;top:125.0px;width:1.0px;height:22.0px;background:#e0cfc4;"></div>
<div class="a" style="left:588.0px;top:96.0px;width:10.0px;height:10.0px;background:#9c5a3c;"></div>
<div class="a" style="left:588.0px;top:106.0px;width:10.0px;height:10.0px;background:#d3a891;"></div>
<div class="a" style="left:588.0px;top:116.0px;width:10.0px;height:10.5px;background:#bf8465;"></div>
<div class="a" style="left:588.0px;top:126.5px;width:10.0px;height:21.0px;background:#000;"></div>
<div class="a" style="left:427.5px;top:147.0px;width:170.0px;height:12.5px;background:#3f3f3f;"></div>
<svg class="a" style="left:426.9px;top:148.6px;" width="11.2" height="11.2" viewBox="0 0 11.2 11.2"><g transform="translate(5.6 5.6)"><path d="M-3.6 0A3.6 3.6 0 0 1 1.8 -3.132" fill="none" stroke="#dcdcdc" stroke-width="1.2"/><path d="M3.6 0A3.6 3.6 0 0 1 -1.8 3.132" fill="none" stroke="#dcdcdc" stroke-width="1.2"/><path d="M1.3 -5.332l2.6 2.8 l-3.4 0.8z" fill="#dcdcdc"/><path d="M-1.3 5.332l-2.6 -2.8 l3.4 -0.8z" fill="#dcdcdc"/></g></svg>
<svg class="a" style="left:507.0px;top:160.6px;" width="14" height="2" viewBox="0 0 14 2"><g fill="#888"><circle cx="1" cy="1" r=".55"/><circle cx="3" cy="1" r=".55"/><circle cx="5" cy="1" r=".55"/><circle cx="7" cy="1" r=".55"/><circle cx="9" cy="1" r=".55"/><circle cx="11" cy="1" r=".55"/><circle cx="13" cy="1" r=".55"/></g></svg>
<svg class="a" style="left:427.8px;top:163.7px;" width="11" height="11" viewBox="0 0 11 11"><circle cx="5.500" cy="5.500" r="4.900" fill="none" stroke="#dcdcdc" stroke-width="1.100"/><rect x="3" y="5" width="5" height="3" fill="#dcdcdc"/><path d="M4 5V4a1.500 1.500 0 0 1 3 0" fill="none" stroke="#dcdcdc" stroke-width=".9"/></svg>
<svg class="a" style="left:573.5px;top:164.9px;" width="10" height="9.5" viewBox="0 0 10 9.5"><rect x="3" y=".5" width="6" height="5.500" fill="none" stroke="#dcdcdc" stroke-width="1"/><rect x=".5" y="3.500" width="6" height="5.500" fill="#464646" stroke="#dcdcdc" stroke-width="1"/></svg>
<svg class="a" style="left:589.5px;top:165.9px;" width="7" height="7" viewBox="0 0 7 7"><path d="M.4 .4l6.200 6.200m0-6.200L.4 6.600" stroke="#dcdcdc" stroke-width="1.100"/></svg>
<div class="a" style="left:428.0px;top:175.5px;width:147.6px;height:18.3px;background:linear-gradient(180deg,#3d3d3d,#434343);box-shadow:inset 0 0 0 1px #3a3a3a;"></div>
<svg class="a" style="left:566.6px;top:184.2px;" width="6" height="3.4" viewBox="0 0 6 3.4"><path d="M0 0h5.600L2.800 3z" fill="#aaa"/></svg>
<svg class="a" style="left:583.0px;top:179.3px;" width="13" height="15" viewBox="0 0 13 15"><path d="M.6 .6h9.400L6.400 5.400v5.600l-2.400-1.400V5.400z" fill="none" stroke="#dcdcdc" stroke-width="1.100"/><path d="M10.600 12.600h2.800l-1.400 1.600z" fill="#aaa"/></svg>
<div class="a" style="left:428.0px;top:197.6px;width:139.3px;height:18.0px;background:#5681ac;"></div>
<div class="a" style="left:567.3px;top:197.6px;width:8.3px;height:18.0px;background:#4b5f78;"></div>
<svg class="a" style="left:568.4px;top:200.0px;" width="6" height="14" viewBox="0 0 6 14"><path d="M.4 5h5.200L3 2.400z" fill="#8a6a6a"/><path d="M.4 10h5.200L3 12.600z" fill="#ddd"/></svg>
<svg class="a" style="left:584.3px;top:203.5px;" width="13" height="12" viewBox="0 0 13 12"><path d="M0 1h7.800M0 3.900h7.800M0 6.800h7.800" stroke="#eee" stroke-width="1.300"/><path d="M9.400 9.400h2.600l-1.300 1.500z" fill="#aaa"/></svg>
<div class="a" style="left:428.0px;top:217.5px;width:168.5px;height:72.3px;background:#353535;"></div>
<div class="a" style="left:456.7px;top:218.9px;width:139.8px;height:17.4px;background:#4f7aa6;"></div>
<svg class="a" style="left:430.0px;top:223.1px;" width="11" height="9" viewBox="0 0 11 9"><path d="M.6 4.500C2 1.400 9 1.400 10.400 4.500 9 7.600 2 7.600.6 4.500z" fill="none" stroke="#e8e8e8" stroke-width="1.200"/><ellipse cx="5.500" cy="3.900" rx="2.300" ry="1.700" fill="#e8e8e8"/><path d="M1.600 6.600C3.600 8.600 7.400 8.600 9.400 6.600" fill="none" stroke="#e8e8e8" stroke-width="1.100"/></svg>
<svg class="a" style="left:430.0px;top:240.7px;" width="11" height="9" viewBox="0 0 11 9"><path d="M.6 4.500C2 1.400 9 1.400 10.400 4.500 9 7.600 2 7.600.6 4.500z" fill="none" stroke="#4a4a4a" stroke-width="1.200"/><ellipse cx="5.500" cy="3.900" rx="2.300" ry="1.700" fill="#4a4a4a"/><path d="M1.600 6.600C3.600 8.600 7.400 8.600 9.400 6.600" fill="none" stroke="#4a4a4a" stroke-width="1.100"/></svg>
<svg class="a" style="left:430.0px;top:258.4px;" width="11" height="9" viewBox="0 0 11 9"><path d="M.6 4.500C2 1.400 9 1.400 10.400 4.500 9 7.600 2 7.600.6 4.500z" fill="none" stroke="#e8e8e8" stroke-width="1.200"/><ellipse cx="5.500" cy="3.900" rx="2.300" ry="1.700" fill="#e8e8e8"/><path d="M1.600 6.600C3.600 8.600 7.400 8.600 9.400 6.600" fill="none" stroke="#e8e8e8" stroke-width="1.100"/></svg>
<svg class="a" style="left:430.0px;top:276.0px;" width="11" height="9" viewBox="0 0 11 9"><path d="M.6 4.500C2 1.400 9 1.400 10.400 4.500 9 7.600 2 7.600.6 4.500z" fill="none" stroke="#e8e8e8" stroke-width="1.200"/><ellipse cx="5.500" cy="3.900" rx="2.300" ry="1.700" fill="#e8e8e8"/><path d="M1.600 6.600C3.600 8.600 7.400 8.600 9.400 6.600" fill="none" stroke="#e8e8e8" stroke-width="1.100"/></svg>
<svg class="a" style="left:446.5px;top:223.0px;" width="7" height="8" viewBox="0 0 7 8"><path d="M.8 1l2.600 6L6.200 .8" fill="none" stroke="#e8dca8" stroke-width="1.200"/></svg>
<div class="a" style="left:446.7px;top:241.7px;width:6.6px;height:7.0px;background:#2b2b2b;"></div>
<div class="a" style="left:446.7px;top:259.4px;width:6.6px;height:7.0px;background:#2b2b2b;"></div>
<div class="a" style="left:446.7px;top:277.0px;width:6.6px;height:7.0px;background:#2b2b2b;"></div>
<svg class="a" style="left:459.7px;top:225.6px;" width="14" height="4" viewBox="0 0 14 4"><rect x="0" y=".4" width="13.600" height="2.600" fill="#f4f4f4"/><path d="M1 1.700h11.600" stroke="#5a6a8a" stroke-width="1" stroke-dasharray="2.400 1"/></svg>
<div class="a" style="left:460.0px;top:244.3px;width:13.3px;height:1.8px;background:#8a8a8a;"></div>
<div class="a" style="left:459.7px;top:258.6px;width:13.6px;height:8.6px;background:#ffffff;"></div>
<div class="a" style="left:460.7px;top:259.6px;width:11.6px;height:6.6px;background:#6cc5f9;border-radius:1.500px;"></div>
<div class="a" style="left:459.7px;top:275.8px;width:13.6px;height:9.2px;background:#ffffff;"></div>
<svg class="a" style="left:478.3px;top:219.6px;" width="7" height="8" viewBox="0 0 7 8"><path d="M.4 1.200h5.400v4.200c0 1.400-1.400 2-2.800 2" fill="none" stroke="#e4e4e4" stroke-width="1.100"/><path d="M3.600 5.400v3.600L1 7.200z" fill="#e4e4e4"/></svg>
<svg class="a" style="left:478.3px;top:237.2px;" width="7" height="8" viewBox="0 0 7 8"><path d="M.4 1.200h5.400v4.200c0 1.400-1.400 2-2.800 2" fill="none" stroke="#5a5a5a" stroke-width="1.100"/><path d="M3.600 5.400v3.600L1 7.200z" fill="#5a5a5a"/></svg>
<svg class="a" style="left:478.3px;top:253.9px;" width="7" height="9" viewBox="0 0 7 9"><path d="M1.400 1.800h4.200v5.400H1.400z" fill="none" stroke="#e8e8e8" stroke-width="1.200"/><rect x="0" y=".4" width="2.200" height="2.200" fill="#e8e8e8"/><rect x="4.800" y=".4" width="2.200" height="2.200" fill="#e8e8e8"/></svg>
<svg class="a" style="left:478.3px;top:272.5px;" width="7" height="8" viewBox="0 0 7 8"><path d="M.4 1.200h5.400v4.200c0 1.400-1.400 2-2.800 2" fill="none" stroke="#e4e4e4" stroke-width="1.100"/><path d="M3.600 5.400v3.600L1 7.200z" fill="#e4e4e4"/></svg>
<svg class="a" style="left:561.8px;top:223.6px;" width="9" height="9" viewBox="0 0 9 9"><rect x=".4" y="4" width="6.800" height="4.800" fill="#8ea6c0"/><path d="M4.600 4V2.400a2 2 0 0 1 4 0v1" fill="none" stroke="#8ea6c0" stroke-width="1.100"/></svg>
<svg class="a" style="left:585.7px;top:223.6px;" width="9" height="9" viewBox="0 0 9 9"><rect width="9" height="9" fill="#5d84ad"/><rect width="3" height="3" fill="#9fb8d2"/><rect x="6" width="3" height="3" fill="#9fb8d2"/><rect x="3" y="3" width="3" height="3" fill="#9fb8d2"/><rect y="6" width="3" height="3" fill="#9fb8d2"/><rect x="6" y="6" width="3" height="3" fill="#9fb8d2"/></svg>
<svg class="a" style="left:561.8px;top:241.2px;" width="9" height="9" viewBox="0 0 9 9"><rect x=".4" y="4" width="6.800" height="4.800" fill="#6e6e6e"/><path d="M4.600 4V2.400a2 2 0 0 1 4 0v1" fill="none" stroke="#6e6e6e" stroke-width="1.100"/></svg>
<svg class="a" style="left:585.7px;top:241.2px;" width="9" height="9" viewBox="0 0 9 9"><rect width="9" height="9" fill="#4a4a4a"/><rect width="3" height="3" fill="#707070"/><rect x="6" width="3" height="3" fill="#707070"/><rect x="3" y="3" width="3" height="3" fill="#707070"/><rect y="6" width="3" height="3" fill="#707070"/><rect x="6" y="6" width="3" height="3" fill="#707070"/></svg>
<svg class="a" style="left:561.8px;top:258.9px;" width="9" height="9" viewBox="0 0 9 9"><rect x=".4" y="4" width="6.800" height="4.800" fill="#6e6e6e"/><path d="M4.600 4V2.400a2 2 0 0 1 4 0v1" fill="none" stroke="#6e6e6e" stroke-width="1.100"/></svg>
<svg class="a" style="left:585.7px;top:258.9px;" width="9" height="9" viewBox="0 0 9 9"><path d="M0 .6A8.400 8.400 0 0 1 8.400 9H0z" fill="#8a8a8a" stroke="#eee" stroke-width="1.200"/></svg>
<svg class="a" style="left:561.8px;top:276.5px;" width="9" height="9" viewBox="0 0 9 9"><rect x=".4" y="3.800" width="8.200" height="5" fill="#f2f2f2"/><path d="M2.200 3.800V2.600a2.300 2.300 0 0 1 4.600 0v1.200" fill="none" stroke="#f2f2f2" stroke-width="1.200"/></svg>
<svg class="a" style="left:585.7px;top:276.5px;" width="9" height="9" viewBox="0 0 9 9"><rect width="9" height="9" fill="#4a4a4a"/><rect width="3" height="3" fill="#707070"/><rect x="6" width="3" height="3" fill="#707070"/><rect x="3" y="3" width="3" height="3" fill="#707070"/><rect y="6" width="3" height="3" fill="#707070"/><rect x="6" y="6" width="3" height="3" fill="#707070"/></svg>
<svg class="a" style="left:431.4px;top:295.0px;" width="12" height="12" viewBox="0 0 12 12"><path d="M6 0v12M0 6h12" stroke="#dcdcdc" stroke-width="1.200"/></svg>
<svg class="a" style="left:448.5px;top:299.6px;" width="5" height="3" viewBox="0 0 5 3"><path d="M0 0h4.600L2.300 2.600z" fill="#999"/></svg>
<svg class="a" style="left:460.0px;top:294.5px;" width="12" height="12" viewBox="0 0 12 12"><rect x="3" y=".6" width="8.400" height="8.400" fill="none" stroke="#dcdcdc" stroke-width="1.100"/><rect x=".6" y="3" width="8.400" height="8.400" fill="#444" stroke="#dcdcdc" stroke-width="1.100"/></svg>
<svg class="a" style="left:481.0px;top:297.0px;" width="13" height="8" viewBox="0 0 13 8"><path d="M.8 .8l5.700 5.800L12.200 .8" fill="none" stroke="#dcdcdc" stroke-width="1.300"/></svg>
<svg class="a" style="left:502.0px;top:297.0px;" width="13" height="8" viewBox="0 0 13 8"><path d="M.8 7l5.700-5.800L12.200 7" fill="none" stroke="#dcdcdc" stroke-width="1.300"/></svg>
<svg class="a" style="left:523.5px;top:295.5px;" width="12" height="11" viewBox="0 0 12 11"><path d="M0 1.800h12M0 5.500h12M0 9.200h12" stroke="#dcdcdc" stroke-width="1.100"/><rect x="7" y=".4" width="2" height="2.800" fill="#dcdcdc"/><rect x="2.600" y="4.100" width="2" height="2.800" fill="#dcdcdc"/><rect x="6.400" y="7.800" width="2" height="2.800" fill="#dcdcdc"/></svg>
<svg class="a" style="left:540.7px;top:299.6px;" width="5" height="3" viewBox="0 0 5 3"><path d="M0 0h4.600L2.300 2.600z" fill="#999"/></svg>
<svg class="a" style="left:583.3px;top:294.3px;" width="12" height="14" viewBox="0 0 12 14"><path d="M.4 2.600h10.800M4 2.400V.8h3.600v1.600" fill="none" stroke="#dcdcdc" stroke-width="1.200"/><path d="M1.400 4h8.800l-.6 9.200H2z" fill="#dcdcdc"/></svg>
<div class="a" style="left:507.0px;top:312.0px;width:13.5px;height:1.0px;background:#8a8a8a;"></div>
<svg class="a" style="left:427.7px;top:313.8px;" width="11" height="11" viewBox="0 0 11 11"><circle cx="5.500" cy="5.500" r="4.900" fill="none" stroke="#dcdcdc" stroke-width="1.100"/><rect x="3" y="5" width="5" height="3" fill="#dcdcdc"/><path d="M4 5V4a1.500 1.500 0 0 1 3 0" fill="none" stroke="#dcdcdc" stroke-width=".9"/></svg>
<svg class="a" style="left:573.5px;top:315.3px;" width="10" height="9.5" viewBox="0 0 10 9.5"><rect x="3" y=".5" width="6" height="5.500" fill="none" stroke="#dcdcdc" stroke-width="1"/><rect x=".5" y="3.500" width="6" height="5.500" fill="#464646" stroke="#dcdcdc" stroke-width="1"/></svg>
<svg class="a" style="left:589.5px;top:316.3px;" width="7" height="7" viewBox="0 0 7 7"><path d="M.4 .4l6.200 6.200m0-6.200L.4 6.600" stroke="#dcdcdc" stroke-width="1.100"/></svg>
<div class="a" style="left:428.0px;top:326.5px;width:104.5px;height:13.5px;background:linear-gradient(180deg,#3d3d3d,#434343);box-shadow:inset 0 0 0 1px #393939;"></div>
<svg class="a" style="left:523.0px;top:332.0px;" width="6" height="3.4" viewBox="0 0 6 3.4"><path d="M0 0h5.600L2.800 3z" fill="#aaa"/></svg>
<div class="a" style="left:534.0px;top:326.5px;width:32.5px;height:13.5px;background:#464646;box-shadow:inset 0 0 0 1px #555;"></div>
<svg class="a" style="left:537.0px;top:327.5px;" width="7" height="10" viewBox="0 0 7 10"><path d="M.6 .6h5.600v8.600L3.400 7 .6 9.200z" fill="none" stroke="#dcdcdc" stroke-width="1.200"/></svg>
<svg class="a" style="left:561.8px;top:336.0px;" width="4" height="3" viewBox="0 0 4 3"><path d="M0 0h3.600L1.800 2z" fill="#aaa"/></svg>
<svg class="a" style="left:570.8px;top:329.2px;" width="8" height="7" viewBox="0 0 8 7"><path d="M0 .7h7.600M0 3.500h7.600M0 6.300h7.600" stroke="#eee" stroke-width="1.300"/></svg>
<svg class="a" style="left:585.0px;top:326.7px;" width="11" height="11" viewBox="0 0 11 11"><rect x=".6" y=".6" width="9.800" height="9.800" fill="none" stroke="#dcdcdc" stroke-width="1.100"/><path d="M5.500 .6v5" stroke="#dcdcdc" stroke-width="1.400"/></svg>
<div class="a" style="left:427.5px;top:341.0px;width:160.5px;height:126.4px;background:#2e2e2e;"></div>
<svg class="a" style="left:428.3px;top:341.7px;overflow:hidden;" width="38.5" height="38.4" viewBox="0 0 38.5 38.4"><rect width="38.5" height="38.4" fill="#d4d4d4"/><defs><pattern id="pkcc00" width="3.600" height="3.600" patternUnits="userSpaceOnUse" patternTransform="rotate(45)"><rect width="1.800" height="1.800" fill="#fff"/><rect x="1.800" y="1.800" width="1.800" height="1.800" fill="#fff"/><rect x="1.800" width="1.800" height="1.800" fill="#c4c4c4"/><rect y="1.800" width="1.800" height="1.800" fill="#c4c4c4"/></pattern></defs><path d="M5 26l7-6 18 10-3 7H10z" fill="url(#pkcc00)" opacity=".9"/><g transform="translate(14.500 21.500) rotate(-42)"><rect x="9" y="-8.500" width="36" height="17" fill="#27497f"/><rect x="9" y="-6" width="36" height="3.500" fill="#5a82bc"/><rect x="9" y="4" width="36" height="4.500" fill="#1c3864"/><rect x="-2" y="-8.500" width="12.500" height="17" rx="3" fill="#f6f6f6"/><rect x="-2" y="3.500" width="12.500" height="5" rx="2.500" fill="#bcc4ce"/></g></svg>
<svg class="a" style="left:468.0px;top:341.7px;overflow:hidden;" width="38.5" height="38.4" viewBox="0 0 38.5 38.4"><rect width="38.5" height="38.4" fill="#d4d4d4"/><path d="M10 30l4-3 16 0 -2 5-14 3z" fill="none" stroke="#fff" stroke-width="1.600" stroke-dasharray="1.600 1.400"/><g transform="translate(17 24) rotate(-42)"><rect x="3" y="-4.500" width="40" height="9" fill="#3554b8"/><rect x="3" y="-3" width="40" height="2.400" fill="#7f98e6"/><ellipse cx="3" cy="0" rx="2.600" ry="4.500" fill="#d8e4f4"/></g></svg>
<svg class="a" style="left:507.7px;top:341.7px;overflow:hidden;" width="38.5" height="38.4" viewBox="0 0 38.5 38.4"><rect width="38.5" height="38.4" fill="#d4d4d4"/><defs><pattern id="pkcc20" width="3.600" height="3.600" patternUnits="userSpaceOnUse" patternTransform="rotate(45)"><rect width="1.800" height="1.800" fill="#fff"/><rect x="1.800" y="1.800" width="1.800" height="1.800" fill="#fff"/><rect x="1.800" width="1.800" height="1.800" fill="#c4c4c4"/><rect y="1.800" width="1.800" height="1.800" fill="#c4c4c4"/></pattern></defs><path d="M5 27l5-3 20 0 2 5-5 6H11z" fill="url(#pkcc20)" opacity=".85"/><path d="M17 21C15 12 22 2 30 0h8.500v17C32 19 24 26 17 21z" fill="#7b828c"/><path d="M24 6c4-5 9-6 14.500-6v9C33 9 28 10 24 6z" fill="#9aa1ab"/></svg>
<svg class="a" style="left:547.4px;top:341.7px;overflow:hidden;" width="38.5" height="38.4" viewBox="0 0 38.5 38.4"><rect width="38.5" height="38.4" fill="#d4d4d4"/><defs><radialGradient id="rg1"><stop offset="0" stop-color="#1a1a1a"/><stop offset=".45" stop-color="#2c2c2c" stop-opacity=".85"/><stop offset="1" stop-color="#444" stop-opacity="0"/></radialGradient></defs><circle cx="9" cy="29" r="18" fill="url(#rg1)"/><g transform="translate(20 17) rotate(-40)"><path d="M0 0L7 -3V3z" fill="#8a8a8a"/><rect x="7" y="-3.200" width="5" height="6.400" fill="#f4f4f4"/><rect x="12" y="-3.800" width="4.500" height="7.600" fill="#1c1c1c"/><rect x="16.500" y="-3.200" width="22" height="6.400" fill="#ececec"/><rect x="16.500" y="1" width="22" height="2.200" fill="#9a9a9a"/></g></svg>
<svg class="a" style="left:428.3px;top:381.3px;overflow:hidden;" width="38.5" height="38.4" viewBox="0 0 38.5 38.4"><rect width="38.5" height="38.4" fill="#8fc1e4"/><path d="M12 31.500c5 2.500 13 1.500 21-3l5.500-.5V35c-8 2.500-21 3-26.500-3.500z" fill="#14265a"/><g transform="translate(14.500 23.500) rotate(-42)"><path d="M0 0L8 -3.500V3.500z" fill="#2a6a9a"/><rect x="8" y="-3.600" width="36" height="7.200" fill="#1c3665"/><rect x="8" y="-2.400" width="36" height="1.800" fill="#5079b5"/></g><g transform="translate(8.500 7.500) rotate(-42)"><rect x="-3.500" y="-1.600" width="7" height="3.200" rx="1" fill="none" stroke="#1c2c4c" stroke-width=".9"/></g></svg>
<svg class="a" style="left:468.0px;top:381.3px;overflow:hidden;" width="38.5" height="38.4" viewBox="0 0 38.5 38.4"><rect width="38.5" height="38.4" fill="#d4d4d4"/><defs><linearGradient id="lg2" x1="0" x2="1"><stop offset="0" stop-color="#e8e8e8"/><stop offset=".5" stop-color="#888"/><stop offset="1" stop-color="#3a3a3a"/></linearGradient></defs><path d="M10 27c4 5 16 5 28.500-1.500V31C28 36 14 36 10 27z" fill="url(#lg2)"/><g transform="translate(14 23) rotate(-42)"><path d="M0 0L9 -4.500V4.500z" fill="#222"/><rect x="9" y="-4.500" width="34" height="9" fill="#1d1d1d"/><rect x="9" y="-3" width="34" height="2" fill="#555"/></g></svg>
<svg class="a" style="left:507.7px;top:381.3px;overflow:hidden;" width="38.5" height="38.4" viewBox="0 0 38.5 38.4"><rect width="38.5" height="38.4" fill="#d4d4d4"/><defs><linearGradient id="lg3" x1="0" x2="1"><stop offset="0" stop-color="#aaa"/><stop offset=".6" stop-color="#666"/><stop offset="1" stop-color="#222"/></linearGradient></defs><path d="M9 28c3-3 7-2 10 0s10 2.500 19.500-1V32c-8 3-14 3-19 1s-7 0-10.500-5z" fill="url(#lg3)"/><path d="M14 24l8-2" stroke="#888" stroke-width="2"/><g transform="translate(16 21) rotate(-40)"><path d="M0 0L9 -3V3z" fill="#c8c8c8"/><rect x="9" y="-3.500" width="32" height="7" fill="#dcdcdc"/><rect x="9" y="1" width="32" height="2.500" fill="#8a8a8a"/><rect x="9" y="-3.500" width="32" height="1.500" fill="#fff"/></g></svg>
<svg class="a" style="left:547.4px;top:381.3px;overflow:hidden;" width="38.5" height="38.4" viewBox="0 0 38.5 38.4"><rect width="38.5" height="38.4" fill="#d4d4d4"/><path d="M10 29c3-4 7-3 10-1s10 2 18.500-1.500V32c-8 3-13 3-18 1.500s-7 0-10.500-4.500z" fill="#9a9a9a" opacity=".9"/><path d="M14 24l8-2" stroke="#8a8a8a" stroke-width="2"/><g transform="translate(16 21) rotate(-40)"><path d="M0 0L9 -3V3z" fill="#e8e8e8"/><rect x="9" y="-3.500" width="32" height="7" fill="#9c9c9c"/><rect x="9" y="-3.500" width="32" height="1.500" fill="#d8d8d8"/><rect x="9" y="1.500" width="32" height="2" fill="#666"/></g></svg>
<svg class="a" style="left:428.3px;top:421.0px;overflow:hidden;" width="38.5" height="38.4" viewBox="0 0 38.5 38.4"><rect width="38.5" height="38.4" fill="#d8d8d8"/><path d="M12 28c2-1 4 0 5 2s3 2.500 5 1 8-6 16.500-9V28c-7 2-11 7-15 8s-6-1-7-3-3-2-4.500-1.500z" fill="#2a2a2a"/><g transform="translate(14 24) rotate(-42)"><path d="M0 0C3 -3 7 -2.500 10 -1.500V1.500C7 2.500 3 3 0 0z" fill="#111"/><rect x="10" y="-1.500" width="9" height="3" fill="#b8b8b8"/><rect x="19" y="-1.300" width="26" height="2.600" fill="#6e3a28"/></g></svg>
<svg class="a" style="left:468.0px;top:421.0px;overflow:hidden;" width="38.5" height="38.4" viewBox="0 0 38.5 38.4"><rect width="38.5" height="38.4" fill="#d8d8d8"/><defs><linearGradient id="lg4" x1="0" x2="1"><stop offset="0" stop-color="#f4f4f4"/><stop offset=".5" stop-color="#999"/><stop offset="1" stop-color="#2a2a2a"/></linearGradient></defs><path d="M12 29c2-1 4 0 5 2s3 2.500 5 1 8-6 16.500-9V28c-7 2-11 7-15 8s-6-1-7-3-3-2-4.500-1.500z" fill="url(#lg4)"/><g transform="translate(14 24) rotate(-42)"><path d="M0 0C3 -3 7 -2.500 10 -1.500V1.500C7 2.500 3 3 0 0z" fill="#7a4a30"/><rect x="10" y="-1.500" width="9" height="3" fill="#c8c8c8"/><rect x="19" y="-1.300" width="26" height="2.600" fill="#e09a2a"/></g></svg>
<svg class="a" style="left:507.7px;top:421.0px;overflow:hidden;" width="38.5" height="38.4" viewBox="0 0 38.5 38.4"><rect width="38.5" height="38.4" fill="#d8d8d8"/><path d="M10 31l12-6-2 8c5 0 12-4 17-9" fill="none" stroke="#333" stroke-width="1"/><path d="M10 31l12-6" stroke="#bbb" stroke-width="1"/><g transform="translate(16 21) rotate(-42)"><path d="M0 0C2 -1.500 5 -1.500 7 -1V1C5 1.500 2 1.500 0 0z" fill="#222"/><rect x="7" y="-1.200" width="9" height="2.400" fill="#aaa"/><rect x="16" y="-1.400" width="26" height="2.800" fill="#e0782a"/></g></svg>
<svg class="a" style="left:547.4px;top:421.0px;overflow:hidden;" width="38.5" height="38.4" viewBox="0 0 38.5 38.4"><rect width="38.5" height="38.4" fill="#d8d8d8"/><path d="M12 30l6-2 18-4 2.500 1V36H16z" fill="#bdbdbd"/><path d="M14 29l4 5M18 28l4 6M22 27l4 7M26 27l4 7M30 26l4 7" stroke="#e4e4e4" stroke-width="1"/><circle cx="12" cy="26.500" r="1.800" fill="#111"/><path d="M12 28l1.500 4" stroke="#222" stroke-width="1.200"/><g transform="translate(16 22) rotate(-42)"><path d="M0 0L3 -1.200V1.200z" fill="#2a4a5a"/><path d="M3 -1.200L11 -4.200V4.200L3 1.200z" fill="#d8a078"/><rect x="11" y="-4.200" width="32" height="8.400" fill="#2f7fc0"/><rect x="11" y="-2.500" width="32" height="2" fill="#6ab0e8"/></g><g transform="translate(7.500 8.500) rotate(-42)"><rect x="-3.500" y="-1.600" width="7" height="3.200" rx="1" fill="none" stroke="#2a3a5a" stroke-width=".9"/></g></svg>
<svg class="a" style="left:428.3px;top:460.7px;overflow:hidden;" width="38.5" height="6" viewBox="0 0 38.5 6"><rect width="38.5" height="6" fill="#d8d8d8"/><path d="M30 6L38.500 0V6z" fill="#3a78d0"/></svg>
<svg class="a" style="left:468.0px;top:460.7px;overflow:hidden;" width="38.5" height="6" viewBox="0 0 38.5 6"><rect width="38.5" height="6" fill="#d8d8d8"/><path d="M28 6L38.500 -2V6z" fill="#2a50c8"/></svg>
<svg class="a" style="left:507.7px;top:460.7px;overflow:hidden;" width="38.5" height="6" viewBox="0 0 38.5 6"><rect width="38.5" height="6" fill="#d8d8d8"/><path d="M28 6L38.500 -1V6z" fill="#333"/></svg>
<svg class="a" style="left:547.4px;top:460.7px;overflow:hidden;" width="38.5" height="6" viewBox="0 0 38.5 6"><rect width="38.5" height="6" fill="#d8d8d8"/><path d="M28 6L38.500 0V6z" fill="#c8a088"/></svg>
<div class="a" style="left:428.300px;top:381.300px;width:38.500px;height:38.400px;box-sizing:border-box;border:1.500px solid #4a78a8;"></div>
<div class="a" style="left:588.0px;top:341.0px;width:9.5px;height:126.4px;background:#404040;"></div>
<div class="a" style="left:589.5px;top:350.0px;width:7.0px;height:17.5px;background:#555;border-radius:1px;"></div>
<svg class="a" style="left:589.5px;top:343.0px;" width="7" height="5" viewBox="0 0 7 5"><path d="M1 4l2.500-2.800L6 4z" fill="#aaa"/></svg>
<svg class="a" style="left:589.5px;top:460.0px;" width="7" height="5" viewBox="0 0 7 5"><path d="M1 1l2.500 2.800L6 1z" fill="#aaa"/></svg>
<div class="a" style="left:428.0px;top:468.0px;width:112.0px;height:13.0px;background:#3b3b3b;box-shadow:inset 0 0 0 1px #383838;"></div>
<div class="a" style="left:540.6px;top:468.0px;width:56.5px;height:13.0px;background:#464646;box-shadow:inset 1px 0 0 #585858;"></div>
<svg class="a" style="left:545.0px;top:470.5px;" width="7" height="8" viewBox="0 0 7 8"><path d="M.6 4.200l2 2.600L6.200 .8" fill="none" stroke="#eee" stroke-width="1.200"/></svg>
<span id="t0" class="t" style="left:20.0px;top:3.5px;font-size:7.40px;color:#ffffff;transform:scaleX(1.011);">kisekirei.kra (19.7 MiB)</span>
<span id="t1" class="t" style="left:102.0px;top:3.5px;font-size:7.40px;color:#ffffff;transform:scaleX(1.014);">- Krita</span>
<span id="t2" class="t" style="left:7.5px;top:20.5px;font-size:7.30px;color:#e4e4e4;transform:scaleX(0.800);">ファイル(F)</span>
<span id="t3" class="t" style="left:48.3px;top:20.5px;font-size:7.30px;color:#e4e4e4;transform:scaleX(0.995);">編集(E)</span>
<span id="t4" class="t" style="left:81.7px;top:20.5px;font-size:7.30px;color:#e4e4e4;transform:scaleX(1.028);">表示(V)</span>
<span id="t5" class="t" style="left:117.5px;top:20.5px;font-size:7.30px;color:#e4e4e4;transform:scaleX(1.047);">画像(I)</span>
<span id="t6" class="t" style="left:150.0px;top:20.5px;font-size:7.30px;color:#e4e4e4;transform:scaleX(0.858);">レイヤー(L)</span>
<span id="t7" class="t" style="left:191.7px;top:20.5px;font-size:7.30px;color:#e4e4e4;transform:scaleX(0.991);">選択(S)</span>
<span id="t8" class="t" style="left:225.8px;top:20.5px;font-size:7.30px;color:#e4e4e4;transform:scaleX(0.789);">フィルタ(R)</span>
<span id="t9" class="t" style="left:267.5px;top:20.5px;font-size:7.30px;color:#e4e4e4;transform:scaleX(0.826);">ツール(T)</span>
<span id="t10" class="t" style="left:303.7px;top:20.5px;font-size:7.30px;color:#e4e4e4;transform:scaleX(1.063);">設定(N)</span>
<span id="t11" class="t" style="left:340.0px;top:20.5px;font-size:7.30px;color:#e4e4e4;transform:scaleX(0.794);">ウィンドウ(W)</span>
<span id="t12" class="t" style="left:388.3px;top:20.5px;font-size:7.30px;color:#e4e4e4;transform:scaleX(0.937);">ヘルプ(H)</span>
<span id="t13" class="t" style="left:195.0px;top:61.3px;font-size:7.30px;color:#e0e0e0;transform:scaleX(1.024);">kisekirei.kra (19.7 MiB)</span>
<span id="t14" class="t" style="left:235.8px;top:38.0px;font-size:7.40px;color:#e4e4e4;transform:scaleX(1.014);">通常</span>
<span id="t15" class="t" style="left:488.0px;top:38.3px;font-size:7.30px;color:#f0f0f0;transform:scaleX(1.002);">不透明度: 100%</span>
<span id="t16" class="t" style="left:19.6px;top:67.9px;font-size:12.00px;color:#e0e0e0;transform:scaleX(1.148);font-family:'Liberation Serif',serif;font-weight:bold;">T</span>
<span id="t17" class="t" style="left:25.0px;top:486.0px;font-size:7.30px;color:#d8d8d8;transform:scaleX(0.986);">b...1</span>
<span id="t18" class="t" style="left:56.4px;top:486.0px;font-size:7.30px;color:#d8d8d8;transform:scaleX(0.961);">RGB...icc</span>
<span id="t19" class="t" style="left:289.5px;top:486.0px;font-size:7.30px;color:#d8d8d8;transform:scaleX(0.995);">1,754 <u>x</u> 1,240 (19.7 MiB)</span>
<span id="t20" class="t" style="left:396.0px;top:486.0px;font-size:7.30px;color:#d8d8d8;transform:scaleX(1.051);">0.00°</span>
<span id="t21" class="t" style="left:478.3px;top:485.8px;font-size:7.30px;color:#d8d8d8;transform:scaleX(0.945);">133.3%</span>
<span id="t22" class="t" style="left:436.0px;top:58.8px;font-size:7.20px;color:#e6e6e6;transform:scaleX(0.973);">拡張色選択</span>
<span id="t23" class="t" style="left:486.0px;top:59.2px;font-size:7.20px;color:#dcdcdc;transform:scaleX(0.757);">ツールのオプション</span>
<span id="t24" class="t" style="left:443.3px;top:72.2px;font-size:7.20px;color:#e2e2e2;transform:scaleX(0.965);">拡張色選択</span>
<span id="t25" class="t" style="left:443.3px;top:162.2px;font-size:7.20px;color:#e2e2e2;transform:scaleX(0.715);">レイヤー</span>
<span id="t26" class="t" style="left:431.0px;top:178.8px;font-size:7.20px;color:#e2e2e2;transform:scaleX(0.973);">通常</span>
<span id="t27" class="t" style="left:471.5px;top:199.6px;font-size:7.20px;color:#f0f0f0;transform:scaleX(0.997);">不透明度: 100%</span>
<span id="t28" class="t" style="left:486.7px;top:221.4px;font-size:7.20px;color:#f0f0f0;transform:scaleX(1.000);">線</span>
<span id="t29" class="t" style="left:486.7px;top:239.0px;font-size:7.20px;color:#787878;transform:scaleX(0.927);">下描き</span>
<span id="t30" class="t" style="left:486.7px;top:256.7px;font-size:7.20px;color:#e4e4e4;transform:scaleX(0.960);">背後の丸枠</span>
<span id="t31" class="t" style="left:486.7px;top:274.3px;font-size:7.20px;color:#e4e4e4;transform:scaleX(0.973);">背景</span>
<span id="t32" class="t" style="left:574.2px;top:220.8px;font-size:11.00px;color:#a8bcd2;transform:scaleX(1.353);font-style:italic;">α</span>
<span id="t33" class="t" style="left:574.2px;top:238.4px;font-size:11.00px;color:#8a8a8a;transform:scaleX(1.353);font-style:italic;">α</span>
<span id="t34" class="t" style="left:574.2px;top:256.1px;font-size:11.00px;color:#8a8a8a;transform:scaleX(1.353);font-style:italic;">α</span>
<span id="t35" class="t" style="left:574.2px;top:273.7px;font-size:11.00px;color:#8a8a8a;transform:scaleX(1.353);font-style:italic;">α</span>
<span id="t36" class="t" style="left:442.5px;top:312.5px;font-size:7.20px;color:#e2e2e2;transform:scaleX(0.724);">ブラシプリセット</span>
<span id="t37" class="t" style="left:430.8px;top:326.7px;font-size:7.20px;color:#e2e2e2;transform:scaleX(0.804);">すべて</span>
<span id="t38" class="t" style="left:548.3px;top:326.2px;font-size:7.20px;color:#dcdcdc;transform:scaleX(0.923);">Tag</span>
<span id="t39" class="t" style="left:431.0px;top:467.6px;font-size:7.20px;color:#6e6e6e;transform:scaleX(0.973);">検索</span>
<span id="t40" class="t" style="left:556.5px;top:467.5px;font-size:7.20px;color:#e4e4e4;transform:scaleX(0.757);">タグでフィルタ</span>
</body></html>
